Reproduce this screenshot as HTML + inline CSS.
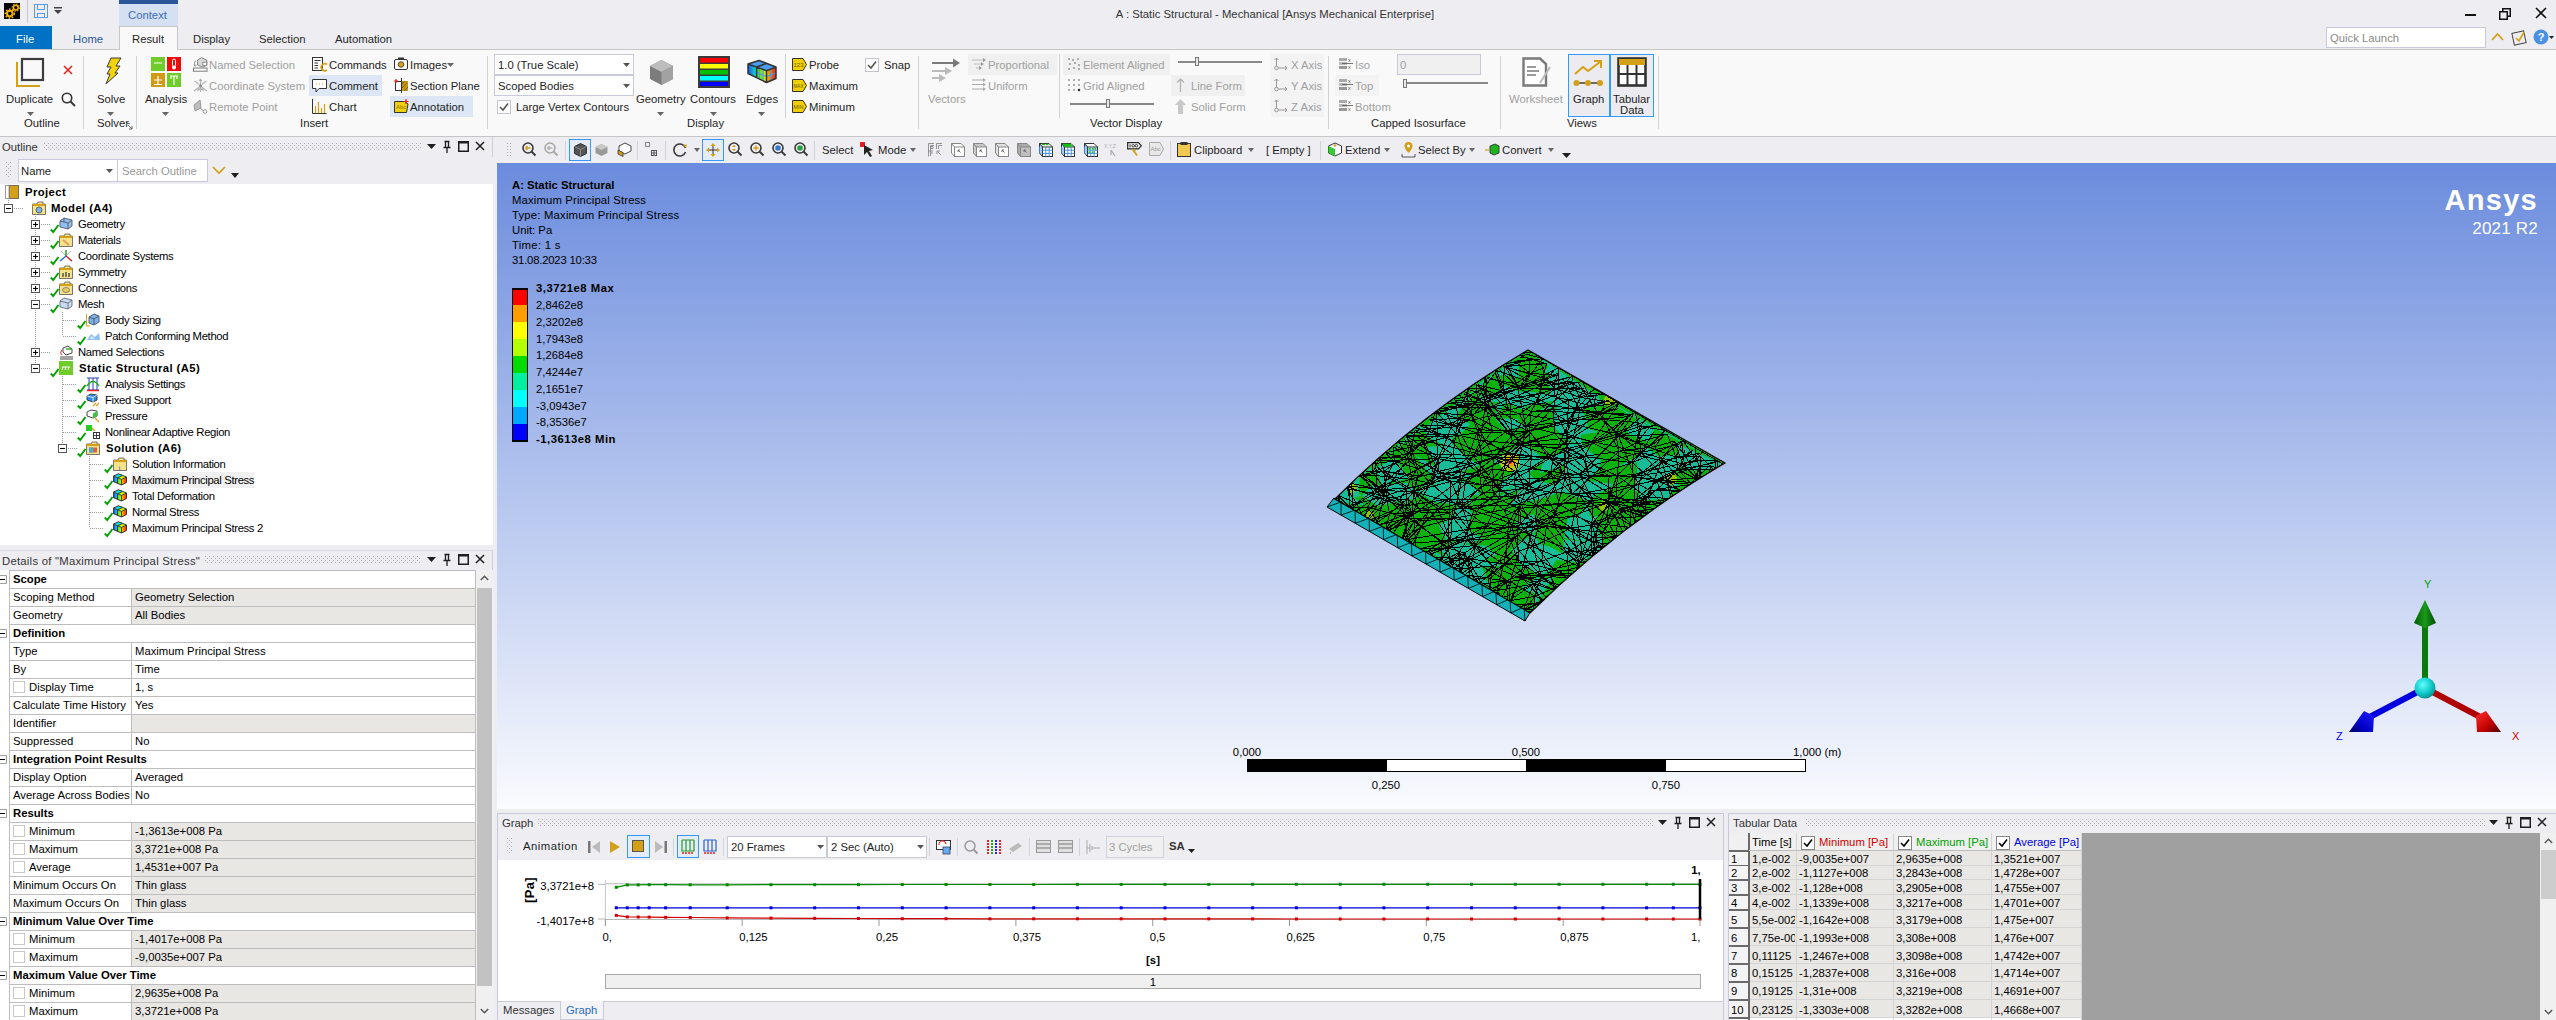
<!DOCTYPE html>
<html><head><meta charset="utf-8"><style>
html,body{margin:0;padding:0;width:2556px;height:1020px;overflow:hidden;background:#eeeef2;}
body{position:relative;font-family:"Liberation Sans", sans-serif;}
.t{position:absolute;white-space:nowrap;line-height:1;}
.r{position:absolute;}
.s{position:absolute;overflow:visible;}
</style></head><body>
<svg width="0" height="0" style="position:absolute"><defs><pattern id="dotpat" width="4" height="4" patternUnits="userSpaceOnUse"><rect x="0" y="0" width="1" height="1" fill="#a8a8b4"/><rect x="2" y="2" width="1" height="1" fill="#a8a8b4"/></pattern></defs></svg>
<div class="r" style="left:0px;top:0px;width:2556px;height:50px;background:#eeeef2;"></div>
<svg class="s" style="left:4px;top:3px;" width="16" height="16" viewBox="0 0 16 16"><rect width="16" height="16" fill="#000"/><circle cx="11.8" cy="4.6" r="2.4" fill="none" stroke="#f0b000" stroke-width="1.6"/><circle cx="11.8" cy="4.6" r="3.6" fill="none" stroke="#f0b000" stroke-width="1.2" stroke-dasharray="1.4 1.4"/><circle cx="5.8" cy="10.6" r="2.8" fill="none" stroke="#f0b000" stroke-width="2"/><circle cx="5.8" cy="10.6" r="4.5" fill="none" stroke="#f0b000" stroke-width="1.5" stroke-dasharray="1.7 1.6"/></svg>
<div class="r" style="left:27px;top:0px;width:1px;height:23px;background:#c8c8cc;"></div>
<svg class="s" style="left:34px;top:4px;" width="14" height="14" viewBox="0 0 14 14"><rect x="0.5" y="0.5" width="13" height="13" fill="none" stroke="#5a9ae6" stroke-width="1"/><rect x="3.5" y="0.5" width="7" height="5" fill="none" stroke="#5a9ae6"/><rect x="3.5" y="9.5" width="7" height="4" fill="none" stroke="#5a9ae6"/></svg>
<svg class="s" style="left:54px;top:7px;" width="8" height="7" viewBox="0 0 8 7"><rect x="0" y="0" width="8" height="1.5" fill="#444"/><path d="M0 3 L8 3 L4 7 Z" fill="#444"/></svg>
<div class="r" style="left:119px;top:0px;width:59px;height:4px;background:#2b579a;"></div>
<div class="r" style="left:119px;top:4px;width:59px;height:22px;background:#d5e1f2;"></div>
<div class="t" style="left:128px;top:10.43px;font-size:11.3px;color:#3c6cb4;">Context</div>
<div class="r" style="left:0px;top:26px;width:52px;height:23px;background:#0072c6;"></div>
<div class="t" style="left:16px;top:34.43px;font-size:11.3px;color:#ffffff;">File</div>
<div class="t" style="left:73px;top:34.43px;font-size:11.3px;color:#2b5797;">Home</div>
<div class="r" style="left:0px;top:49px;width:2556px;height:1px;background:#c6c6c6;"></div>
<div class="r" style="left:119px;top:26px;width:59px;height:24px;background:#f9f9f9;border:1px solid #c6c6c6;border-bottom:none;box-sizing:border-box;"></div>
<div class="t" style="left:132px;top:34.43px;font-size:11.3px;color:#262626;">Result</div>
<div class="t" style="left:193px;top:34.43px;font-size:11.3px;color:#262626;">Display</div>
<div class="t" style="left:259px;top:34.43px;font-size:11.3px;color:#262626;">Selection</div>
<div class="t" style="left:335px;top:34.43px;font-size:11.3px;color:#262626;">Automation</div>
<div class="t" style="left:1275px;top:9.43px;font-size:11.3px;color:#333;transform:translateX(-50%);">A : Static Structural - Mechanical [Ansys Mechanical Enterprise]</div>
<div class="r" style="left:2465px;top:14px;width:11px;height:1.5px;background:#111;"></div>
<svg class="s" style="left:2499px;top:8px;" width="12" height="12" viewBox="0 0 12 12"><rect x="0.75" y="3.75" width="7.5" height="7.5" fill="none" stroke="#111" stroke-width="1.5"/><path d="M3.75 3.75 V0.75 H11.25 V8.25 H8.25" fill="none" stroke="#111" stroke-width="1.5"/></svg>
<svg class="s" style="left:2535px;top:7px;" width="12" height="12" viewBox="0 0 12 12"><path d="M1 1 L11 11 M11 1 L1 11" stroke="#111" stroke-width="1.6"/></svg>
<div class="r" style="left:2326px;top:27px;width:160px;height:21px;background:#ffffff;border:1px solid #c8cadc;box-sizing:border-box;"></div>
<div class="t" style="left:2330px;top:33.43px;font-size:11.3px;color:#8a8a8a;">Quick Launch</div>
<svg class="s" style="left:2491px;top:32px;" width="13" height="9" viewBox="0 0 13 9"><path d="M1 8 L6.5 2 L12 8" fill="none" stroke="#d4a017" stroke-width="1.8"/></svg>
<svg class="s" style="left:2511px;top:29px;" width="17" height="17" viewBox="0 0 17 17"><rect x="2" y="3" width="12" height="12" fill="none" stroke="#444" transform="rotate(-12 8 9)"/><path d="M5 9 L8 12 L13 3" fill="none" stroke="#d4a017" stroke-width="1.6"/></svg>
<svg class="s" style="left:2533px;top:28px;" width="22" height="18" viewBox="0 0 22 18"><circle cx="8" cy="9" r="7.5" fill="#4a90e2"/><text x="8" y="13" font-size="11" font-weight="bold" fill="#fff" text-anchor="middle" font-family="Liberation Sans">?</text><path d="M16 8 L21 8 L18.5 11 Z" fill="#222"/></svg>
<div class="r" style="left:0px;top:50px;width:2556px;height:86px;background:#f9f9f9;"></div>
<div class="r" style="left:0px;top:136px;width:2556px;height:1px;background:#c6c6c6;"></div>
<svg class="s" style="left:16px;top:58px;" width="29" height="29" viewBox="0 0 29 29"><path d="M1 4 V28 H24" fill="none" stroke="#d4a017" stroke-width="2"/><rect x="6" y="1" width="21" height="21" fill="none" stroke="#3c3c3c" stroke-width="2.2"/></svg>
<svg class="s" style="left:63px;top:65px;" width="10" height="10" viewBox="0 0 10 10"><path d="M1 1 L9 9 M9 1 L1 9" stroke="#e81c1c" stroke-width="1.5"/></svg>
<div class="t" style="left:6px;top:94.43px;font-size:11.3px;color:#1e1e1e;">Duplicate</div>
<svg class="s" style="left:61px;top:92px;" width="15" height="15" viewBox="0 0 15 15"><circle cx="6" cy="6" r="4.7" fill="none" stroke="#333" stroke-width="1.6"/><path d="M9.5 9.5 L14 14" stroke="#333" stroke-width="1.8"/></svg>
<svg class="s" style="left:27px;top:112px;" width="7" height="4" viewBox="0 0 7 4"><path d="M0 0 L7 0 L3.5 4 Z" fill="#666"/></svg>
<div class="t" style="left:24px;top:118.43px;font-size:11.3px;color:#1e1e1e;">Outline</div>
<div class="r" style="left:83px;top:56px;width:1px;height:73px;background:#d0d0d8;"></div>
<svg class="s" style="left:103px;top:57px;" width="19" height="28" viewBox="0 0 19 28"><path d="M8 1 L18 1 L13 9 L17 9 L12 16 L15 16 L3 27 L7 17 L4 17 L8 10 L4 10 Z" fill="#f2d40c" stroke="#3a3a3a" stroke-width="1"/></svg>
<div class="t" style="left:97px;top:94.43px;font-size:11.3px;color:#1e1e1e;">Solve</div>
<svg class="s" style="left:107px;top:112px;" width="7" height="4" viewBox="0 0 7 4"><path d="M0 0 L7 0 L3.5 4 Z" fill="#666"/></svg>
<div class="t" style="left:97px;top:118.43px;font-size:11.3px;color:#1e1e1e;">Solver</div>
<svg class="s" style="left:126px;top:123px;" width="7" height="7" viewBox="0 0 7 7"><path d="M0.5 0.5 H4 M0.5 0.5 V4 M2 2 L6 6 M6 3 V6 H3" fill="none" stroke="#666" stroke-width="1"/></svg>
<div class="r" style="left:136px;top:56px;width:1px;height:73px;background:#d0d0d8;"></div>
<svg class="s" style="left:151px;top:57px;" width="31" height="31" viewBox="0 0 31 31"><rect x="0" y="0" width="14" height="14" fill="#6fcc2a"/><rect x="16" y="0" width="14" height="14" fill="#f00a0a"/><rect x="0" y="16" width="14" height="14" fill="#d09a14"/><rect x="16" y="16" width="14" height="14" fill="#6fcc2a"/><path d="M3 6 H11" stroke="#fff" stroke-width="1"/><rect x="21.5" y="2" width="3" height="8" rx="1.5" fill="none" stroke="#fff"/><circle cx="23" cy="10.5" r="2" fill="#fff"/><path d="M7 19 V27 M3 23 H11 M3 27.5 H11" stroke="#fff" stroke-width="1.2"/><path d="M19 19 H27 M23 19 V28 M20 19 V22 M26 19 V22" stroke="#fff" stroke-width="1.2"/></svg>
<div class="t" style="left:145px;top:94.43px;font-size:11.3px;color:#1e1e1e;">Analysis</div>
<svg class="s" style="left:162px;top:112px;" width="7" height="4" viewBox="0 0 7 4"><path d="M0 0 L7 0 L3.5 4 Z" fill="#666"/></svg>
<svg class="s" style="left:193px;top:57px;" width="15" height="15" viewBox="0 0 15 15"><path d="M4.5 3 L8.5 0.7 L13.8 3 V8 L10 10.3 L4.5 8 Z" fill="#d8d8d8" stroke="#7a7a7a" stroke-width="0.9"/><path d="M9.8 5.2 H13.8 V8.4 H9.8 Z" fill="#fff" stroke="#7a7a7a" stroke-width="0.9"/><path d="M2.6 3.5 Q0.6 6 2 8.5" fill="none" stroke="#8a8a8a" stroke-width="0.9"/><path d="M1 7.5 L2.2 9.3 L3.6 7.8" fill="none" stroke="#8a8a8a" stroke-width="0.9"/><rect x="0.5" y="11" width="13.5" height="3.2" fill="#fff" stroke="#7a7a7a" stroke-width="1"/></svg>
<div class="t" style="left:209px;top:60.43px;font-size:11.3px;color:#a0a0a0;">Named Selection</div>
<svg class="s" style="left:193px;top:78px;" width="15" height="15" viewBox="0 0 15 15"><g stroke="#b4b4b4" stroke-width="1.2" fill="none"><path d="M7.5 7.5 V1.5 M1.5 3 L6 6.3 M13.5 3 L9 6.3 M1 13 L6 9.3 M14 13 L9 9.3 M7.5 9 V14"/></g><path d="M7.5 0.5 L9.3 3 H5.7 Z M3.5 13 L6.5 9 L6.8 12 Z M11.5 13 L8.5 9 L8.2 12 Z" fill="#a8a8a8"/><circle cx="7.5" cy="7.8" r="1.5" fill="#888"/></svg>
<div class="t" style="left:209px;top:81.43px;font-size:11.3px;color:#a0a0a0;">Coordinate System</div>
<svg class="s" style="left:193px;top:99px;" width="15" height="15" viewBox="0 0 15 15"><path d="M1 6 L7 1 L8 9 L2 12 Z" fill="#bdbdbd" stroke="#9a9a9a"/><path d="M7 9 L11 12" stroke="#999"/><circle cx="12" cy="12.5" r="1.8" fill="none" stroke="#999"/></svg>
<div class="t" style="left:209px;top:102.43px;font-size:11.3px;color:#a0a0a0;">Remote Point</div>
<svg class="s" style="left:312px;top:57px;" width="16" height="15" viewBox="0 0 16 15"><rect x="0.5" y="0.5" width="10" height="13" fill="#fff" stroke="#333"/><path d="M2.5 3.5 H8.5 M2.5 6 H6 M2.5 8.5 H6 M2.5 11 H6" stroke="#333"/><path d="M15 7.5 A3.5 3.5 0 1 0 15 13" fill="none" stroke="#d4a017" stroke-width="1.8"/></svg>
<div class="t" style="left:329px;top:60.43px;font-size:11.3px;color:#1e1e1e;">Commands</div>
<div class="r" style="left:309px;top:75px;width:73px;height:21px;background:#dce6f4;"></div>
<svg class="s" style="left:312px;top:79px;" width="15" height="14" viewBox="0 0 15 14"><path d="M0.5 0.5 H14.5 V9.5 H7 L4 13 V9.5 H0.5 Z" fill="#fff" stroke="#333"/><path d="M4 5 H5 M7 5 H8 M10 5 H11" stroke="#d4a017"/></svg>
<div class="t" style="left:329px;top:81.43px;font-size:11.3px;color:#1e1e1e;">Comment</div>
<svg class="s" style="left:312px;top:99px;" width="15" height="15" viewBox="0 0 15 15"><path d="M0.5 0 V14.5 H14.5" fill="none" stroke="#333"/><path d="M3.5 14 V7 M6.5 14 V3 M9.5 14 V9 M12.5 14 V5" stroke="#d4a017" stroke-width="1.2"/></svg>
<div class="t" style="left:329px;top:102.43px;font-size:11.3px;color:#1e1e1e;">Chart</div>
<svg class="s" style="left:394px;top:57px;" width="15" height="14" viewBox="0 0 15 14"><rect x="0.5" y="2.5" width="13" height="10" rx="1.5" fill="#fff" stroke="#333"/><rect x="4" y="0.5" width="6" height="2" fill="#333"/><circle cx="7" cy="7.5" r="2.8" fill="#d4a017" stroke="#333" stroke-width="0.8"/></svg>
<div class="t" style="left:410px;top:60.43px;font-size:11.3px;color:#1e1e1e;">Images</div>
<svg class="s" style="left:447px;top:63px;" width="7" height="4" viewBox="0 0 7 4"><path d="M0 0 L7 0 L3.5 4 Z" fill="#666"/></svg>
<svg class="s" style="left:394px;top:78px;" width="15" height="15" viewBox="0 0 15 15"><rect x="1.5" y="3.5" width="12" height="9" fill="#fff" stroke="#333"/><rect x="7" y="3" width="7" height="10" fill="#c8960a"/><path d="M8 6 L11 3 M8 10 L13 5 M10 13 L14 9" stroke="#7a5a00"/><path d="M7.5 0 V15" stroke="#333"/><path d="M2 1 V5 M0 3 H4" stroke="#e81c1c" stroke-width="1.2"/></svg>
<div class="t" style="left:410px;top:81.43px;font-size:11.3px;color:#1e1e1e;">Section Plane</div>
<div class="r" style="left:390px;top:96px;width:83px;height:21px;background:#dce6f4;"></div>
<svg class="s" style="left:394px;top:99px;" width="15" height="15" viewBox="0 0 15 15"><path d="M0.5 2.5 H11 L14 5 L12.5 13.5 H0.5 Z" fill="#f0d010" stroke="#333"/><text x="2" y="10" font-size="6" fill="#8a7000" font-family="Liberation Sans">Abc</text><path d="M12 0 V5 M9.5 2.5 H14.5" stroke="#e81c1c" stroke-width="1.2"/></svg>
<div class="t" style="left:410px;top:102.43px;font-size:11.3px;color:#1e1e1e;">Annotation</div>
<div class="t" style="left:300px;top:118.43px;font-size:11.3px;color:#1e1e1e;">Insert</div>
<div class="r" style="left:487px;top:56px;width:1px;height:73px;background:#d0d0d8;"></div>
<div class="r" style="left:494px;top:54px;width:140px;height:21px;background:#ffffff;border:1px solid #c8cadc;box-sizing:border-box;"></div>
<div class="t" style="left:498px;top:60.43px;font-size:11.3px;color:#1e1e1e;">1.0 (True Scale)</div>
<svg class="s" style="left:623px;top:63px;" width="7" height="4" viewBox="0 0 7 4"><path d="M0 0 L7 0 L3.5 4 Z" fill="#555"/></svg>
<div class="r" style="left:494px;top:75px;width:140px;height:21px;background:#ffffff;border:1px solid #c8cadc;box-sizing:border-box;"></div>
<div class="t" style="left:498px;top:81.43px;font-size:11.3px;color:#1e1e1e;">Scoped Bodies</div>
<svg class="s" style="left:623px;top:84px;" width="7" height="4" viewBox="0 0 7 4"><path d="M0 0 L7 0 L3.5 4 Z" fill="#555"/></svg>
<div class="r" style="left:497px;top:100px;width:14px;height:14px;background:#ffffff;border:1px solid #c4c4cc;box-sizing:border-box;"></div>
<svg class="s" style="left:499px;top:102px;" width="10" height="10" viewBox="0 0 10 10"><path d="M1 5 L4 8 L9 1.5" fill="none" stroke="#555" stroke-width="1.6"/></svg>
<div class="t" style="left:516px;top:102.43px;font-size:11.3px;color:#1e1e1e;">Large Vertex Contours</div>
<svg class="s" style="left:649px;top:60px;" width="25" height="25" viewBox="0 0 25 25"><path d="M12.5 0 L24 6 L24 19 L12.5 25 L1 19 L1 6 Z" fill="#7c7c7c"/><path d="M12.5 0 L24 6 L12.5 12 L1 6 Z" fill="#bdbdbd"/><path d="M12.5 12 L24 6 L24 19 L12.5 25 Z" fill="#a2a2a2"/></svg>
<div class="t" style="left:636px;top:94.43px;font-size:11.3px;color:#1e1e1e;">Geometry</div>
<svg class="s" style="left:657px;top:112px;" width="7" height="4" viewBox="0 0 7 4"><path d="M0 0 L7 0 L3.5 4 Z" fill="#666"/></svg>
<svg class="s" style="left:698px;top:56px;" width="32" height="32" viewBox="0 0 32 32"><rect x="0" y="0" width="32" height="32" fill="#3a3a3a"/><rect x="2" y="2" width="28" height="4.5" fill="#f00"/><rect x="2" y="8" width="28" height="4.5" fill="#ff0"/><rect x="2" y="14" width="28" height="4.5" fill="#00c000"/><rect x="2" y="20" width="28" height="4.5" fill="#0ff"/><rect x="2" y="26" width="28" height="4" fill="#00f"/></svg>
<div class="t" style="left:690px;top:94.43px;font-size:11.3px;color:#1e1e1e;">Contours</div>
<svg class="s" style="left:710px;top:112px;" width="7" height="4" viewBox="0 0 7 4"><path d="M0 0 L7 0 L3.5 4 Z" fill="#666"/></svg>
<svg class="s" style="left:747px;top:60px;" width="30" height="24" viewBox="0 0 30 24"><defs><linearGradient id="eg1" x1="0" x2="1"><stop offset="0" stop-color="#2050f0"/><stop offset="1" stop-color="#10e8c8"/></linearGradient><linearGradient id="eg2" x1="0" x2="1"><stop offset="0" stop-color="#20e020"/><stop offset="1" stop-color="#f0f000"/></linearGradient><linearGradient id="eg3" x1="0" x2="1"><stop offset="0" stop-color="#f0c000"/><stop offset="1" stop-color="#e81818"/></linearGradient></defs><path d="M1 4 L9.6 7 L9.6 17.6 L1 13.5 Z" fill="url(#eg1)"/><path d="M9.6 7 L19.5 10.7 L19.5 22.5 L9.6 17.6 Z" fill="url(#eg2)"/><path d="M19.5 10.7 L29 7 L29 18.5 L19.5 22.5 Z" fill="url(#eg3)"/><path d="M1 4 L12 0.5 L29 7 L19.5 10.7 Z" fill="#4a9cf0"/><path d="M12.5 8.5 V19 M16 9.8 V21 M9.6 12.5 L19.5 16.5 M24 9 V20.5 M19.5 16.5 L29 13" stroke="#4a9cf0" stroke-width="1.2"/><path d="M1 4 L12 0.5 L29 7 L29 18.5 L19.5 22.5 L1 13.5 Z M1 4 L19.5 10.7 L29 7 M19.5 10.7 V22.5 M9.6 7 V17.6 M9.6 7 L20 3.3" fill="none" stroke="#333" stroke-width="1.5" stroke-linejoin="round"/></svg>
<div class="t" style="left:746px;top:94.43px;font-size:11.3px;color:#1e1e1e;">Edges</div>
<svg class="s" style="left:758px;top:112px;" width="7" height="4" viewBox="0 0 7 4"><path d="M0 0 L7 0 L3.5 4 Z" fill="#666"/></svg>
<div class="t" style="left:687px;top:118.43px;font-size:11.3px;color:#1e1e1e;">Display</div>
<div class="r" style="left:785px;top:54px;width:1px;height:64px;background:#d0d0d8;"></div>
<svg class="s" style="left:792px;top:58px;" width="15" height="13" viewBox="0 0 15 13"><path d="M0.5 0.5 H11 L14.5 6.5 L11 12.5 H0.5 Z" fill="#f0d000" stroke="#333"/><text x="1.5" y="9.3" font-size="6" textLength="10" lengthAdjust="spacingAndGlyphs" fill="#6a5a00" font-family="Liberation Sans">123</text></svg>
<div class="t" style="left:809px;top:60.43px;font-size:11.3px;color:#1e1e1e;">Probe</div>
<svg class="s" style="left:792px;top:79px;" width="15" height="13" viewBox="0 0 15 13"><path d="M0.5 0.5 H11 L14.5 6.5 L11 12.5 H0.5 Z" fill="#f0d000" stroke="#333"/><text x="1.5" y="9.3" font-size="6" textLength="10" lengthAdjust="spacingAndGlyphs" fill="#6a5a00" font-family="Liberation Sans">MAX</text></svg>
<div class="t" style="left:809px;top:81.43px;font-size:11.3px;color:#1e1e1e;">Maximum</div>
<svg class="s" style="left:792px;top:100px;" width="15" height="13" viewBox="0 0 15 13"><path d="M0.5 0.5 H11 L14.5 6.5 L11 12.5 H0.5 Z" fill="#f0d000" stroke="#333"/><text x="1.5" y="9.3" font-size="6" textLength="10" lengthAdjust="spacingAndGlyphs" fill="#6a5a00" font-family="Liberation Sans">MIN</text></svg>
<div class="t" style="left:809px;top:102.43px;font-size:11.3px;color:#1e1e1e;">Minimum</div>
<div class="r" style="left:865px;top:58px;width:14px;height:14px;background:#ffffff;border:1px solid #c4c4cc;box-sizing:border-box;"></div>
<svg class="s" style="left:867px;top:60px;" width="10" height="10" viewBox="0 0 10 10"><path d="M1 5 L4 8 L9 1.5" fill="none" stroke="#555" stroke-width="1.6"/></svg>
<div class="t" style="left:884px;top:60.43px;font-size:11.3px;color:#1e1e1e;">Snap</div>
<div class="r" style="left:918px;top:56px;width:1px;height:73px;background:#d0d0d8;"></div>
<svg class="s" style="left:931px;top:57px;" width="30" height="28" viewBox="0 0 30 28"><path d="M1 6 H25" stroke="#7a7a7a" stroke-width="2"/><path d="M22 1.5 L29 6 L22 10.5 Z" fill="#7a7a7a"/><path d="M1 14 H16" stroke="#bbb" stroke-width="2"/><path d="M14 10 L21 14 L14 18 Z" fill="#bbb"/><path d="M1 21 H10" stroke="#bbb" stroke-width="2"/><path d="M8 17 L15 21 L8 25 Z" fill="#bbb"/></svg>
<div class="t" style="left:928px;top:94.43px;font-size:11.3px;color:#a0a0a0;">Vectors</div>
<div class="r" style="left:968px;top:54px;width:89px;height:21px;background:#f0f0f0;"></div>
<svg class="s" style="left:972px;top:57px;" width="15" height="14" viewBox="0 0 15 14"><path d="M0 3 H12 M2 7 H10 M4 11 H8" stroke="#bbb"/><path d="M11 1 L14 3 L11 5 Z M9 5 L12 7 L9 9 Z M7 9 L10 11 L7 13 Z" fill="#999"/></svg>
<div class="t" style="left:988px;top:60.43px;font-size:11.3px;color:#a0a0a0;">Proportional</div>
<svg class="s" style="left:972px;top:78px;" width="15" height="14" viewBox="0 0 15 14"><path d="M0 2 H12 M0 6.5 H12 M0 11 H12" stroke="#aaa"/><path d="M11 0 L14 2 L11 4 Z M11 4.5 L14 6.5 L11 8.5 Z M11 9 L14 11 L11 13 Z" fill="#aaa"/></svg>
<div class="t" style="left:988px;top:81.43px;font-size:11.3px;color:#a0a0a0;">Uniform</div>
<div class="r" style="left:1059px;top:54px;width:1px;height:64px;background:#d0d0d8;"></div>
<div class="r" style="left:1063px;top:54px;width:107px;height:21px;background:#f0f0f0;"></div>
<svg class="s" style="left:1067px;top:57px;" width="15" height="14" viewBox="0 0 15 14"><g fill="#999"><circle cx="2" cy="2" r="1"/><circle cx="6" cy="3" r="1"/><circle cx="11" cy="2" r="1"/><circle cx="3" cy="7" r="1"/><circle cx="8" cy="6" r="1"/><circle cx="12" cy="8" r="1"/><circle cx="2" cy="12" r="1"/><circle cx="7" cy="11" r="1"/><circle cx="12" cy="12" r="1"/></g></svg>
<div class="t" style="left:1083px;top:60.43px;font-size:11.3px;color:#a0a0a0;">Element Aligned</div>
<svg class="s" style="left:1067px;top:78px;" width="15" height="14" viewBox="0 0 15 14"><g fill="#999"><circle cx="2" cy="2" r="1"/><circle cx="7" cy="2" r="1"/><circle cx="12" cy="2" r="1"/><circle cx="2" cy="7" r="1"/><circle cx="7" cy="7" r="1"/><circle cx="12" cy="7" r="1"/><circle cx="2" cy="12" r="1"/><circle cx="7" cy="12" r="1"/><circle cx="12" cy="12" r="1.3" fill="#333"/></g></svg>
<div class="t" style="left:1083px;top:81.43px;font-size:11.3px;color:#a0a0a0;">Grid Aligned</div>
<div class="r" style="left:1070px;top:103px;width:84px;height:2px;background:#888;"></div>
<div class="r" style="left:1106px;top:99px;width:4px;height:9px;background:#e8e8e8;border:1px solid #777;box-sizing:border-box;"></div>
<div class="r" style="left:1178px;top:61px;width:84px;height:2px;background:#888;"></div>
<div class="r" style="left:1195px;top:57px;width:4px;height:9px;background:#e8e8e8;border:1px solid #777;box-sizing:border-box;"></div>
<div class="r" style="left:1171px;top:75px;width:74px;height:21px;background:#f0f0f0;"></div>
<svg class="s" style="left:1176px;top:78px;" width="9" height="15" viewBox="0 0 9 15"><path d="M4.5 14 V1 M1 4.5 L4.5 1 L8 4.5" fill="none" stroke="#b0b0b0" stroke-width="1.2"/></svg>
<div class="t" style="left:1191px;top:81.43px;font-size:11.3px;color:#a0a0a0;">Line Form</div>
<svg class="s" style="left:1175px;top:99px;" width="11" height="15" viewBox="0 0 11 15"><path d="M5.5 0 L11 6 H8 V15 H3 V6 H0 Z" fill="#c8c8c8"/></svg>
<div class="t" style="left:1191px;top:102.43px;font-size:11.3px;color:#a0a0a0;">Solid Form</div>
<div class="t" style="left:1090px;top:118.43px;font-size:11.3px;color:#1e1e1e;">Vector Display</div>
<div class="r" style="left:1271px;top:54px;width:53px;height:63px;background:#f3f3f3;"></div>
<svg class="s" style="left:1274px;top:57px;" width="14" height="14" viewBox="0 0 14 14"><path d="M2.5 1 V11 H13 M11 9 L13 11 L11 13 M0.5 3 L2.5 1 L4.5 3" fill="none" stroke="#999" stroke-width="1"/><circle cx="2.5" cy="11" r="1.8" fill="#f3f3f3" stroke="#999"/></svg>
<div class="t" style="left:1291px;top:60.43px;font-size:11.3px;color:#a0a0a0;">X Axis</div>
<svg class="s" style="left:1274px;top:78px;" width="14" height="14" viewBox="0 0 14 14"><path d="M2.5 1 V11 H13 M11 9 L13 11 L11 13 M0.5 3 L2.5 1 L4.5 3" fill="none" stroke="#999" stroke-width="1"/><circle cx="2.5" cy="11" r="1.8" fill="#f3f3f3" stroke="#999"/></svg>
<div class="t" style="left:1291px;top:81.43px;font-size:11.3px;color:#a0a0a0;">Y Axis</div>
<svg class="s" style="left:1274px;top:99px;" width="14" height="14" viewBox="0 0 14 14"><path d="M2.5 1 V11 H13 M11 9 L13 11 L11 13 M0.5 3 L2.5 1 L4.5 3" fill="none" stroke="#999" stroke-width="1"/><circle cx="2.5" cy="11" r="1.8" fill="#f3f3f3" stroke="#999"/></svg>
<div class="t" style="left:1291px;top:102.43px;font-size:11.3px;color:#a0a0a0;">Z Axis</div>
<div class="r" style="left:1328px;top:56px;width:1px;height:73px;background:#d0d0d8;"></div>
<svg class="s" style="left:1339px;top:57px;" width="14" height="13" viewBox="0 0 14 13"><rect x="0" y="1" width="8" height="3" fill="#aaa"/><rect x="0" y="5" width="8" height="3" fill="#bbb"/><rect x="0" y="9" width="8" height="3" fill="#999"/><path d="M3 6.5 H14" stroke="#555" stroke-width="0.8"/><text x="9" y="5" font-size="5.5" fill="#555" font-family="Liberation Sans">x</text><text x="9" y="12" font-size="5.5" fill="#555" font-family="Liberation Sans">x</text></svg>
<div class="t" style="left:1355px;top:60.43px;font-size:11.3px;color:#a0a0a0;">Iso</div>
<div class="r" style="left:1335px;top:75px;width:44px;height:21px;background:#f3f3f3;"></div>
<svg class="s" style="left:1339px;top:78px;" width="14" height="13" viewBox="0 0 14 13"><rect x="0" y="1" width="8" height="3" fill="#aaa"/><rect x="0" y="5" width="8" height="3" fill="#bbb"/><rect x="0" y="9" width="8" height="3" fill="#999"/><path d="M3 6.5 H14" stroke="#555" stroke-width="0.8"/><text x="9" y="5" font-size="5.5" fill="#555" font-family="Liberation Sans">x</text><text x="9" y="12" font-size="5.5" fill="#555" font-family="Liberation Sans">x</text></svg>
<div class="t" style="left:1355px;top:81.43px;font-size:11.3px;color:#a0a0a0;">Top</div>
<svg class="s" style="left:1339px;top:99px;" width="14" height="13" viewBox="0 0 14 13"><rect x="0" y="1" width="8" height="3" fill="#aaa"/><rect x="0" y="5" width="8" height="3" fill="#bbb"/><rect x="0" y="9" width="8" height="3" fill="#999"/><path d="M3 6.5 H14" stroke="#555" stroke-width="0.8"/><text x="9" y="5" font-size="5.5" fill="#555" font-family="Liberation Sans">x</text><text x="9" y="12" font-size="5.5" fill="#555" font-family="Liberation Sans">x</text></svg>
<div class="t" style="left:1355px;top:102.43px;font-size:11.3px;color:#a0a0a0;">Bottom</div>
<div class="r" style="left:1397px;top:54px;width:84px;height:21px;background:#f0f0f0;border:1px solid #c8cadc;box-sizing:border-box;"></div>
<div class="t" style="left:1400px;top:60.43px;font-size:11.3px;color:#a0a0a0;">0</div>
<div class="r" style="left:1405px;top:82px;width:83px;height:2px;background:#888;"></div>
<div class="r" style="left:1403px;top:79px;width:4px;height:9px;background:#e8e8e8;border:1px solid #777;box-sizing:border-box;"></div>
<div class="t" style="left:1371px;top:118.43px;font-size:11.3px;color:#1e1e1e;">Capped Isosurface</div>
<div class="r" style="left:1500px;top:56px;width:1px;height:73px;background:#d0d0d8;"></div>
<svg class="s" style="left:1522px;top:57px;" width="30" height="30" viewBox="0 0 30 30"><path d="M1.5 1.5 H18 L24 7 V28.5 H1.5 Z" fill="#fff" stroke="#7a7a7a" stroke-width="2.4"/><path d="M5 10 H14 M5 14 H17 M5 18 H14" stroke="#7a7a7a" stroke-width="1.6"/><path d="M28 10 L18 26" stroke="#bbb" stroke-width="2"/></svg>
<div class="t" style="left:1509px;top:94.43px;font-size:11.3px;color:#a0a0a0;">Worksheet</div>
<div class="r" style="left:1568px;top:54px;width:42px;height:63px;background:#ebebf0;border:1px solid #3399ff;box-sizing:border-box;"></div>
<div class="r" style="left:1610px;top:54px;width:44px;height:63px;background:#ebebf0;border:1px solid #3399ff;box-sizing:border-box;"></div>
<svg class="s" style="left:1573px;top:60px;" width="32" height="28" viewBox="0 0 32 28"><path d="M2 14 L10 7 L15 11 L27 2" fill="none" stroke="#d4a017" stroke-width="2"/><path d="M21 1 H28 V8" fill="none" stroke="#d4a017" stroke-width="2"/><path d="M3 23 H27" stroke="#333" stroke-width="1.4"/><circle cx="3.5" cy="23" r="3" fill="#d4a017"/><circle cx="15" cy="23" r="3" fill="#d4a017"/><circle cx="27" cy="23" r="3" fill="#d4a017"/></svg>
<div class="t" style="left:1573px;top:94.43px;font-size:11.3px;color:#1e1e1e;">Graph</div>
<svg class="s" style="left:1617px;top:57px;" width="30" height="30" viewBox="0 0 30 30"><rect x="1.5" y="1.5" width="27" height="27" fill="#fff" stroke="#333" stroke-width="2.6"/><rect x="2" y="2" width="26" height="6" fill="#d4a017"/><path d="M1.5 17 H28.5 M10.5 8 V28.5 M19.5 8 V28.5" stroke="#333" stroke-width="2"/></svg>
<div class="t" style="left:1613px;top:94.43px;font-size:11.3px;color:#1e1e1e;">Tabular</div>
<div class="t" style="left:1620px;top:105.43px;font-size:11.3px;color:#1e1e1e;">Data</div>
<div class="t" style="left:1567px;top:118.43px;font-size:11.3px;color:#1e1e1e;">Views</div>
<div class="r" style="left:1658px;top:56px;width:1px;height:73px;background:#d0d0d8;"></div>
<div class="t" style="left:2px;top:142.43px;font-size:11.3px;color:#333;">Outline</div>
<svg class="s" style="left:44px;top:143px" width="378" height="8"><rect width="378" height="8" fill="url(#dotpat)"/></svg>
<svg class="s" style="left:427px;top:144px;" width="9" height="5" viewBox="0 0 9 5"><path d="M0 0 H9 L4.5 5 Z" fill="#1e1e1e"/></svg>
<svg class="s" style="left:443px;top:141px;" width="8" height="12" viewBox="0 0 8 12"><path d="M1.5 0.5 H6.5 M2.5 0.5 V6 M5.5 0.5 V6 M0.5 6.5 H7.5 M4 6.5 V12" fill="none" stroke="#1e1e1e" stroke-width="1.3"/></svg>
<svg class="s" style="left:458px;top:141px;" width="11" height="11" viewBox="0 0 11 11"><rect x="0.75" y="0.75" width="9.5" height="9.5" fill="none" stroke="#1e1e1e" stroke-width="1.5"/><path d="M0.75 1.5 H10.25" stroke="#1e1e1e" stroke-width="2"/></svg>
<svg class="s" style="left:475px;top:141px;" width="10" height="10" viewBox="0 0 10 10"><path d="M1 1 L9 9 M9 1 L1 9" stroke="#1e1e1e" stroke-width="1.5"/></svg>
<div class="r" style="left:492px;top:137px;width:1px;height:20px;background:#d0d0dc;"></div>
<svg class="s" style="left:6px;top:162px" width="5" height="16"><rect width="5" height="16" fill="url(#dotpat)"/></svg>
<div class="r" style="left:18px;top:159px;width:100px;height:23px;background:#fff;border:1px solid #c8cadc;box-sizing:border-box;"></div>
<div class="t" style="left:21px;top:166.43px;font-size:11.3px;color:#1e1e1e;">Name</div>
<svg class="s" style="left:106px;top:169px;" width="7" height="4" viewBox="0 0 7 4"><path d="M0 0 H7 L3.5 4 Z" fill="#555"/></svg>
<div class="r" style="left:117px;top:159px;width:91px;height:23px;background:#fff;border:1px solid #c8cadc;box-sizing:border-box;"></div>
<div class="t" style="left:122px;top:166.43px;font-size:11.3px;color:#9a9a9a;">Search Outline</div>
<svg class="s" style="left:212px;top:166px;" width="14" height="8" viewBox="0 0 14 8"><path d="M1 1 L7 7 L13 1" fill="none" stroke="#d4a017" stroke-width="1.6"/></svg>
<svg class="s" style="left:231px;top:173px;" width="8" height="5" viewBox="0 0 8 5"><path d="M0 0 H8 L4 5 Z" fill="#1e1e1e"/></svg>
<div class="r" style="left:0px;top:184px;width:493px;height:361px;background:#ffffff;"></div>
<div class="r" style="left:493px;top:137px;width:4px;height:408px;background:#eeeef2;"></div>
<div class="r" style="left:8px;top:200px;width:1px;height:4px;background-image:linear-gradient(180deg,#9a9a9a 50%,transparent 50%);background-size:1px 2px;"></div>
<div class="r" style="left:35px;top:216px;width:1px;height:152px;background-image:linear-gradient(180deg,#9a9a9a 50%,transparent 50%);background-size:1px 2px;"></div>
<div class="r" style="left:62px;top:312px;width:1px;height:24px;background-image:linear-gradient(180deg,#9a9a9a 50%,transparent 50%);background-size:1px 2px;"></div>
<div class="r" style="left:62px;top:376px;width:1px;height:72px;background-image:linear-gradient(180deg,#9a9a9a 50%,transparent 50%);background-size:1px 2px;"></div>
<div class="r" style="left:89px;top:456px;width:1px;height:72px;background-image:linear-gradient(180deg,#9a9a9a 50%,transparent 50%);background-size:1px 2px;"></div>
<div class="r" style="left:131px;top:472px;width:123px;height:16px;background:#f0f0f0;"></div>
<svg class="s" style="left:5px;top:185px;" width="14" height="14" viewBox="0 0 14 14"><rect x="4" y="0.5" width="9.5" height="13" fill="#d4a017" stroke="#555" stroke-width="0.8"/><rect x="0.5" y="0.5" width="3.5" height="13" fill="#fff" stroke="#888" stroke-width="0.8"/></svg>
<div class="t" style="left:25px;top:187.43px;font-size:11.3px;color:#000;font-weight:bold;letter-spacing:0.4px;">Project</div>
<svg class="s" style="left:4px;top:204px;" width="9" height="9" viewBox="0 0 9 9"><rect x="0.5" y="0.5" width="8" height="8" fill="#fff" stroke="#555" stroke-width="1"/><path d="M2 4.5 H7" stroke="#000" stroke-width="1.1"/></svg>
<div class="r" style="left:14px;top:208px;width:9px;height:1px;background-image:linear-gradient(90deg,#9a9a9a 50%,transparent 50%);background-size:2px 1px;"></div>
<svg class="s" style="left:32px;top:201px;" width="14" height="14" viewBox="0 0 14 14"><path d="M0.5 3 H5 L6 1 H11 V3 H13.5 V13.5 H0.5 Z" fill="#f5e28a" stroke="#555" stroke-width="0.8"/><path d="M0.5 3 H13.5 V5 H0.5 Z" fill="#d4a017"/><circle cx="7" cy="9" r="3" fill="#7fb0e8" stroke="#456" stroke-width="0.8"/></svg>
<div class="t" style="left:51px;top:203.43px;font-size:11.3px;color:#000;font-weight:bold;letter-spacing:0.4px;">Model (A4)</div>
<svg class="s" style="left:31px;top:220px;" width="9" height="9" viewBox="0 0 9 9"><rect x="0.5" y="0.5" width="8" height="8" fill="#fff" stroke="#555" stroke-width="1"/><path d="M2 4.5 H7" stroke="#000" stroke-width="1.1"/><path d="M4.5 2 V7" stroke="#000" stroke-width="1.1"/></svg>
<div class="r" style="left:41px;top:224px;width:9px;height:1px;background-image:linear-gradient(90deg,#9a9a9a 50%,transparent 50%);background-size:2px 1px;"></div>
<svg class="s" style="left:50px;top:224px;" width="9" height="9" viewBox="0 0 9 9"><path d="M0.8 5.5 L3.2 8 L8.5 1" fill="none" stroke="#00a000" stroke-width="1.9"/></svg>
<svg class="s" style="left:59px;top:217px;" width="14" height="14" viewBox="0 0 14 14"><path d="M1 4 L5 1 L13 3 L13 9 L9 12 L1 10 Z" fill="#8ec0f0" stroke="#556" stroke-width="0.9"/><path d="M1 4 L9 6 L13 3 M9 6 V12 M5 1 V5" fill="none" stroke="#556" stroke-width="0.9"/></svg>
<div class="t" style="left:78px;top:219.43px;font-size:11.3px;color:#000;letter-spacing:-0.35px;">Geometry</div>
<svg class="s" style="left:31px;top:236px;" width="9" height="9" viewBox="0 0 9 9"><rect x="0.5" y="0.5" width="8" height="8" fill="#fff" stroke="#555" stroke-width="1"/><path d="M2 4.5 H7" stroke="#000" stroke-width="1.1"/><path d="M4.5 2 V7" stroke="#000" stroke-width="1.1"/></svg>
<div class="r" style="left:41px;top:240px;width:9px;height:1px;background-image:linear-gradient(90deg,#9a9a9a 50%,transparent 50%);background-size:2px 1px;"></div>
<svg class="s" style="left:50px;top:240px;" width="9" height="9" viewBox="0 0 9 9"><path d="M0.8 5.5 L3.2 8 L8.5 1" fill="none" stroke="#00a000" stroke-width="1.9"/></svg>
<svg class="s" style="left:59px;top:233px;" width="14" height="14" viewBox="0 0 14 14"><path d="M0.5 3 H5 L6 1 H11 V3 H13.5 V13.5 H0.5 Z" fill="#f5e28a" stroke="#555" stroke-width="0.8"/><path d="M0.5 3 H13.5 V5 H0.5 Z" fill="#d4a017"/><path d="M4 7 L10 12" stroke="#e0a060" stroke-width="2"/></svg>
<div class="t" style="left:78px;top:235.43px;font-size:11.3px;color:#000;letter-spacing:-0.35px;">Materials</div>
<svg class="s" style="left:31px;top:252px;" width="9" height="9" viewBox="0 0 9 9"><rect x="0.5" y="0.5" width="8" height="8" fill="#fff" stroke="#555" stroke-width="1"/><path d="M2 4.5 H7" stroke="#000" stroke-width="1.1"/><path d="M4.5 2 V7" stroke="#000" stroke-width="1.1"/></svg>
<div class="r" style="left:41px;top:256px;width:9px;height:1px;background-image:linear-gradient(90deg,#9a9a9a 50%,transparent 50%);background-size:2px 1px;"></div>
<svg class="s" style="left:50px;top:256px;" width="9" height="9" viewBox="0 0 9 9"><path d="M0.8 5.5 L3.2 8 L8.5 1" fill="none" stroke="#00a000" stroke-width="1.9"/></svg>
<svg class="s" style="left:59px;top:249px;" width="14" height="14" viewBox="0 0 14 14"><path d="M7 7 V1 M7 7 L1 12 M7 7 L13 12 M2 2 L12 12 M12 2 L2 12" stroke="#aaa" stroke-width="0.8"/><path d="M7 7 V1" stroke="#2a2" stroke-width="1.4"/><path d="M7 7 L1 12" stroke="#27e" stroke-width="1.4"/><path d="M7 7 L13 12" stroke="#e22" stroke-width="1.4"/></svg>
<div class="t" style="left:78px;top:251.43px;font-size:11.3px;color:#000;letter-spacing:-0.35px;">Coordinate Systems</div>
<svg class="s" style="left:31px;top:268px;" width="9" height="9" viewBox="0 0 9 9"><rect x="0.5" y="0.5" width="8" height="8" fill="#fff" stroke="#555" stroke-width="1"/><path d="M2 4.5 H7" stroke="#000" stroke-width="1.1"/><path d="M4.5 2 V7" stroke="#000" stroke-width="1.1"/></svg>
<div class="r" style="left:41px;top:272px;width:9px;height:1px;background-image:linear-gradient(90deg,#9a9a9a 50%,transparent 50%);background-size:2px 1px;"></div>
<svg class="s" style="left:50px;top:272px;" width="9" height="9" viewBox="0 0 9 9"><path d="M0.8 5.5 L3.2 8 L8.5 1" fill="none" stroke="#00a000" stroke-width="1.9"/></svg>
<svg class="s" style="left:59px;top:265px;" width="14" height="14" viewBox="0 0 14 14"><path d="M0.5 3 H5 L6 1 H11 V3 H13.5 V13.5 H0.5 Z" fill="#f5e28a" stroke="#555" stroke-width="0.8"/><path d="M0.5 3 H13.5 V5 H0.5 Z" fill="#d4a017"/><path d="M4 8 V12 M7 7 V12 M10 8 V12" stroke="#333" stroke-width="1.2"/></svg>
<div class="t" style="left:78px;top:267.43px;font-size:11.3px;color:#000;letter-spacing:-0.35px;">Symmetry</div>
<svg class="s" style="left:31px;top:284px;" width="9" height="9" viewBox="0 0 9 9"><rect x="0.5" y="0.5" width="8" height="8" fill="#fff" stroke="#555" stroke-width="1"/><path d="M2 4.5 H7" stroke="#000" stroke-width="1.1"/><path d="M4.5 2 V7" stroke="#000" stroke-width="1.1"/></svg>
<div class="r" style="left:41px;top:288px;width:9px;height:1px;background-image:linear-gradient(90deg,#9a9a9a 50%,transparent 50%);background-size:2px 1px;"></div>
<svg class="s" style="left:50px;top:288px;" width="9" height="9" viewBox="0 0 9 9"><path d="M0.8 5.5 L3.2 8 L8.5 1" fill="none" stroke="#00a000" stroke-width="1.9"/></svg>
<svg class="s" style="left:59px;top:281px;" width="14" height="14" viewBox="0 0 14 14"><path d="M0.5 3 H5 L6 1 H11 V3 H13.5 V13.5 H0.5 Z" fill="#f5e28a" stroke="#555" stroke-width="0.8"/><path d="M0.5 3 H13.5 V5 H0.5 Z" fill="#d4a017"/><ellipse cx="7" cy="9" rx="3.5" ry="2.5" fill="#e8c860" stroke="#777" stroke-width="0.8"/></svg>
<div class="t" style="left:78px;top:283.43px;font-size:11.3px;color:#000;letter-spacing:-0.35px;">Connections</div>
<svg class="s" style="left:31px;top:300px;" width="9" height="9" viewBox="0 0 9 9"><rect x="0.5" y="0.5" width="8" height="8" fill="#fff" stroke="#555" stroke-width="1"/><path d="M2 4.5 H7" stroke="#000" stroke-width="1.1"/></svg>
<div class="r" style="left:41px;top:304px;width:9px;height:1px;background-image:linear-gradient(90deg,#9a9a9a 50%,transparent 50%);background-size:2px 1px;"></div>
<svg class="s" style="left:50px;top:304px;" width="9" height="9" viewBox="0 0 9 9"><path d="M0.8 5.5 L3.2 8 L8.5 1" fill="none" stroke="#00a000" stroke-width="1.9"/></svg>
<svg class="s" style="left:59px;top:297px;" width="14" height="14" viewBox="0 0 14 14"><path d="M1 4 L5 1 L13 3 L13 9 L9 12 L1 10 Z" fill="#c8dcf4" stroke="#667" stroke-width="0.9"/><path d="M1 4 L9 6 L13 3 M9 6 V12" fill="none" stroke="#667" stroke-width="0.9"/></svg>
<div class="t" style="left:78px;top:299.43px;font-size:11.3px;color:#000;letter-spacing:-0.35px;">Mesh</div>
<div class="r" style="left:63px;top:320px;width:14px;height:1px;background-image:linear-gradient(90deg,#9a9a9a 50%,transparent 50%);background-size:2px 1px;"></div>
<svg class="s" style="left:77px;top:320px;" width="9" height="9" viewBox="0 0 9 9"><path d="M0.8 5.5 L3.2 8 L8.5 1" fill="none" stroke="#00a000" stroke-width="1.9"/></svg>
<svg class="s" style="left:86px;top:313px;" width="14" height="14" viewBox="0 0 14 14"><path d="M0.5 1 V13 H4" fill="none" stroke="#d4a017" stroke-width="1"/><path d="M3 4 L8 1 L13 3 L13 9 L8 12 L3 10 Z" fill="#7fb0e8" stroke="#456" stroke-width="0.9"/><path d="M3 4 L8 6 L13 3 M8 6 V12" fill="none" stroke="#456" stroke-width="0.9"/></svg>
<div class="t" style="left:105px;top:315.43px;font-size:11.3px;color:#000;letter-spacing:-0.35px;">Body Sizing</div>
<div class="r" style="left:63px;top:336px;width:14px;height:1px;background-image:linear-gradient(90deg,#9a9a9a 50%,transparent 50%);background-size:2px 1px;"></div>
<svg class="s" style="left:77px;top:336px;" width="9" height="9" viewBox="0 0 9 9"><path d="M0.8 5.5 L3.2 8 L8.5 1" fill="none" stroke="#00a000" stroke-width="1.9"/></svg>
<svg class="s" style="left:86px;top:329px;" width="14" height="14" viewBox="0 0 14 14"><path d="M1 11 L5 5 L9 8 L13 4 L14 11 Z" fill="#8ec0f0"/><path d="M3 10 L6 7 L9 10 Z" fill="#cde4fa"/></svg>
<div class="t" style="left:105px;top:331.43px;font-size:11.3px;color:#000;letter-spacing:-0.35px;">Patch Conforming Method</div>
<svg class="s" style="left:31px;top:348px;" width="9" height="9" viewBox="0 0 9 9"><rect x="0.5" y="0.5" width="8" height="8" fill="#fff" stroke="#555" stroke-width="1"/><path d="M2 4.5 H7" stroke="#000" stroke-width="1.1"/><path d="M4.5 2 V7" stroke="#000" stroke-width="1.1"/></svg>
<div class="r" style="left:41px;top:352px;width:9px;height:1px;background-image:linear-gradient(90deg,#9a9a9a 50%,transparent 50%);background-size:2px 1px;"></div>
<svg class="s" style="left:59px;top:345px;" width="14" height="14" viewBox="0 0 14 14"><path d="M4 3 L9 1 L13 4 L13 8 L7 10 L4 7 Z" fill="#fff" stroke="#333" stroke-width="0.9"/><path d="M7 4 L13 4" stroke="#2a2" stroke-width="1.4"/><path d="M1 12 H14 M1 14 H14" stroke="#333" stroke-width="0.9"/><path d="M3 5 Q0 8 3 10" fill="none" stroke="#e22" stroke-width="1"/></svg>
<div class="t" style="left:78px;top:347.43px;font-size:11.3px;color:#000;letter-spacing:-0.35px;">Named Selections</div>
<svg class="s" style="left:31px;top:364px;" width="9" height="9" viewBox="0 0 9 9"><rect x="0.5" y="0.5" width="8" height="8" fill="#fff" stroke="#555" stroke-width="1"/><path d="M2 4.5 H7" stroke="#000" stroke-width="1.1"/></svg>
<div class="r" style="left:41px;top:368px;width:9px;height:1px;background-image:linear-gradient(90deg,#9a9a9a 50%,transparent 50%);background-size:2px 1px;"></div>
<svg class="s" style="left:50px;top:368px;" width="9" height="9" viewBox="0 0 9 9"><path d="M0.8 5.5 L3.2 8 L8.5 1" fill="none" stroke="#00a000" stroke-width="1.9"/></svg>
<svg class="s" style="left:59px;top:361px;" width="14" height="14" viewBox="0 0 14 14"><rect x="0" y="0" width="14" height="14" fill="#6fcc2a"/><path d="M3 6 H11 M4 6 L3 9 M7 6 L6 9 M10 6 L9 9" stroke="#fff" stroke-width="1"/></svg>
<div class="t" style="left:79px;top:363.43px;font-size:11.3px;color:#000;font-weight:bold;letter-spacing:0.4px;">Static Structural (A5)</div>
<div class="r" style="left:63px;top:384px;width:14px;height:1px;background-image:linear-gradient(90deg,#9a9a9a 50%,transparent 50%);background-size:2px 1px;"></div>
<svg class="s" style="left:77px;top:384px;" width="9" height="9" viewBox="0 0 9 9"><path d="M0.8 5.5 L3.2 8 L8.5 1" fill="none" stroke="#00a000" stroke-width="1.9"/></svg>
<svg class="s" style="left:86px;top:377px;" width="14" height="14" viewBox="0 0 14 14"><path d="M1 1 H13 M1 13 H13 M3 1 V13 M7 1 V13 M11 1 V13" stroke="#2540b0" stroke-width="1"/><path d="M1 9 Q7 0 13 9" fill="none" stroke="#2a2" stroke-width="1.4"/><path d="M1 13.5 H13" stroke="#e22" stroke-width="1.5"/></svg>
<div class="t" style="left:105px;top:379.43px;font-size:11.3px;color:#000;letter-spacing:-0.35px;">Analysis Settings</div>
<div class="r" style="left:63px;top:400px;width:14px;height:1px;background-image:linear-gradient(90deg,#9a9a9a 50%,transparent 50%);background-size:2px 1px;"></div>
<svg class="s" style="left:77px;top:400px;" width="9" height="9" viewBox="0 0 9 9"><path d="M0.8 5.5 L3.2 8 L8.5 1" fill="none" stroke="#00a000" stroke-width="1.9"/></svg>
<svg class="s" style="left:86px;top:393px;" width="14" height="14" viewBox="0 0 14 14"><path d="M1 3 L5 1 L11 2 L11 7 L7 9 L1 7 Z" fill="#2d8ce8" stroke="#333" stroke-width="0.9"/><path d="M1 3 L7 4.5 L11 2 M7 4.5 V9" fill="none" stroke="#fff" stroke-width="0.8"/><path d="M7 13 L10 10 M10 13 L13 10" stroke="#d4a017" stroke-width="1.2"/></svg>
<div class="t" style="left:105px;top:395.43px;font-size:11.3px;color:#000;letter-spacing:-0.35px;">Fixed Support</div>
<div class="r" style="left:63px;top:416px;width:14px;height:1px;background-image:linear-gradient(90deg,#9a9a9a 50%,transparent 50%);background-size:2px 1px;"></div>
<svg class="s" style="left:77px;top:416px;" width="9" height="9" viewBox="0 0 9 9"><path d="M0.8 5.5 L3.2 8 L8.5 1" fill="none" stroke="#00a000" stroke-width="1.9"/></svg>
<svg class="s" style="left:86px;top:409px;" width="14" height="14" viewBox="0 0 14 14"><path d="M1 3 L5 1 L11 2 L11 7 L7 9 L1 7 Z" fill="#fff" stroke="#333" stroke-width="0.9"/><path d="M7 4.5 L11 2 L11 7 L7 9 Z" fill="#3c3"/><path d="M9 9 L13 13" stroke="#d4a017" stroke-width="1.2"/></svg>
<div class="t" style="left:105px;top:411.43px;font-size:11.3px;color:#000;letter-spacing:-0.35px;">Pressure</div>
<div class="r" style="left:63px;top:432px;width:14px;height:1px;background-image:linear-gradient(90deg,#9a9a9a 50%,transparent 50%);background-size:2px 1px;"></div>
<svg class="s" style="left:77px;top:432px;" width="9" height="9" viewBox="0 0 9 9"><path d="M0.8 5.5 L3.2 8 L8.5 1" fill="none" stroke="#00a000" stroke-width="1.9"/></svg>
<svg class="s" style="left:86px;top:425px;" width="14" height="14" viewBox="0 0 14 14"><rect x="0" y="0" width="6" height="6" fill="#2c2"/><path d="M6 3 L9 6" stroke="#d4a017" stroke-width="1.2"/><rect x="7.5" y="7.5" width="6" height="6" fill="none" stroke="#333" stroke-width="1"/><path d="M10.5 7.5 V13.5 M7.5 10.5 H13.5" stroke="#333" stroke-width="0.9"/></svg>
<div class="t" style="left:105px;top:427.43px;font-size:11.3px;color:#000;letter-spacing:-0.35px;">Nonlinear Adaptive Region</div>
<svg class="s" style="left:58px;top:444px;" width="9" height="9" viewBox="0 0 9 9"><rect x="0.5" y="0.5" width="8" height="8" fill="#fff" stroke="#555" stroke-width="1"/><path d="M2 4.5 H7" stroke="#000" stroke-width="1.1"/></svg>
<div class="r" style="left:68px;top:448px;width:9px;height:1px;background-image:linear-gradient(90deg,#9a9a9a 50%,transparent 50%);background-size:2px 1px;"></div>
<svg class="s" style="left:77px;top:448px;" width="9" height="9" viewBox="0 0 9 9"><path d="M0.8 5.5 L3.2 8 L8.5 1" fill="none" stroke="#00a000" stroke-width="1.9"/></svg>
<svg class="s" style="left:86px;top:441px;" width="14" height="14" viewBox="0 0 14 14"><path d="M0.5 3 H5 L6 1 H11 V3 H13.5 V13.5 H0.5 Z" fill="#f5e28a" stroke="#555" stroke-width="0.8"/><path d="M0.5 3 H13.5 V5 H0.5 Z" fill="#d4a017"/><rect x="3" y="6.5" width="8" height="5" fill="#e06040"/><rect x="3" y="6.5" width="4" height="5" fill="#40b0e0"/></svg>
<div class="t" style="left:106px;top:443.43px;font-size:11.3px;color:#000;font-weight:bold;letter-spacing:0.4px;">Solution (A6)</div>
<div class="r" style="left:90px;top:464px;width:14px;height:1px;background-image:linear-gradient(90deg,#9a9a9a 50%,transparent 50%);background-size:2px 1px;"></div>
<svg class="s" style="left:104px;top:464px;" width="9" height="9" viewBox="0 0 9 9"><path d="M0.8 5.5 L3.2 8 L8.5 1" fill="none" stroke="#00a000" stroke-width="1.9"/></svg>
<svg class="s" style="left:113px;top:457px;" width="14" height="14" viewBox="0 0 14 14"><path d="M0.5 3 H5 L6 1 H11 V3 H13.5 V13.5 H0.5 Z" fill="#f5e28a" stroke="#555" stroke-width="0.8"/><path d="M0.5 3 H13.5 V5 H0.5 Z" fill="#d4a017"/><text x="5.5" y="12.5" font-size="7" fill="#3070d0" font-family="Liberation Serif">i</text></svg>
<div class="t" style="left:132px;top:459.43px;font-size:11.3px;color:#000;letter-spacing:-0.35px;">Solution Information</div>
<div class="r" style="left:90px;top:480px;width:14px;height:1px;background-image:linear-gradient(90deg,#9a9a9a 50%,transparent 50%);background-size:2px 1px;"></div>
<svg class="s" style="left:104px;top:480px;" width="9" height="9" viewBox="0 0 9 9"><path d="M0.8 5.5 L3.2 8 L8.5 1" fill="none" stroke="#00a000" stroke-width="1.9"/></svg>
<svg class="s" style="left:113px;top:473px;" width="14" height="14" viewBox="0 0 14 14"><defs><linearGradient id="rg1" x1="0" x2="1"><stop offset="0" stop-color="#2040ff"/><stop offset="1" stop-color="#00f0e0"/></linearGradient><linearGradient id="rg2" x1="0" x2="1"><stop offset="0" stop-color="#30f000"/><stop offset="1" stop-color="#e8f000"/></linearGradient><linearGradient id="rg3" x1="0" x2="1"><stop offset="0" stop-color="#ffe000"/><stop offset="1" stop-color="#ff1000"/></linearGradient></defs><path d="M0.5 3 L4.5 5 L4.5 10.5 L0.5 8.7 Z" fill="url(#rg1)"/><path d="M4.5 5 L8.5 6.5 L8.5 12 L4.5 10.5 Z" fill="url(#rg2)"/><path d="M8.5 6.5 L13.5 4 L13.5 9.5 L8.5 12 Z" fill="url(#rg3)"/><path d="M0.5 3 L5.5 0.7 L9.5 2.3 L4.5 5 Z" fill="#10d8e8"/><path d="M4.5 5 L9.5 2.3 L13.5 4 L8.5 6.5 Z" fill="#b8f000"/><path d="M0.5 3 L5.5 0.7 L13.5 4 L13.5 9.5 L8.5 12 L0.5 8.7 Z M0.5 3 L8.5 6.5 L13.5 4 M8.5 6.5 V12 M4.5 5 V10.5 M4.5 5 L9.5 2.3" fill="none" stroke="#3a3a3a" stroke-width="1" stroke-linejoin="round"/></svg>
<div class="t" style="left:132px;top:475.43px;font-size:11.3px;color:#000;letter-spacing:-0.35px;">Maximum Principal Stress</div>
<div class="r" style="left:90px;top:496px;width:14px;height:1px;background-image:linear-gradient(90deg,#9a9a9a 50%,transparent 50%);background-size:2px 1px;"></div>
<svg class="s" style="left:104px;top:496px;" width="9" height="9" viewBox="0 0 9 9"><path d="M0.8 5.5 L3.2 8 L8.5 1" fill="none" stroke="#00a000" stroke-width="1.9"/></svg>
<svg class="s" style="left:113px;top:489px;" width="14" height="14" viewBox="0 0 14 14"><defs><linearGradient id="rg1" x1="0" x2="1"><stop offset="0" stop-color="#2040ff"/><stop offset="1" stop-color="#00f0e0"/></linearGradient><linearGradient id="rg2" x1="0" x2="1"><stop offset="0" stop-color="#30f000"/><stop offset="1" stop-color="#e8f000"/></linearGradient><linearGradient id="rg3" x1="0" x2="1"><stop offset="0" stop-color="#ffe000"/><stop offset="1" stop-color="#ff1000"/></linearGradient></defs><path d="M0.5 3 L4.5 5 L4.5 10.5 L0.5 8.7 Z" fill="url(#rg1)"/><path d="M4.5 5 L8.5 6.5 L8.5 12 L4.5 10.5 Z" fill="url(#rg2)"/><path d="M8.5 6.5 L13.5 4 L13.5 9.5 L8.5 12 Z" fill="url(#rg3)"/><path d="M0.5 3 L5.5 0.7 L9.5 2.3 L4.5 5 Z" fill="#10d8e8"/><path d="M4.5 5 L9.5 2.3 L13.5 4 L8.5 6.5 Z" fill="#b8f000"/><path d="M0.5 3 L5.5 0.7 L13.5 4 L13.5 9.5 L8.5 12 L0.5 8.7 Z M0.5 3 L8.5 6.5 L13.5 4 M8.5 6.5 V12 M4.5 5 V10.5 M4.5 5 L9.5 2.3" fill="none" stroke="#3a3a3a" stroke-width="1" stroke-linejoin="round"/></svg>
<div class="t" style="left:132px;top:491.43px;font-size:11.3px;color:#000;letter-spacing:-0.35px;">Total Deformation</div>
<div class="r" style="left:90px;top:512px;width:14px;height:1px;background-image:linear-gradient(90deg,#9a9a9a 50%,transparent 50%);background-size:2px 1px;"></div>
<svg class="s" style="left:104px;top:512px;" width="9" height="9" viewBox="0 0 9 9"><path d="M0.8 5.5 L3.2 8 L8.5 1" fill="none" stroke="#00a000" stroke-width="1.9"/></svg>
<svg class="s" style="left:113px;top:505px;" width="14" height="14" viewBox="0 0 14 14"><defs><linearGradient id="rg1" x1="0" x2="1"><stop offset="0" stop-color="#2040ff"/><stop offset="1" stop-color="#00f0e0"/></linearGradient><linearGradient id="rg2" x1="0" x2="1"><stop offset="0" stop-color="#30f000"/><stop offset="1" stop-color="#e8f000"/></linearGradient><linearGradient id="rg3" x1="0" x2="1"><stop offset="0" stop-color="#ffe000"/><stop offset="1" stop-color="#ff1000"/></linearGradient></defs><path d="M0.5 3 L4.5 5 L4.5 10.5 L0.5 8.7 Z" fill="url(#rg1)"/><path d="M4.5 5 L8.5 6.5 L8.5 12 L4.5 10.5 Z" fill="url(#rg2)"/><path d="M8.5 6.5 L13.5 4 L13.5 9.5 L8.5 12 Z" fill="url(#rg3)"/><path d="M0.5 3 L5.5 0.7 L9.5 2.3 L4.5 5 Z" fill="#10d8e8"/><path d="M4.5 5 L9.5 2.3 L13.5 4 L8.5 6.5 Z" fill="#b8f000"/><path d="M0.5 3 L5.5 0.7 L13.5 4 L13.5 9.5 L8.5 12 L0.5 8.7 Z M0.5 3 L8.5 6.5 L13.5 4 M8.5 6.5 V12 M4.5 5 V10.5 M4.5 5 L9.5 2.3" fill="none" stroke="#3a3a3a" stroke-width="1" stroke-linejoin="round"/></svg>
<div class="t" style="left:132px;top:507.43px;font-size:11.3px;color:#000;letter-spacing:-0.35px;">Normal Stress</div>
<div class="r" style="left:90px;top:528px;width:14px;height:1px;background-image:linear-gradient(90deg,#9a9a9a 50%,transparent 50%);background-size:2px 1px;"></div>
<svg class="s" style="left:104px;top:528px;" width="9" height="9" viewBox="0 0 9 9"><path d="M0.8 5.5 L3.2 8 L8.5 1" fill="none" stroke="#00a000" stroke-width="1.9"/></svg>
<svg class="s" style="left:113px;top:521px;" width="14" height="14" viewBox="0 0 14 14"><defs><linearGradient id="rg1" x1="0" x2="1"><stop offset="0" stop-color="#2040ff"/><stop offset="1" stop-color="#00f0e0"/></linearGradient><linearGradient id="rg2" x1="0" x2="1"><stop offset="0" stop-color="#30f000"/><stop offset="1" stop-color="#e8f000"/></linearGradient><linearGradient id="rg3" x1="0" x2="1"><stop offset="0" stop-color="#ffe000"/><stop offset="1" stop-color="#ff1000"/></linearGradient></defs><path d="M0.5 3 L4.5 5 L4.5 10.5 L0.5 8.7 Z" fill="url(#rg1)"/><path d="M4.5 5 L8.5 6.5 L8.5 12 L4.5 10.5 Z" fill="url(#rg2)"/><path d="M8.5 6.5 L13.5 4 L13.5 9.5 L8.5 12 Z" fill="url(#rg3)"/><path d="M0.5 3 L5.5 0.7 L9.5 2.3 L4.5 5 Z" fill="#10d8e8"/><path d="M4.5 5 L9.5 2.3 L13.5 4 L8.5 6.5 Z" fill="#b8f000"/><path d="M0.5 3 L5.5 0.7 L13.5 4 L13.5 9.5 L8.5 12 L0.5 8.7 Z M0.5 3 L8.5 6.5 L13.5 4 M8.5 6.5 V12 M4.5 5 V10.5 M4.5 5 L9.5 2.3" fill="none" stroke="#3a3a3a" stroke-width="1" stroke-linejoin="round"/></svg>
<div class="t" style="left:132px;top:523.43px;font-size:11.3px;color:#000;letter-spacing:-0.35px;">Maximum Principal Stress 2</div>
<div class="r" style="left:0px;top:545px;width:497px;height:5px;background:#eeeef2;"></div>
<div class="r" style="left:0px;top:550px;width:493px;height:1px;background:#d8d8e4;"></div>
<div class="t" style="left:2px;top:556.43px;font-size:11.3px;color:#333;letter-spacing:0.25px;">Details of "Maximum Principal Stress"</div>
<svg class="s" style="left:205px;top:556px" width="216" height="8"><rect width="216" height="8" fill="url(#dotpat)"/></svg>
<svg class="s" style="left:427px;top:557px;" width="9" height="5" viewBox="0 0 9 5"><path d="M0 0 H9 L4.5 5 Z" fill="#1e1e1e"/></svg>
<svg class="s" style="left:443px;top:554px;" width="8" height="12" viewBox="0 0 8 12"><path d="M1.5 0.5 H6.5 M2.5 0.5 V6 M5.5 0.5 V6 M0.5 6.5 H7.5 M4 6.5 V12" fill="none" stroke="#1e1e1e" stroke-width="1.3"/></svg>
<svg class="s" style="left:458px;top:554px;" width="11" height="11" viewBox="0 0 11 11"><rect x="0.75" y="0.75" width="9.5" height="9.5" fill="none" stroke="#1e1e1e" stroke-width="1.5"/><path d="M0.75 1.5 H10.25" stroke="#1e1e1e" stroke-width="2"/></svg>
<svg class="s" style="left:475px;top:554px;" width="10" height="10" viewBox="0 0 10 10"><path d="M1 1 L9 9 M9 1 L1 9" stroke="#1e1e1e" stroke-width="1.5"/></svg>
<div class="r" style="left:492px;top:550px;width:1px;height:20px;background:#d0d0dc;"></div>
<div class="r" style="left:0px;top:570px;width:493px;height:450px;background:#ffffff;"></div>
<div class="r" style="left:9px;top:570px;width:1px;height:450px;background:#bdbdbd;"></div>
<div class="r" style="left:475px;top:570px;width:1px;height:450px;background:#bdbdbd;"></div>
<div class="r" style="left:9px;top:570px;width:467px;height:1px;background:#bdbdbd;"></div>
<svg class="s" style="left:0px;top:575px;" width="8" height="9" viewBox="0 0 8 9"><path d="M0 0.5 H6.5 V8.5 H0" fill="none" stroke="#a0a0a0" stroke-width="1"/><path d="M0 4.5 H5" stroke="#000" stroke-width="1"/></svg>
<div class="t" style="left:13px;top:574.43px;font-size:11.3px;color:#000;font-weight:bold;">Scope</div>
<div class="r" style="left:9px;top:588px;width:467px;height:1px;background:#bdbdbd;"></div>
<div class="r" style="left:132px;top:589px;width:343px;height:17px;background:#e8e7e4;"></div>
<div class="r" style="left:131px;top:588px;width:1px;height:18px;background:#bdbdbd;"></div>
<div class="t" style="left:13px;top:592.43px;font-size:11.3px;color:#000;">Scoping Method</div>
<div class="t" style="left:135px;top:592.43px;font-size:11.3px;color:#000;">Geometry Selection</div>
<div class="r" style="left:9px;top:606px;width:467px;height:1px;background:#bdbdbd;"></div>
<div class="r" style="left:132px;top:607px;width:343px;height:17px;background:#e8e7e4;"></div>
<div class="r" style="left:131px;top:606px;width:1px;height:18px;background:#bdbdbd;"></div>
<div class="t" style="left:13px;top:610.43px;font-size:11.3px;color:#000;">Geometry</div>
<div class="t" style="left:135px;top:610.43px;font-size:11.3px;color:#000;">All Bodies</div>
<div class="r" style="left:9px;top:624px;width:467px;height:1px;background:#bdbdbd;"></div>
<svg class="s" style="left:0px;top:629px;" width="8" height="9" viewBox="0 0 8 9"><path d="M0 0.5 H6.5 V8.5 H0" fill="none" stroke="#a0a0a0" stroke-width="1"/><path d="M0 4.5 H5" stroke="#000" stroke-width="1"/></svg>
<div class="t" style="left:13px;top:628.43px;font-size:11.3px;color:#000;font-weight:bold;">Definition</div>
<div class="r" style="left:9px;top:642px;width:467px;height:1px;background:#bdbdbd;"></div>
<div class="r" style="left:131px;top:642px;width:1px;height:18px;background:#bdbdbd;"></div>
<div class="t" style="left:13px;top:646.43px;font-size:11.3px;color:#000;">Type</div>
<div class="t" style="left:135px;top:646.43px;font-size:11.3px;color:#000;">Maximum Principal Stress</div>
<div class="r" style="left:9px;top:660px;width:467px;height:1px;background:#bdbdbd;"></div>
<div class="r" style="left:131px;top:660px;width:1px;height:18px;background:#bdbdbd;"></div>
<div class="t" style="left:13px;top:664.43px;font-size:11.3px;color:#000;">By</div>
<div class="t" style="left:135px;top:664.43px;font-size:11.3px;color:#000;">Time</div>
<div class="r" style="left:9px;top:678px;width:467px;height:1px;background:#bdbdbd;"></div>
<div class="r" style="left:131px;top:678px;width:1px;height:18px;background:#bdbdbd;"></div>
<div class="r" style="left:13px;top:681px;width:12px;height:12px;background:#fff;border:1px solid #c8c8c8;box-sizing:border-box;"></div>
<div class="t" style="left:29px;top:682.43px;font-size:11.3px;color:#000;">Display Time</div>
<div class="t" style="left:135px;top:682.43px;font-size:11.3px;color:#000;">1, s</div>
<div class="r" style="left:9px;top:696px;width:467px;height:1px;background:#bdbdbd;"></div>
<div class="r" style="left:131px;top:696px;width:1px;height:18px;background:#bdbdbd;"></div>
<div class="t" style="left:13px;top:700.43px;font-size:11.3px;color:#000;">Calculate Time History</div>
<div class="t" style="left:135px;top:700.43px;font-size:11.3px;color:#000;">Yes</div>
<div class="r" style="left:9px;top:714px;width:467px;height:1px;background:#bdbdbd;"></div>
<div class="r" style="left:132px;top:715px;width:343px;height:17px;background:#e8e7e4;"></div>
<div class="r" style="left:131px;top:714px;width:1px;height:18px;background:#bdbdbd;"></div>
<div class="t" style="left:13px;top:718.43px;font-size:11.3px;color:#000;">Identifier</div>
<div class="t" style="left:135px;top:718.43px;font-size:11.3px;color:#000;"></div>
<div class="r" style="left:9px;top:732px;width:467px;height:1px;background:#bdbdbd;"></div>
<div class="r" style="left:131px;top:732px;width:1px;height:18px;background:#bdbdbd;"></div>
<div class="t" style="left:13px;top:736.43px;font-size:11.3px;color:#000;">Suppressed</div>
<div class="t" style="left:135px;top:736.43px;font-size:11.3px;color:#000;">No</div>
<div class="r" style="left:9px;top:750px;width:467px;height:1px;background:#bdbdbd;"></div>
<svg class="s" style="left:0px;top:755px;" width="8" height="9" viewBox="0 0 8 9"><path d="M0 0.5 H6.5 V8.5 H0" fill="none" stroke="#a0a0a0" stroke-width="1"/><path d="M0 4.5 H5" stroke="#000" stroke-width="1"/></svg>
<div class="t" style="left:13px;top:754.43px;font-size:11.3px;color:#000;font-weight:bold;">Integration Point Results</div>
<div class="r" style="left:9px;top:768px;width:467px;height:1px;background:#bdbdbd;"></div>
<div class="r" style="left:131px;top:768px;width:1px;height:18px;background:#bdbdbd;"></div>
<div class="t" style="left:13px;top:772.43px;font-size:11.3px;color:#000;">Display Option</div>
<div class="t" style="left:135px;top:772.43px;font-size:11.3px;color:#000;">Averaged</div>
<div class="r" style="left:9px;top:786px;width:467px;height:1px;background:#bdbdbd;"></div>
<div class="r" style="left:131px;top:786px;width:1px;height:18px;background:#bdbdbd;"></div>
<div class="t" style="left:13px;top:790.43px;font-size:11.3px;color:#000;">Average Across Bodies</div>
<div class="t" style="left:135px;top:790.43px;font-size:11.3px;color:#000;">No</div>
<div class="r" style="left:9px;top:804px;width:467px;height:1px;background:#bdbdbd;"></div>
<svg class="s" style="left:0px;top:809px;" width="8" height="9" viewBox="0 0 8 9"><path d="M0 0.5 H6.5 V8.5 H0" fill="none" stroke="#a0a0a0" stroke-width="1"/><path d="M0 4.5 H5" stroke="#000" stroke-width="1"/></svg>
<div class="t" style="left:13px;top:808.43px;font-size:11.3px;color:#000;font-weight:bold;">Results</div>
<div class="r" style="left:9px;top:822px;width:467px;height:1px;background:#bdbdbd;"></div>
<div class="r" style="left:132px;top:823px;width:343px;height:17px;background:#e8e7e4;"></div>
<div class="r" style="left:131px;top:822px;width:1px;height:18px;background:#bdbdbd;"></div>
<div class="r" style="left:13px;top:825px;width:12px;height:12px;background:#fff;border:1px solid #c8c8c8;box-sizing:border-box;"></div>
<div class="t" style="left:29px;top:826.43px;font-size:11.3px;color:#000;">Minimum</div>
<div class="t" style="left:135px;top:826.43px;font-size:11.3px;color:#000;">-1,3613e+008 Pa</div>
<div class="r" style="left:9px;top:840px;width:467px;height:1px;background:#bdbdbd;"></div>
<div class="r" style="left:132px;top:841px;width:343px;height:17px;background:#e8e7e4;"></div>
<div class="r" style="left:131px;top:840px;width:1px;height:18px;background:#bdbdbd;"></div>
<div class="r" style="left:13px;top:843px;width:12px;height:12px;background:#fff;border:1px solid #c8c8c8;box-sizing:border-box;"></div>
<div class="t" style="left:29px;top:844.43px;font-size:11.3px;color:#000;">Maximum</div>
<div class="t" style="left:135px;top:844.43px;font-size:11.3px;color:#000;">3,3721e+008 Pa</div>
<div class="r" style="left:9px;top:858px;width:467px;height:1px;background:#bdbdbd;"></div>
<div class="r" style="left:132px;top:859px;width:343px;height:17px;background:#e8e7e4;"></div>
<div class="r" style="left:131px;top:858px;width:1px;height:18px;background:#bdbdbd;"></div>
<div class="r" style="left:13px;top:861px;width:12px;height:12px;background:#fff;border:1px solid #c8c8c8;box-sizing:border-box;"></div>
<div class="t" style="left:29px;top:862.43px;font-size:11.3px;color:#000;">Average</div>
<div class="t" style="left:135px;top:862.43px;font-size:11.3px;color:#000;">1,4531e+007 Pa</div>
<div class="r" style="left:9px;top:876px;width:467px;height:1px;background:#bdbdbd;"></div>
<div class="r" style="left:132px;top:877px;width:343px;height:17px;background:#e8e7e4;"></div>
<div class="r" style="left:131px;top:876px;width:1px;height:18px;background:#bdbdbd;"></div>
<div class="t" style="left:13px;top:880.43px;font-size:11.3px;color:#000;">Minimum Occurs On</div>
<div class="t" style="left:135px;top:880.43px;font-size:11.3px;color:#000;">Thin glass</div>
<div class="r" style="left:9px;top:894px;width:467px;height:1px;background:#bdbdbd;"></div>
<div class="r" style="left:132px;top:895px;width:343px;height:17px;background:#e8e7e4;"></div>
<div class="r" style="left:131px;top:894px;width:1px;height:18px;background:#bdbdbd;"></div>
<div class="t" style="left:13px;top:898.43px;font-size:11.3px;color:#000;">Maximum Occurs On</div>
<div class="t" style="left:135px;top:898.43px;font-size:11.3px;color:#000;">Thin glass</div>
<div class="r" style="left:9px;top:912px;width:467px;height:1px;background:#bdbdbd;"></div>
<svg class="s" style="left:0px;top:917px;" width="8" height="9" viewBox="0 0 8 9"><path d="M0 0.5 H6.5 V8.5 H0" fill="none" stroke="#a0a0a0" stroke-width="1"/><path d="M0 4.5 H5" stroke="#000" stroke-width="1"/></svg>
<div class="t" style="left:13px;top:916.43px;font-size:11.3px;color:#000;font-weight:bold;">Minimum Value Over Time</div>
<div class="r" style="left:9px;top:930px;width:467px;height:1px;background:#bdbdbd;"></div>
<div class="r" style="left:132px;top:931px;width:343px;height:17px;background:#e8e7e4;"></div>
<div class="r" style="left:131px;top:930px;width:1px;height:18px;background:#bdbdbd;"></div>
<div class="r" style="left:13px;top:933px;width:12px;height:12px;background:#fff;border:1px solid #c8c8c8;box-sizing:border-box;"></div>
<div class="t" style="left:29px;top:934.43px;font-size:11.3px;color:#000;">Minimum</div>
<div class="t" style="left:135px;top:934.43px;font-size:11.3px;color:#000;">-1,4017e+008 Pa</div>
<div class="r" style="left:9px;top:948px;width:467px;height:1px;background:#bdbdbd;"></div>
<div class="r" style="left:132px;top:949px;width:343px;height:17px;background:#e8e7e4;"></div>
<div class="r" style="left:131px;top:948px;width:1px;height:18px;background:#bdbdbd;"></div>
<div class="r" style="left:13px;top:951px;width:12px;height:12px;background:#fff;border:1px solid #c8c8c8;box-sizing:border-box;"></div>
<div class="t" style="left:29px;top:952.43px;font-size:11.3px;color:#000;">Maximum</div>
<div class="t" style="left:135px;top:952.43px;font-size:11.3px;color:#000;">-9,0035e+007 Pa</div>
<div class="r" style="left:9px;top:966px;width:467px;height:1px;background:#bdbdbd;"></div>
<svg class="s" style="left:0px;top:971px;" width="8" height="9" viewBox="0 0 8 9"><path d="M0 0.5 H6.5 V8.5 H0" fill="none" stroke="#a0a0a0" stroke-width="1"/><path d="M0 4.5 H5" stroke="#000" stroke-width="1"/></svg>
<div class="t" style="left:13px;top:970.43px;font-size:11.3px;color:#000;font-weight:bold;">Maximum Value Over Time</div>
<div class="r" style="left:9px;top:984px;width:467px;height:1px;background:#bdbdbd;"></div>
<div class="r" style="left:132px;top:985px;width:343px;height:17px;background:#e8e7e4;"></div>
<div class="r" style="left:131px;top:984px;width:1px;height:18px;background:#bdbdbd;"></div>
<div class="r" style="left:13px;top:987px;width:12px;height:12px;background:#fff;border:1px solid #c8c8c8;box-sizing:border-box;"></div>
<div class="t" style="left:29px;top:988.43px;font-size:11.3px;color:#000;">Minimum</div>
<div class="t" style="left:135px;top:988.43px;font-size:11.3px;color:#000;">2,9635e+008 Pa</div>
<div class="r" style="left:9px;top:1002px;width:467px;height:1px;background:#bdbdbd;"></div>
<div class="r" style="left:132px;top:1003px;width:343px;height:17px;background:#e8e7e4;"></div>
<div class="r" style="left:131px;top:1002px;width:1px;height:18px;background:#bdbdbd;"></div>
<div class="r" style="left:13px;top:1005px;width:12px;height:12px;background:#fff;border:1px solid #c8c8c8;box-sizing:border-box;"></div>
<div class="t" style="left:29px;top:1006.43px;font-size:11.3px;color:#000;">Maximum</div>
<div class="t" style="left:135px;top:1006.43px;font-size:11.3px;color:#000;">3,3721e+008 Pa</div>
<div class="r" style="left:476px;top:570px;width:17px;height:450px;background:#f0f0f0;"></div>
<div class="r" style="left:477px;top:588px;width:15px;height:398px;background:#c2c2c2;"></div>
<svg class="s" style="left:480px;top:575px;" width="9" height="6" viewBox="0 0 9 6"><path d="M0.8 5 L4.5 1.2 L8.2 5" fill="none" stroke="#555" stroke-width="1.4"/></svg>
<svg class="s" style="left:480px;top:1008px;" width="9" height="6" viewBox="0 0 9 6"><path d="M0.8 1 L4.5 4.8 L8.2 1" fill="none" stroke="#555" stroke-width="1.4"/></svg>
<div class="r" style="left:493px;top:550px;width:4px;height:470px;background:#eeeef2;"></div>
<div class="r" style="left:506px;top:142px;width:5px;height:16px;background-image:radial-gradient(circle,#a8a8b0 0.7px,transparent 0.9px);background-size:3px 3px;"></div>
<svg class="s" style="left:522px;top:142px;" width="15" height="15" viewBox="0 0 15 15"><circle cx="6" cy="6" r="5" fill="none" stroke="#3a3a3a" stroke-width="1.6"/><path d="M9.6 9.6 L13.5 13.5" stroke="#3a3a3a" stroke-width="2"/><path d="M3.5 6 H8.5 M3.5 6 L5.5 4 M3.5 6 L5.5 8" stroke="#d4a017" stroke-width="1.4" fill="none"/></svg>
<svg class="s" style="left:544px;top:142px;" width="15" height="15" viewBox="0 0 15 15"><circle cx="6" cy="6" r="5" fill="none" stroke="#a8a8a8" stroke-width="1.6"/><path d="M9.6 9.6 L13.5 13.5" stroke="#a8a8a8" stroke-width="2"/><path d="M3.5 6 H8.5 M3.5 6 L5.5 4 M3.5 6 L5.5 8" stroke="#b0b0b0" stroke-width="1.4" fill="none"/></svg>
<div class="r" style="left:565px;top:141px;width:1px;height:19px;background:#d2d2da;"></div>
<div class="r" style="left:569px;top:139px;width:22px;height:22px;background:#e4ecf8;border:1px solid #3399ff;box-sizing:border-box;"></div>
<svg class="s" style="left:574px;top:143px;" width="13" height="14" viewBox="0 0 13 14"><path d="M6.5 0.5 L12.5 3.5 V10.5 L6.5 13.5 L0.5 10.5 V3.5 Z" fill="#555" stroke="#333"/><path d="M0.5 3.5 L6.5 6.5 L12.5 3.5 M6.5 6.5 V13.5" fill="none" stroke="#999" stroke-width="0.8"/></svg>
<svg class="s" style="left:595px;top:143px;" width="13" height="13" viewBox="0 0 13 13"><path d="M6.5 1 L12.5 4 V10 L6.5 13 L0.5 10 V4 Z" fill="#9a9a9a"/><path d="M6.5 1 L12.5 4 L6.5 7 L0.5 4 Z" fill="#c8c8c8"/></svg>
<svg class="s" style="left:617px;top:142px;" width="15" height="15" viewBox="0 0 15 15"><path d="M8 1 L14 4 V9 L8 12 L2 9 V4 Z" fill="#fff" stroke="#333" stroke-width="0.9"/><path d="M1 8 L6 10.5 V14.5 L1 12 Z" fill="#d4a017" stroke="#333" stroke-width="0.8"/></svg>
<div class="r" style="left:637px;top:141px;width:1px;height:19px;background:#d2d2da;"></div>
<svg class="s" style="left:645px;top:142px;" width="12" height="15" viewBox="0 0 12 15"><rect x="0.5" y="0.5" width="4" height="4" fill="none" stroke="#888"/><rect x="6.5" y="8.5" width="5" height="5" fill="none" stroke="#555"/><path d="M6.5 11 H11.5 M9 8.5 V13.5" stroke="#555"/></svg>
<div class="r" style="left:665px;top:141px;width:1px;height:19px;background:#d2d2da;"></div>
<svg class="s" style="left:673px;top:143px;" width="15" height="14" viewBox="0 0 15 14"><path d="M12.5 5 A6 6 0 1 0 12.5 9" fill="none" stroke="#3a3a3a" stroke-width="1.6"/><path d="M10 2 L13 5 L14 1.5 Z" fill="#d4a017"/></svg>
<svg class="s" style="left:694px;top:148px;" width="6" height="4" viewBox="0 0 6 4"><path d="M0 0 H6 L3 4 Z" fill="#666"/></svg>
<div class="r" style="left:702px;top:139px;width:22px;height:22px;background:#e4ecf8;border:1px solid #3399ff;box-sizing:border-box;"></div>
<svg class="s" style="left:706px;top:143px;" width="14" height="14" viewBox="0 0 14 14"><path d="M7 0 L9.5 3 H4.5 Z M7 14 L9.5 11 H4.5 Z M0 7 L3 4.5 V9.5 Z M14 7 L11 4.5 V9.5 Z" fill="#d4a017"/><path d="M7 3 V11 M3 7 H11" stroke="#333" stroke-width="1"/></svg>
<svg class="s" style="left:728px;top:142px;" width="15" height="15" viewBox="0 0 15 15"><circle cx="6" cy="6" r="5" fill="none" stroke="#3a3a3a" stroke-width="1.6"/><path d="M9.6 9.6 L13.5 13.5" stroke="#3a3a3a" stroke-width="2"/><path d="M6 2.8 L8 5 H4 Z M6 9.2 L8 7 H4 Z" fill="#d4a017"/></svg>
<svg class="s" style="left:750px;top:142px;" width="15" height="15" viewBox="0 0 15 15"><circle cx="6" cy="6" r="5" fill="none" stroke="#3a3a3a" stroke-width="1.6"/><path d="M9.6 9.6 L13.5 13.5" stroke="#3a3a3a" stroke-width="2"/><path d="M3.5 6 H8.5 M6 3.5 V8.5" stroke="#d4a017" stroke-width="1.6"/></svg>
<svg class="s" style="left:772px;top:142px;" width="15" height="15" viewBox="0 0 15 15"><circle cx="6" cy="6" r="5" fill="none" stroke="#3a3a3a" stroke-width="1.6"/><path d="M9.6 9.6 L13.5 13.5" stroke="#3a3a3a" stroke-width="2"/><circle cx="6" cy="6" r="2.8" fill="#3a78d0"/></svg>
<svg class="s" style="left:794px;top:142px;" width="15" height="15" viewBox="0 0 15 15"><circle cx="6" cy="6" r="5" fill="none" stroke="#3a3a3a" stroke-width="1.6"/><path d="M9.6 9.6 L13.5 13.5" stroke="#3a3a3a" stroke-width="2"/><circle cx="6" cy="6" r="2.8" fill="#2aa040"/></svg>
<div class="r" style="left:814px;top:141px;width:1px;height:19px;background:#d2d2da;"></div>
<div class="t" style="left:822px;top:145.43px;font-size:11.3px;color:#1e1e1e;">Select</div>
<svg class="s" style="left:860px;top:142px;" width="14" height="15" viewBox="0 0 14 15"><rect x="0" y="0" width="5" height="5" fill="#e81c1c"/><path d="M4 3 L13 8 L9 9 L12 14 L10 15 L7 10 L4 13 Z" fill="#222"/></svg>
<div class="t" style="left:878px;top:145.43px;font-size:11.3px;color:#1e1e1e;">Mode</div>
<svg class="s" style="left:910px;top:148px;" width="6" height="4" viewBox="0 0 6 4"><path d="M0 0 H6 L3 4 Z" fill="#666"/></svg>
<svg class="s" style="left:928px;top:143px;" width="15" height="14" viewBox="0 0 15 14"><path d="M0.5 13.5 V0.5 H6 M2.5 13 V2.5 H6 M8.5 6 V0.5 H14 M10.5 6 V2.5 H14 M0.5 8 H5 M2.5 10 H5" fill="none" stroke="#888" stroke-width="0.9"/><circle cx="4" cy="4.5" r="1.2" fill="none" stroke="#888"/><path d="M9 8 L13 12 M9 8 V11 M9 8 H12" stroke="#888" stroke-width="0.9"/></svg>
<svg class="s" style="left:951px;top:143px;" width="14" height="14" viewBox="0 0 14 14"><path d="M0.5 0.5 H10 L13.5 4 V13.5 H3.5 L0.5 10 Z" fill="#fff" stroke="#888"/><rect x="3.5" y="4" width="10" height="9.5" fill="#fff" stroke="#888"/><path d="M0.5 0.5 L3.5 4" stroke="#888"/><path d="M7 7 L9.5 9.5 M7 7 V9 M7 7 H9" stroke="#666" stroke-width="0.9"/></svg>
<svg class="s" style="left:973px;top:143px;" width="14" height="14" viewBox="0 0 14 14"><path d="M0.5 0.5 H10 L13.5 4 V13.5 H3.5 L0.5 10 Z" fill="#c8c8c8" stroke="#888"/><rect x="3.5" y="4" width="10" height="9.5" fill="#fff" stroke="#888"/><path d="M0.5 0.5 L3.5 4" stroke="#888"/><path d="M7 7 L9.5 9.5 M7 7 V9 M7 7 H9" stroke="#666" stroke-width="0.9"/></svg>
<svg class="s" style="left:995px;top:143px;" width="14" height="14" viewBox="0 0 14 14"><path d="M0.5 0.5 H10 L13.5 4 V13.5 H3.5 L0.5 10 Z" fill="#e0e0e0" stroke="#888"/><rect x="3.5" y="4" width="10" height="9.5" fill="#fff" stroke="#888"/><path d="M0.5 0.5 L3.5 4" stroke="#888"/><path d="M7 7 L9.5 9.5 M7 7 V9 M7 7 H9" stroke="#666" stroke-width="0.9"/></svg>
<svg class="s" style="left:1017px;top:143px;" width="14" height="14" viewBox="0 0 14 14"><path d="M0.5 0.5 H10 L13.5 4 V13.5 H3.5 L0.5 10 Z" fill="#aaa" stroke="#888"/><rect x="3.5" y="4" width="10" height="9.5" fill="#c0c0c0" stroke="#888"/><path d="M0.5 0.5 L3.5 4" stroke="#888"/><path d="M7 7 L9.5 9.5 M7 7 V9 M7 7 H9" stroke="#666" stroke-width="0.9"/></svg>
<svg class="s" style="left:1039px;top:143px;" width="14" height="14" viewBox="0 0 14 14"><path d="M0.5 0.5 H10 L13.5 4 V13.5 H3.5 L0.5 10 Z" fill="#fff" stroke="#333"/><rect x="3.5" y="4" width="10" height="9.5" fill="#fff" stroke="#333"/><path d="M6.8 4 V13.5 M10.2 4 V13.5 M3.5 7.2 H13.5 M3.5 10.4 H13.5 M0.5 3.5 V10 M2 2 V11.5" stroke="#3a8ae0" stroke-width="0.9"/><path d="M0.5 0.5 L3.5 4" stroke="#333"/><path d="M3 1.5 H6 M7 1.5 H9.5" stroke="#10c010" stroke-width="1.6"/></svg>
<svg class="s" style="left:1061px;top:143px;" width="14" height="14" viewBox="0 0 14 14"><path d="M0.5 0.5 H10 L13.5 4 V13.5 H3.5 L0.5 10 Z" fill="#fff" stroke="#333"/><rect x="3.5" y="4" width="10" height="9.5" fill="#fff" stroke="#333"/><path d="M6.8 4 V13.5 M10.2 4 V13.5 M3.5 7.2 H13.5 M3.5 10.4 H13.5 M0.5 3.5 V10 M2 2 V11.5" stroke="#3a8ae0" stroke-width="0.9"/><path d="M0.5 0.5 L3.5 4" stroke="#333"/><path d="M2 1.5 H10 M3 3 H12" stroke="#10c010" stroke-width="1.4"/></svg>
<svg class="s" style="left:1084px;top:143px;" width="14" height="14" viewBox="0 0 14 14"><path d="M0.5 0.5 H10 L13.5 4 V13.5 H3.5 L0.5 10 Z" fill="#fff" stroke="#333"/><rect x="3.5" y="4" width="10" height="9.5" fill="#fff" stroke="#333"/><path d="M6.8 4 V13.5 M10.2 4 V13.5 M3.5 7.2 H13.5 M3.5 10.4 H13.5 M0.5 3.5 V10 M2 2 V11.5" stroke="#3a8ae0" stroke-width="0.9"/><path d="M0.5 0.5 L3.5 4" stroke="#333"/><g fill="#10c010"><rect x="4.5" y="5" width="1.6" height="1.6"/><rect x="8" y="5" width="1.6" height="1.6"/><rect x="4.5" y="8.3" width="1.6" height="1.6"/><rect x="8" y="8.3" width="1.6" height="1.6"/><rect x="11" y="5" width="1.4" height="1.6"/></g></svg>
<svg class="s" style="left:1104px;top:143px;" width="15" height="14" viewBox="0 0 15 14"><text x="0" y="5" font-size="5" fill="#aaa" font-family="Liberation Sans">X,Y,Z</text><path d="M7 7 L11 13 M7 7 L7 12" stroke="#aaa" stroke-width="1.2"/></svg>
<svg class="s" style="left:1127px;top:142px;" width="15" height="15" viewBox="0 0 15 15"><path d="M0.7 0.7 H11.5 L14.3 3.8 L11.5 6.9 H0.7 Z" fill="#fff" stroke="#222" stroke-width="1.2"/><path d="M3 2.2 V5.4" stroke="#222" stroke-width="1"/><circle cx="6.2" cy="3.8" r="1.3" fill="none" stroke="#222" stroke-width="0.9"/><circle cx="9.4" cy="3.8" r="1.3" fill="none" stroke="#222" stroke-width="0.9"/><path d="M6 7.5 L10 13.5" stroke="#d4a017" stroke-width="1.8"/><path d="M5 7 L9 8 L6.5 10.5 Z" fill="#d4a017"/></svg>
<svg class="s" style="left:1149px;top:142px;" width="15" height="15" viewBox="0 0 15 15"><path d="M0.5 0.5 H11 L14.5 7 L11 13.5 H0.5 Z" fill="#e8e8e8" stroke="#aaa"/><text x="1.5" y="9" font-size="6" fill="#999" font-family="Liberation Sans">Abc</text></svg>
<div class="r" style="left:1170px;top:141px;width:1px;height:19px;background:#d2d2da;"></div>
<svg class="s" style="left:1177px;top:142px;" width="14" height="15" viewBox="0 0 14 15"><rect x="0.5" y="1.5" width="13" height="13" fill="#f0c850" stroke="#333"/><rect x="3.5" y="0" width="7" height="3" fill="#333"/></svg>
<div class="t" style="left:1194px;top:145.43px;font-size:11.3px;color:#1e1e1e;">Clipboard</div>
<svg class="s" style="left:1248px;top:148px;" width="6" height="4" viewBox="0 0 6 4"><path d="M0 0 H6 L3 4 Z" fill="#666"/></svg>
<div class="t" style="left:1266px;top:145.43px;font-size:11.3px;color:#1e1e1e;">[ Empty ]</div>
<div class="r" style="left:1320px;top:141px;width:1px;height:19px;background:#d2d2da;"></div>
<svg class="s" style="left:1328px;top:142px;" width="14" height="15" viewBox="0 0 14 15"><path d="M7 1 L13.5 4 V11 L7 14 L0.5 11 V4 Z" fill="#fff" stroke="#333"/><path d="M0.5 4 L7 7 V14 L0.5 11 Z" fill="#3c3"/><path d="M7 2 V5 M5.5 3.5 H8.5" stroke="#d4a017" stroke-width="1.2"/></svg>
<div class="t" style="left:1345px;top:145.43px;font-size:11.3px;color:#1e1e1e;">Extend</div>
<svg class="s" style="left:1384px;top:148px;" width="6" height="4" viewBox="0 0 6 4"><path d="M0 0 H6 L3 4 Z" fill="#666"/></svg>
<svg class="s" style="left:1401px;top:141px;" width="15" height="17" viewBox="0 0 15 17"><path d="M7.5 1 A4 4 0 0 1 11.5 5 C11.5 8 7.5 12 7.5 12 C7.5 12 3.5 8 3.5 5 A4 4 0 0 1 7.5 1 Z" fill="#d4a017"/><circle cx="7.5" cy="5" r="1.5" fill="#fff"/><path d="M1 16 H14 M1 16 V13 M14 16 V13" fill="none" stroke="#555"/></svg>
<div class="t" style="left:1418px;top:145.43px;font-size:11.3px;color:#1e1e1e;">Select By</div>
<svg class="s" style="left:1469px;top:148px;" width="6" height="4" viewBox="0 0 6 4"><path d="M0 0 H6 L3 4 Z" fill="#666"/></svg>
<svg class="s" style="left:1485px;top:142px;" width="15" height="15" viewBox="0 0 15 15"><path d="M0 8 H4" stroke="#d4a017" stroke-width="1.2"/><path d="M5 4 L10 2 L14 4 L14 11 L9 13 L5 11 Z" fill="#1db41d" stroke="#333" stroke-width="0.9"/></svg>
<div class="t" style="left:1502px;top:145.43px;font-size:11.3px;color:#1e1e1e;">Convert</div>
<svg class="s" style="left:1548px;top:148px;" width="6" height="4" viewBox="0 0 6 4"><path d="M0 0 H6 L3 4 Z" fill="#666"/></svg>
<svg class="s" style="left:1562px;top:153px;" width="9" height="5" viewBox="0 0 9 5"><path d="M0 0 H9 L4.5 5 Z" fill="#1e1e1e"/></svg>
<div class="r" style="left:497px;top:163px;width:2059px;height:646px;background:linear-gradient(180deg,#6b8cdd 0%,#fafbfe 100%);"></div>
<div class="t" style="left:512px;top:180.43px;font-size:11.3px;color:#000;font-weight:bold;">A: Static Structural</div>
<div class="t" style="left:512px;top:195.43px;font-size:11.3px;color:#000;letter-spacing:0.15px;">Maximum Principal Stress</div>
<div class="t" style="left:512px;top:210.43px;font-size:11.3px;color:#000;letter-spacing:0.2px;">Type: Maximum Principal Stress</div>
<div class="t" style="left:512px;top:225.43px;font-size:11.3px;color:#000;">Unit: Pa</div>
<div class="t" style="left:512px;top:240.43px;font-size:11.3px;color:#000;letter-spacing:0.3px;">Time: 1 s</div>
<div class="t" style="left:512px;top:255.43px;font-size:11.3px;color:#000;letter-spacing:-0.2px;">31.08.2023 10:33</div>
<div class="r" style="left:512px;top:288px;width:16px;height:154px;background:#000;"></div>
<div class="r" style="left:513px;top:290px;width:14px;height:15px;background:#ff0000;"></div>
<div class="r" style="left:513px;top:305px;width:14px;height:17px;background:#ff9c00;"></div>
<div class="r" style="left:513px;top:322px;width:14px;height:17px;background:#ffff00;"></div>
<div class="r" style="left:513px;top:339px;width:14px;height:17px;background:#b4ff00;"></div>
<div class="r" style="left:513px;top:356px;width:14px;height:17px;background:#00dc00;"></div>
<div class="r" style="left:513px;top:373px;width:14px;height:17px;background:#00f0a0;"></div>
<div class="r" style="left:513px;top:390px;width:14px;height:17px;background:#00ffff;"></div>
<div class="r" style="left:513px;top:407px;width:14px;height:17px;background:#00a8ff;"></div>
<div class="r" style="left:513px;top:424px;width:14px;height:16px;background:#0000ff;"></div>
<div class="t" style="left:536px;top:283.43px;font-size:11.3px;color:#000;font-weight:bold;letter-spacing:0.5px;">3,3721e8 Max</div>
<div class="t" style="left:536px;top:300.18px;font-size:11.3px;color:#000;letter-spacing:0px;">2,8462e8</div>
<div class="t" style="left:536px;top:316.93px;font-size:11.3px;color:#000;letter-spacing:0px;">2,3202e8</div>
<div class="t" style="left:536px;top:333.68px;font-size:11.3px;color:#000;letter-spacing:0px;">1,7943e8</div>
<div class="t" style="left:536px;top:350.43px;font-size:11.3px;color:#000;letter-spacing:0px;">1,2684e8</div>
<div class="t" style="left:536px;top:367.18px;font-size:11.3px;color:#000;letter-spacing:0px;">7,4244e7</div>
<div class="t" style="left:536px;top:383.93px;font-size:11.3px;color:#000;letter-spacing:0px;">2,1651e7</div>
<div class="t" style="left:536px;top:400.68px;font-size:11.3px;color:#000;letter-spacing:0px;">-3,0943e7</div>
<div class="t" style="left:536px;top:417.43px;font-size:11.3px;color:#000;letter-spacing:0px;">-8,3536e7</div>
<div class="t" style="left:536px;top:434.18px;font-size:11.3px;color:#000;font-weight:bold;letter-spacing:0.5px;">-1,3613e8 Min</div>
<div class="t" style="left:2538px;top:186.45px;font-size:29px;color:#ffffff;font-weight:bold;letter-spacing:1.3px;transform:translateX(-100%);">Ansys</div>
<div class="t" style="left:2538px;top:219.61px;font-size:17px;color:#ffffff;letter-spacing:0.2px;transform:translateX(-100%);">2021 R2</div>
<svg class="s" style="left:0;top:0" width="2556" height="1020" viewBox="0 0 2556 1020"><path d="M1327 507 L1525 621 L1531 611 L1334 498 Z" fill="#14b2b8" stroke="#000" stroke-width="1"/><path d="M1327.0 507.0L1341.0 502.0M1341.0 502.0L1341.1 515.1M1341.1 515.1L1355.1 510.1M1355.1 510.1L1355.3 523.3M1355.3 523.3L1369.2 518.2M1369.2 518.2L1369.4 531.4M1369.4 531.4L1383.2 526.2M1383.2 526.2L1383.6 539.6M1383.6 539.6L1397.3 534.3M1397.3 534.3L1397.7 547.7M1397.7 547.7L1411.4 542.4M1411.4 542.4L1411.9 555.9M1411.9 555.9L1425.5 550.5M1425.5 550.5L1426.0 564.0M1426.0 564.0L1439.5 558.5M1439.5 558.5L1440.1 572.1M1440.1 572.1L1453.6 566.6M1453.6 566.6L1454.3 580.3M1454.3 580.3L1467.7 574.7M1467.7 574.7L1468.4 588.4M1468.4 588.4L1481.8 582.8M1481.8 582.8L1482.6 596.6M1482.6 596.6L1495.8 590.8M1495.8 590.8L1496.7 604.7M1496.7 604.7L1509.9 598.9M1509.9 598.9L1510.9 612.9M1510.9 612.9L1524.0 607.0M1524.0 607.0L1525.0 621.0" stroke="#000" stroke-width="0.8" fill="none"/><defs><clipPath id="pc"><path d="M1335 499 Q1422 412 1528 350 L1725 463 Q1618 526 1530 613 Z"/></clipPath></defs><path d="M1335 499 Q1422 412 1528 350 L1725 463 Q1618 526 1530 613 Z" fill="#0cb20c"/><g clip-path="url(#pc)"><path d="M1421.4 424.6L1359.8 475.9L1528.0 350.0ZM1359.8 475.9L1358.6 493.6L1335.0 499.0ZM1679.4 458.5L1676.5 443.6L1723.0 464.0ZM1490.1 375.4L1477.6 386.3L1421.4 424.6ZM1637.7 419.5L1597.2 395.3L1723.0 464.0ZM1676.3 455.0L1679.4 458.5L1672.6 458.8ZM1716.3 467.7L1679.4 458.5L1723.0 464.0ZM1679.4 458.5L1716.3 467.7L1699.9 472.0ZM1680.4 465.9L1679.4 458.5L1699.9 472.0ZM1679.4 458.5L1680.4 465.9L1672.6 458.8ZM1358.6 493.6L1353.8 497.5L1335.0 499.0ZM1353.8 497.5L1341.0 502.3L1335.0 499.0ZM1362.0 496.0L1353.8 497.5L1358.6 493.6ZM1368.5 471.4L1359.8 475.9L1421.4 424.6ZM1597.2 395.3L1536.7 356.1L1528.0 350.0ZM1567.0 379.9L1536.7 356.1L1597.2 395.3ZM1522.0 486.8L1515.5 484.1L1529.1 474.0ZM1538.8 482.4L1522.0 486.8L1529.1 474.0ZM1540.2 485.4L1538.8 482.4L1541.2 481.1ZM1540.2 485.4L1522.0 486.8L1538.8 482.4ZM1631.7 423.1L1637.7 419.5L1654.1 429.7ZM1353.8 497.5L1365.8 505.6L1341.0 502.3ZM1377.8 473.3L1368.5 471.4L1394.9 458.3ZM1444.4 465.3L1459.6 472.2L1444.5 483.9ZM1536.7 594.3L1554.1 575.9L1530.0 613.0ZM1596.8 546.4L1603.2 542.8L1601.2 548.7ZM1603.2 542.8L1596.8 546.4L1588.1 542.3ZM1581.4 549.3L1563.9 539.3L1588.1 542.3ZM1448.2 558.6L1462.6 573.3L1420.6 544.9ZM1462.6 573.3L1530.0 613.0L1335.0 499.0ZM1515.5 484.1L1512.8 472.7L1529.1 474.0ZM1512.8 472.7L1508.5 466.1L1529.1 474.0ZM1548.5 367.1L1536.7 356.1L1567.0 379.9ZM1549.7 394.0L1526.4 405.7L1527.8 391.4ZM1555.7 384.3L1549.7 394.0L1548.7 380.2ZM1565.8 393.9L1593.7 395.5L1571.0 402.9ZM1603.8 405.1L1593.7 395.5L1597.2 395.3ZM1568.3 389.5L1593.7 395.5L1565.8 393.9ZM1593.7 395.5L1567.0 379.9L1597.2 395.3ZM1593.7 395.5L1568.3 389.5L1567.0 379.9ZM1540.2 485.4L1533.2 500.6L1522.0 486.8ZM1533.2 500.6L1509.6 505.0L1522.0 486.8ZM1680.4 465.9L1671.5 473.0L1672.6 458.8ZM1627.4 432.9L1631.7 423.1L1654.1 429.7ZM1648.1 442.3L1627.4 432.9L1654.1 429.7ZM1405.7 498.6L1410.9 506.4L1397.6 501.3ZM1408.5 482.7L1385.6 494.4L1381.5 484.7ZM1385.6 494.4L1405.7 498.6L1397.6 501.3ZM1377.8 473.3L1409.4 478.2L1381.5 484.7ZM1409.4 478.2L1377.8 473.3L1394.9 458.3ZM1371.6 485.8L1385.6 494.4L1362.0 496.0ZM1385.6 494.4L1371.6 485.8L1381.5 484.7ZM1423.3 431.2L1435.0 428.8L1433.8 440.5ZM1435.0 428.8L1423.3 431.2L1421.4 424.6ZM1452.5 436.7L1446.1 445.4L1433.8 440.5ZM1446.1 445.4L1444.4 465.3L1436.5 466.9ZM1435.0 428.8L1439.6 431.0L1433.8 440.5ZM1439.6 431.0L1452.5 436.7L1433.8 440.5ZM1540.0 580.6L1522.0 588.1L1538.6 576.4ZM1540.0 580.6L1536.7 594.3L1522.0 588.1ZM1536.7 594.3L1540.0 580.6L1554.1 575.9ZM1533.5 567.7L1549.5 570.9L1538.6 576.4ZM1556.5 560.0L1571.2 556.4L1580.7 562.8ZM1462.6 573.3L1484.5 578.6L1494.7 588.3ZM1467.7 570.5L1462.6 573.3L1448.2 558.6ZM1586.6 523.0L1588.1 542.3L1563.7 537.6ZM1586.6 523.0L1603.2 542.8L1588.1 542.3ZM1501.3 482.0L1512.8 472.7L1515.5 484.1ZM1446.2 539.4L1465.6 535.6L1457.5 541.7ZM1451.8 553.4L1448.2 558.6L1440.6 550.3ZM1457.5 541.7L1451.8 553.4L1440.6 550.3ZM1451.8 553.4L1467.7 570.5L1448.2 558.6ZM1508.5 466.1L1544.0 458.6L1529.1 474.0ZM1496.3 395.8L1481.9 401.2L1479.5 395.9ZM1467.8 401.6L1441.6 413.0L1477.6 386.3ZM1421.4 424.6L1441.6 413.0L1434.1 418.6ZM1477.6 386.3L1441.6 413.0L1421.4 424.6ZM1458.8 412.0L1441.6 413.0L1467.8 401.6ZM1553.5 374.8L1548.5 367.1L1567.0 379.9ZM1568.3 389.5L1562.4 380.2L1567.0 379.9ZM1555.7 384.3L1562.4 380.2L1568.3 389.5ZM1562.4 380.2L1553.5 374.8L1567.0 379.9ZM1562.4 380.2L1555.7 384.3L1548.7 380.2ZM1553.5 374.8L1562.4 380.2L1548.7 380.2ZM1556.3 400.6L1571.0 402.9L1557.7 405.4ZM1556.3 400.6L1565.8 393.9L1571.0 402.9ZM1549.7 394.0L1556.3 400.6L1526.4 405.7ZM1555.0 391.8L1568.3 389.5L1565.8 393.9ZM1556.3 400.6L1555.0 391.8L1565.8 393.9ZM1555.0 391.8L1556.3 400.6L1549.7 394.0ZM1555.0 391.8L1555.7 384.3L1568.3 389.5ZM1555.0 391.8L1549.7 394.0L1555.7 384.3ZM1582.3 408.9L1593.7 395.5L1603.8 405.1ZM1593.7 395.5L1582.3 408.9L1571.0 402.9ZM1580.6 434.9L1586.3 428.3L1598.3 432.0ZM1568.0 518.0L1586.6 523.0L1563.7 537.6ZM1636.6 499.5L1639.3 492.9L1647.1 491.0ZM1658.7 456.4L1676.3 455.0L1672.6 458.8ZM1671.5 473.0L1658.7 456.4L1672.6 458.8ZM1405.7 498.6L1414.0 497.4L1416.0 500.0ZM1451.2 442.9L1446.1 445.4L1452.5 436.7ZM1427.1 447.1L1446.1 445.4L1436.5 466.9ZM1530.9 568.6L1533.5 567.7L1538.6 576.4ZM1533.5 567.7L1530.9 568.6L1527.2 564.3ZM1571.2 556.4L1582.5 557.5L1580.7 562.8ZM1580.7 562.8L1582.5 557.5L1601.2 548.7ZM1582.5 557.5L1596.8 546.4L1601.2 548.7ZM1562.9 553.5L1571.2 556.4L1556.5 560.0ZM1562.9 553.5L1563.9 539.3L1581.4 549.3ZM1571.2 556.4L1562.9 553.5L1581.4 549.3ZM1537.4 559.2L1556.5 560.0L1549.5 570.9ZM1533.5 567.7L1537.4 559.2L1549.5 570.9ZM1537.4 559.2L1533.5 567.7L1527.2 564.3ZM1538.6 525.5L1534.0 533.3L1527.8 531.7ZM1527.3 551.4L1534.0 533.3L1540.3 544.3ZM1470.4 573.2L1484.5 578.6L1462.6 573.3ZM1467.7 570.5L1470.4 573.2L1462.6 573.3ZM1470.4 573.2L1485.8 574.9L1484.5 578.6ZM1470.4 573.2L1467.7 570.5L1481.2 566.4ZM1485.8 574.9L1470.4 573.2L1481.2 566.4ZM1530.9 568.6L1521.1 568.7L1527.2 564.3ZM1500.5 486.2L1501.3 482.0L1515.5 484.1ZM1512.8 472.7L1506.7 468.5L1508.5 466.1ZM1482.9 539.1L1465.6 535.6L1469.9 530.6ZM1465.6 535.6L1465.8 540.1L1457.5 541.7ZM1482.9 539.1L1465.8 540.1L1465.6 535.6ZM1451.8 553.4L1463.3 544.4L1467.7 570.5ZM1463.3 544.4L1465.8 540.1L1482.9 539.1ZM1463.3 544.4L1451.8 553.4L1457.5 541.7ZM1465.8 540.1L1463.3 544.4L1457.5 541.7ZM1544.0 458.6L1565.1 465.2L1539.8 473.0ZM1559.2 478.4L1565.1 465.2L1566.5 473.7ZM1498.8 401.9L1496.3 395.8L1505.3 402.0ZM1498.8 401.9L1481.9 401.2L1496.3 395.8ZM1495.0 418.5L1498.8 401.9L1505.3 402.0ZM1526.4 405.7L1519.9 391.8L1527.8 391.4ZM1444.4 465.3L1464.9 455.2L1459.6 472.2ZM1446.1 445.4L1464.9 455.2L1444.4 465.3ZM1451.2 442.9L1464.9 455.2L1446.1 445.4ZM1436.5 422.9L1421.4 424.6L1434.1 418.6ZM1436.5 422.9L1435.0 428.8L1421.4 424.6ZM1441.6 413.0L1436.5 422.9L1434.1 418.6ZM1449.2 421.4L1436.5 422.9L1441.6 413.0ZM1454.6 418.5L1449.2 421.4L1441.6 413.0ZM1454.6 418.5L1458.8 412.0L1456.9 418.1ZM1458.8 412.0L1454.6 418.5L1441.6 413.0ZM1470.6 424.0L1453.2 423.6L1456.9 418.1ZM1453.2 423.6L1470.6 424.0L1460.6 433.9ZM1453.2 423.6L1454.6 418.5L1456.9 418.1ZM1454.6 418.5L1453.2 423.6L1449.2 421.4ZM1553.5 374.8L1550.1 373.1L1548.5 367.1ZM1550.1 373.1L1543.5 372.6L1548.5 367.1ZM1550.1 373.1L1553.5 374.8L1548.7 380.2ZM1571.0 402.9L1572.3 407.6L1557.7 405.4ZM1582.3 408.9L1572.3 407.6L1571.0 402.9ZM1673.0 488.9L1668.2 485.9L1680.4 482.3ZM1668.2 485.9L1673.0 488.9L1668.6 495.6ZM1654.1 500.1L1636.6 499.5L1647.1 491.0ZM1553.2 484.9L1540.2 485.4L1541.2 481.1ZM1593.9 518.8L1586.6 523.0L1587.4 521.4ZM1586.6 523.0L1593.9 518.8L1603.2 542.8ZM1586.6 523.0L1578.5 516.9L1587.4 521.4ZM1568.0 518.0L1578.5 516.9L1586.6 523.0ZM1658.7 456.4L1640.3 455.3L1644.3 445.3ZM1385.0 504.8L1385.6 494.4L1397.6 501.3ZM1414.7 488.5L1414.0 497.4L1405.7 498.6ZM1436.5 466.9L1427.4 471.0L1415.8 455.5ZM1464.9 455.2L1479.5 465.5L1459.6 472.2ZM1582.0 550.7L1571.2 556.4L1581.4 549.3ZM1582.0 550.7L1582.5 557.5L1571.2 556.4ZM1582.5 557.5L1582.0 550.7L1596.8 546.4ZM1582.0 550.7L1581.4 549.3L1588.1 542.3ZM1596.8 546.4L1582.0 550.7L1588.1 542.3ZM1549.2 546.4L1562.9 553.5L1556.5 560.0ZM1537.4 559.2L1549.2 546.4L1556.5 560.0ZM1514.9 547.2L1534.0 533.3L1527.3 551.4ZM1535.8 557.6L1549.2 546.4L1537.4 559.2ZM1535.8 557.6L1537.4 559.2L1527.2 564.3ZM1485.2 559.7L1503.9 566.3L1481.2 566.4ZM1485.2 559.7L1490.7 550.4L1497.7 554.4ZM1490.7 550.4L1485.2 559.7L1487.8 545.8ZM1485.2 559.7L1463.3 544.4L1487.8 545.8ZM1467.7 570.5L1485.2 559.7L1481.2 566.4ZM1463.3 544.4L1485.2 559.7L1467.7 570.5ZM1518.6 559.3L1535.8 557.6L1527.2 564.3ZM1521.1 568.7L1518.6 559.3L1527.2 564.3ZM1514.9 547.2L1518.6 559.3L1511.0 549.4ZM1518.6 559.3L1514.9 547.2L1527.3 551.4ZM1511.0 549.4L1518.6 559.3L1510.7 549.4ZM1522.0 486.8L1497.8 498.5L1515.5 484.1ZM1452.8 517.8L1446.2 539.4L1438.4 525.2ZM1446.2 539.4L1452.8 517.8L1465.6 535.6ZM1465.6 535.6L1452.8 517.8L1469.9 530.6ZM1452.8 517.8L1468.8 520.2L1469.9 530.6ZM1445.0 484.2L1440.3 487.5L1444.5 483.9ZM1461.1 485.3L1459.6 479.5L1474.4 487.2ZM1482.0 474.9L1459.6 479.5L1459.6 472.2ZM1445.0 484.2L1459.6 479.5L1461.1 485.3ZM1459.6 472.2L1459.6 479.5L1444.5 483.9ZM1459.6 479.5L1445.0 484.2L1444.5 483.9ZM1497.7 457.5L1523.1 443.4L1508.5 466.1ZM1523.1 443.4L1544.0 458.6L1508.5 466.1ZM1562.3 458.6L1544.0 458.6L1555.3 454.8ZM1562.3 458.6L1565.1 465.2L1544.0 458.6ZM1565.9 452.0L1562.3 458.6L1555.3 454.8ZM1565.1 465.2L1571.6 468.9L1566.5 473.7ZM1571.6 468.9L1565.1 465.2L1576.7 460.4ZM1566.5 473.7L1571.6 468.9L1586.4 480.6ZM1519.3 376.9L1495.2 374.8L1517.5 360.7ZM1517.5 360.7L1495.2 374.8L1490.1 375.4ZM1504.2 385.3L1504.5 391.6L1496.3 395.8ZM1496.3 395.8L1504.5 391.6L1505.3 402.0ZM1446.6 426.4L1436.5 422.9L1449.2 421.4ZM1453.2 423.6L1446.6 426.4L1449.2 421.4ZM1446.6 426.4L1439.6 431.0L1435.0 428.8ZM1436.5 422.9L1446.6 426.4L1435.0 428.8ZM1534.2 413.5L1556.3 400.6L1557.7 405.4ZM1526.4 405.7L1522.7 410.0L1505.3 402.0ZM1503.8 431.3L1504.1 429.0L1510.4 428.6ZM1504.1 429.0L1506.8 425.6L1510.4 428.6ZM1506.8 425.6L1504.1 429.0L1495.0 418.5ZM1572.3 407.6L1553.4 416.1L1557.7 405.4ZM1667.7 497.8L1716.3 467.7L1723.0 464.0ZM1667.7 497.8L1673.0 488.9L1680.4 482.3ZM1673.0 488.9L1667.7 497.8L1668.6 495.6ZM1661.1 496.8L1654.1 500.1L1647.1 491.0ZM1668.2 485.9L1661.1 496.8L1647.1 491.0ZM1661.1 496.8L1668.2 485.9L1668.6 495.6ZM1667.7 497.8L1661.1 496.8L1668.6 495.6ZM1661.1 496.8L1667.7 497.8L1654.1 500.1ZM1565.2 440.8L1583.0 446.5L1565.9 452.0ZM1583.0 446.5L1566.4 439.2L1580.6 434.9ZM1589.8 516.0L1593.9 518.8L1587.4 521.4ZM1578.5 516.9L1589.8 516.0L1587.4 521.4ZM1639.3 492.9L1635.8 485.2L1647.1 491.0ZM1635.8 485.2L1668.2 485.9L1647.1 491.0ZM1668.2 485.9L1635.8 485.2L1671.5 473.0ZM1587.7 500.9L1589.8 516.0L1578.5 516.9ZM1385.0 504.8L1377.7 505.7L1385.6 494.4ZM1385.6 494.4L1377.7 505.7L1362.0 496.0ZM1414.7 488.5L1418.5 492.0L1414.0 497.4ZM1414.0 497.4L1418.5 492.0L1416.0 500.0ZM1418.5 492.0L1440.3 487.5L1435.2 502.3ZM1410.9 487.5L1414.7 488.5L1405.7 498.6ZM1410.9 487.5L1385.6 494.4L1408.5 482.7ZM1385.6 494.4L1410.9 487.5L1405.7 498.6ZM1433.5 473.6L1427.4 471.0L1436.5 466.9ZM1433.5 473.6L1444.4 465.3L1444.5 483.9ZM1444.4 465.3L1433.5 473.6L1436.5 466.9ZM1494.4 462.3L1497.7 457.5L1508.5 466.1ZM1506.7 468.5L1494.4 462.3L1508.5 466.1ZM1549.2 546.4L1534.6 553.8L1540.3 544.3ZM1535.8 557.6L1534.6 553.8L1549.2 546.4ZM1534.6 553.8L1527.3 551.4L1540.3 544.3ZM1534.6 553.8L1518.6 559.3L1527.3 551.4ZM1518.6 559.3L1534.6 553.8L1535.8 557.6ZM1534.8 517.1L1529.1 524.7L1533.1 513.9ZM1529.1 524.7L1515.6 522.3L1533.1 513.9ZM1515.6 522.3L1529.1 524.7L1521.2 530.9ZM1521.2 530.9L1529.1 524.7L1527.8 531.7ZM1529.1 524.7L1538.6 525.5L1527.8 531.7ZM1529.1 524.7L1534.8 517.1L1538.6 525.5ZM1496.6 495.2L1500.5 486.2L1515.5 484.1ZM1452.8 517.8L1472.0 513.1L1468.8 520.2ZM1469.4 488.6L1461.1 485.3L1474.4 487.2ZM1480.7 496.0L1473.4 495.0L1474.4 487.2ZM1473.4 495.0L1469.4 488.6L1474.4 487.2ZM1469.4 488.6L1473.4 495.0L1467.2 492.7ZM1473.4 495.0L1461.1 498.2L1467.2 492.7ZM1461.1 498.2L1473.4 495.0L1469.2 501.7ZM1568.1 454.0L1562.3 458.6L1565.9 452.0ZM1583.0 446.5L1568.1 454.0L1565.9 452.0ZM1583.4 459.3L1591.4 465.1L1576.7 460.4ZM1591.4 465.1L1571.6 468.9L1576.7 460.4ZM1571.6 468.9L1591.4 465.1L1586.4 480.6ZM1519.9 391.8L1514.3 393.8L1504.2 385.3ZM1514.3 393.8L1504.5 391.6L1504.2 385.3ZM1504.5 391.6L1514.3 393.8L1505.3 402.0ZM1514.3 393.8L1526.4 405.7L1505.3 402.0ZM1514.3 393.8L1519.9 391.8L1526.4 405.7ZM1445.8 428.6L1453.2 423.6L1460.6 433.9ZM1445.8 428.6L1446.6 426.4L1453.2 423.6ZM1445.8 428.6L1460.6 433.9L1452.5 436.7ZM1439.6 431.0L1445.8 428.6L1452.5 436.7ZM1446.6 426.4L1445.8 428.6L1439.6 431.0ZM1565.5 421.4L1553.4 416.1L1572.3 407.6ZM1565.5 421.4L1582.3 408.9L1586.2 420.2ZM1565.5 421.4L1572.3 407.6L1582.3 408.9ZM1553.4 416.1L1565.5 421.4L1553.1 426.3ZM1587.5 423.7L1565.5 421.4L1586.2 420.2ZM1565.5 421.4L1587.5 423.7L1586.3 428.3ZM1565.5 421.4L1586.3 428.3L1580.6 434.9ZM1566.4 439.2L1565.5 421.4L1580.6 434.9ZM1565.5 421.4L1566.4 439.2L1553.1 426.3ZM1589.8 516.0L1598.4 516.7L1593.9 518.8ZM1563.0 485.4L1553.2 484.9L1559.2 478.4ZM1563.0 485.4L1559.2 478.4L1566.5 473.7ZM1570.9 486.4L1563.0 485.4L1566.5 473.7ZM1585.8 481.0L1566.5 473.7L1586.4 480.6ZM1585.8 481.0L1570.9 486.4L1566.5 473.7ZM1581.9 452.7L1583.4 459.3L1576.7 460.4ZM1568.1 454.0L1581.9 452.7L1576.7 460.4ZM1585.2 447.8L1581.9 452.7L1583.0 446.5ZM1581.9 452.7L1568.1 454.0L1583.0 446.5ZM1635.5 457.4L1637.6 462.4L1617.7 466.6ZM1637.6 462.4L1658.7 456.4L1671.5 473.0ZM1635.8 485.2L1637.6 462.4L1671.5 473.0ZM1637.6 462.4L1640.3 455.3L1658.7 456.4ZM1637.6 462.4L1635.5 457.4L1640.3 455.3ZM1434.4 484.4L1433.5 473.6L1444.5 483.9ZM1440.3 487.5L1434.4 484.4L1444.5 483.9ZM1418.5 492.0L1434.4 484.4L1440.3 487.5ZM1434.4 484.4L1418.5 492.0L1426.4 484.2ZM1458.1 504.4L1472.0 513.1L1452.8 517.8ZM1461.1 498.2L1458.1 504.4L1435.2 502.3ZM1440.3 487.5L1462.1 494.1L1435.2 502.3ZM1462.1 494.1L1461.1 498.2L1435.2 502.3ZM1445.0 484.2L1462.1 494.1L1440.3 487.5ZM1462.1 494.1L1445.0 484.2L1461.1 485.3ZM1461.1 498.2L1462.1 494.1L1467.2 492.7ZM1469.4 488.6L1462.1 494.1L1461.1 485.3ZM1462.1 494.1L1469.4 488.6L1467.2 492.7ZM1515.5 422.0L1533.3 427.5L1510.4 428.6ZM1506.8 425.6L1515.5 422.0L1510.4 428.6ZM1519.1 418.8L1515.5 422.0L1495.0 418.5ZM1515.5 422.0L1506.8 425.6L1495.0 418.5ZM1565.7 459.9L1568.1 454.0L1576.7 460.4ZM1568.1 454.0L1565.7 459.9L1562.3 458.6ZM1565.1 465.2L1565.7 459.9L1576.7 460.4ZM1562.3 458.6L1565.7 459.9L1565.1 465.2ZM1581.9 452.7L1596.8 456.9L1583.4 459.3ZM1596.8 456.9L1581.9 452.7L1585.2 447.8ZM1563.0 485.4L1563.6 491.2L1553.2 484.9ZM1563.6 491.2L1563.0 485.4L1570.9 486.4ZM1583.9 491.2L1587.7 500.9L1579.0 497.6ZM1587.7 500.9L1583.9 491.2L1613.8 484.0ZM1613.8 484.0L1583.9 491.2L1586.4 480.6ZM1583.9 491.2L1585.8 481.0L1586.4 480.6ZM1462.5 501.8L1461.1 498.2L1469.2 501.7ZM1462.5 501.8L1458.1 504.4L1461.1 498.2ZM1458.1 504.4L1462.5 503.1L1472.0 513.1ZM1462.5 503.1L1469.2 501.7L1473.6 504.6ZM1462.5 503.1L1462.5 501.8L1469.2 501.7ZM1462.5 501.8L1462.5 503.1L1458.1 504.4ZM1563.6 491.2L1542.1 498.6L1553.2 484.9ZM1542.1 498.6L1533.2 500.6L1540.2 485.4ZM1553.2 484.9L1542.1 498.6L1540.2 485.4ZM1574.9 491.8L1563.6 491.2L1570.9 486.4ZM1574.9 491.8L1583.9 491.2L1579.0 497.6ZM1585.8 481.0L1577.6 486.3L1570.9 486.4ZM1583.9 491.2L1577.6 486.3L1585.8 481.0ZM1577.6 486.3L1574.9 491.8L1570.9 486.4ZM1574.9 491.8L1577.6 486.3L1583.9 491.2ZM1629.3 486.3L1635.8 485.2L1639.3 492.9ZM1592.9 463.5L1591.4 465.1L1583.4 459.3ZM1596.8 456.9L1592.9 463.5L1583.4 459.3ZM1591.4 465.1L1594.4 466.1L1586.4 480.6ZM1594.4 466.1L1598.9 469.5L1586.4 480.6ZM1592.9 463.5L1594.4 466.1L1591.4 465.1ZM1594.4 466.1L1592.9 463.5L1599.5 463.8ZM1569.9 494.8L1574.9 491.8L1579.0 497.6ZM1574.9 491.8L1569.9 494.8L1563.6 491.2ZM1601.4 460.4L1592.9 463.5L1596.8 456.9ZM1592.9 463.5L1601.4 460.4L1599.5 463.8ZM1594.4 466.1L1600.4 465.7L1598.9 469.5ZM1600.4 465.7L1594.4 466.1L1599.5 463.8Z" fill="#18bc98"/><circle cx="1510" cy="462" r="10" fill="#c8c800" opacity="0.9"/><circle cx="1610" cy="400" r="6" fill="#a0c800" opacity="0.9"/><circle cx="1604" cy="506" r="5" fill="#a0c800" opacity="0.9"/><circle cx="1671" cy="479" r="6" fill="#a0c800" opacity="0.9"/><circle cx="1352" cy="488" r="5" fill="#a0c800" opacity="0.9"/><circle cx="1370" cy="515" r="4" fill="#a0c800" opacity="0.9"/><circle cx="1510" cy="462" r="5" fill="#f0a000"/><circle cx="1510" cy="462" r="2" fill="#e02000"/><path d="M1522.5 353.3L1528.0 350.0M1528.0 350.0L1531.8 352.2M1531.8 352.2L1522.5 353.3M1538.7 495.8L1504.2 509.7M1504.2 509.7L1524.3 488.6M1524.3 488.6L1538.7 495.8M1530.0 613.0L1524.9 610.0M1524.9 610.0L1533.4 609.7M1533.4 609.7L1530.0 613.0M1436.2 411.5L1457.4 435.0M1457.4 435.0L1437.8 434.6M1437.8 434.6L1436.2 411.5M1468.5 405.9L1457.4 435.0M1436.2 411.5L1468.5 405.9M1420.8 423.3L1436.2 411.5M1437.8 434.6L1420.8 423.3M1405.5 435.5L1420.8 423.3M1437.8 434.6L1405.5 435.5M1603.7 394.2L1619.3 403.4M1619.3 403.4L1580.2 397.5M1580.2 397.5L1603.7 394.2M1619.3 403.4L1566.6 433.9M1566.6 433.9L1580.2 397.5M1566.6 433.9L1568.7 400.0M1568.7 400.0L1580.2 397.5M1438.5 471.4L1468.8 464.4M1468.8 464.4L1462.1 478.5M1462.1 478.5L1438.5 471.4M1408.7 518.1L1438.5 471.4M1462.1 478.5L1408.7 518.1M1468.8 464.4L1479.6 474.5M1479.6 474.5L1462.1 478.5M1598.2 524.2L1595.9 537.4M1595.9 537.4L1571.5 527.9M1571.5 527.9L1598.2 524.2M1578.7 493.8L1598.2 524.2M1571.5 527.9L1578.7 493.8M1551.8 492.2L1538.7 495.8M1524.3 488.6L1551.8 492.2M1568.4 461.7L1551.8 492.2M1524.3 488.6L1568.4 461.7M1538.7 495.8L1535.1 521.4M1535.1 521.4L1504.2 509.7M1551.8 492.2L1535.1 521.4M1535.1 521.4L1578.7 493.8M1571.5 527.9L1535.1 521.4M1551.8 492.2L1578.7 493.8M1639.5 426.4L1591.7 442.3M1591.7 442.3L1634.8 412.5M1634.8 412.5L1639.5 426.4M1591.7 442.3L1619.3 403.4M1619.3 403.4L1634.8 412.5M1591.7 442.3L1566.6 433.9M1639.5 426.4L1632.3 462.7M1632.3 462.7L1591.7 442.3M1538.7 526.0L1535.1 521.4M1571.5 527.9L1538.7 526.0M1441.6 541.2L1511.9 526.9M1511.9 526.9L1514.7 537.9M1514.7 537.9L1441.6 541.2M1535.1 521.4L1511.9 526.9M1511.9 526.9L1504.2 509.7M1426.3 552.4L1441.6 541.2M1441.6 541.2L1441.8 561.5M1441.8 561.5L1426.3 552.4M1485.7 376.5L1498.2 368.4M1498.2 368.4L1519.7 388.6M1519.7 388.6L1485.7 376.5M1486.6 395.6L1485.7 376.5M1519.7 388.6L1486.6 395.6M1480.7 440.3L1457.4 435.0M1468.5 405.9L1480.7 440.3M1480.7 440.3L1486.6 395.6M1486.6 395.6L1520.2 444.1M1520.2 444.1L1480.7 440.3M1468.5 405.9L1486.6 395.6M1480.7 440.3L1468.8 464.4M1468.8 464.4L1457.4 435.0M1457.4 435.0L1436.5 439.8M1436.5 439.8L1437.8 434.6M1335.0 499.0L1338.4 495.7M1338.4 495.7L1338.8 501.2M1338.8 501.2L1335.0 499.0M1377.1 488.9L1348.3 486.1M1348.3 486.1L1362.5 472.8M1362.5 472.8L1377.1 488.9M1377.1 488.9L1349.8 507.6M1349.8 507.6L1348.3 486.1M1377.1 488.9L1438.5 471.4M1408.7 518.1L1377.1 488.9M1377.1 488.9L1426.9 465.1M1426.9 465.1L1438.5 471.4M1375.6 461.0L1377.1 488.9M1362.5 472.8L1375.6 461.0M1410.7 459.6L1375.6 461.0M1375.6 461.0L1385.0 452.8M1385.0 452.8L1410.7 459.6M1377.1 488.9L1410.7 459.6M1410.7 459.6L1426.9 465.1M1594.9 389.1L1588.3 393.4M1588.3 393.4L1582.3 381.7M1582.3 381.7L1594.9 389.1M1594.9 389.1L1603.7 394.2M1603.7 394.2L1588.3 393.4M1580.2 397.5L1588.3 393.4M1542.8 358.6L1522.5 353.3M1531.8 352.2L1542.8 358.6M1542.8 358.6L1558.2 367.7M1558.2 367.7L1519.7 388.6M1519.7 388.6L1542.8 358.6M1568.7 400.0L1558.4 389.4M1558.4 389.4L1580.2 397.5M1558.2 367.7L1558.4 389.4M1558.4 389.4L1519.7 388.6M1553.3 407.2L1568.7 400.0M1566.6 433.9L1553.3 407.2M1486.6 395.6L1553.3 407.2M1553.3 407.2L1520.2 444.1M1519.7 388.6L1553.3 407.2M1558.4 389.4L1553.3 407.2M1615.8 537.3L1600.5 549.5M1600.5 549.5L1595.9 537.4M1595.9 537.4L1615.8 537.3M1598.2 524.2L1615.8 537.3M1600.5 549.5L1592.1 556.5M1592.1 556.5L1595.9 537.4M1592.1 556.5L1580.0 566.8M1580.0 566.8L1571.5 527.9M1571.5 527.9L1592.1 556.5M1441.6 541.2L1453.3 568.2M1453.3 568.2L1441.8 561.5M1514.7 537.9L1453.3 568.2M1464.7 574.8L1453.3 568.2M1514.7 537.9L1464.7 574.8M1646.3 419.2L1639.5 426.4M1634.8 412.5L1646.3 419.2M1646.3 419.2L1657.7 425.8M1657.7 425.8L1639.5 426.4M1665.3 430.3L1683.2 440.7M1683.2 440.7L1632.3 462.7M1632.3 462.7L1665.3 430.3M1639.5 426.4L1665.3 430.3M1657.7 425.8L1665.3 430.3M1584.7 456.6L1591.7 442.3M1632.3 462.7L1584.7 456.6M1702.3 451.9L1717.9 461.0M1717.9 461.0L1696.4 460.3M1696.4 460.3L1702.3 451.9M1695.1 447.7L1696.4 460.3M1696.4 460.3L1683.2 440.7M1683.2 440.7L1695.1 447.7M1695.1 447.7L1702.3 451.9M1655.5 480.3L1693.2 482.4M1693.2 482.4L1680.7 490.5M1680.7 490.5L1655.5 480.3M1655.5 480.3L1642.7 471.9M1642.7 471.9L1696.4 460.3M1696.4 460.3L1655.5 480.3M1683.2 440.7L1642.7 471.9M1642.7 471.9L1632.3 462.7M1642.7 471.9L1633.1 474.8M1633.1 474.8L1632.3 462.7M1642.7 471.9L1639.0 484.3M1639.0 484.3L1633.1 474.8M1655.5 480.3L1639.0 484.3M1557.5 586.8L1535.0 596.2M1535.0 596.2L1541.2 576.1M1541.2 576.1L1557.5 586.8M1524.9 610.0L1535.0 596.2M1535.0 596.2L1533.4 609.7M1524.9 610.0L1509.3 600.9M1509.3 600.9L1535.0 596.2M1510.2 581.5L1535.0 596.2M1509.3 600.9L1510.2 581.5M1510.2 581.5L1541.2 576.1M1570.6 575.0L1541.2 576.1M1541.2 576.1L1580.0 566.8M1580.0 566.8L1570.6 575.0M1570.6 575.0L1557.5 586.8M1510.2 581.5L1502.1 596.7M1502.1 596.7L1490.2 589.7M1490.2 589.7L1510.2 581.5M1509.3 600.9L1502.1 596.7M1532.9 546.7L1538.7 526.0M1571.5 527.9L1532.9 546.7M1580.0 566.8L1532.9 546.7M1541.2 576.1L1532.9 546.7M1487.9 577.8L1464.7 574.8M1514.7 537.9L1487.9 577.8M1401.9 538.1L1389.3 530.7M1389.3 530.7L1408.7 518.1M1408.7 518.1L1401.9 538.1M1389.3 530.7L1379.3 524.9M1379.3 524.9L1408.7 518.1M1511.9 526.9L1453.0 518.4M1453.0 518.4L1504.2 509.7M1441.6 541.2L1453.0 518.4M1421.4 527.3L1453.0 518.4M1441.6 541.2L1421.4 527.3M1453.0 518.4L1408.7 518.1M1462.1 478.5L1453.0 518.4M1538.7 526.0L1525.7 527.1M1525.7 527.1L1535.1 521.4M1525.7 527.1L1511.9 526.9M1525.7 527.1L1514.7 537.9M1525.7 527.1L1532.9 546.7M1532.9 546.7L1514.7 537.9M1414.1 521.3L1401.9 538.1M1408.7 518.1L1414.1 521.3M1414.1 521.3L1421.4 527.3M1421.4 527.3L1401.9 538.1M1453.0 518.4L1414.1 521.3M1421.4 527.3L1410.7 543.2M1410.7 543.2L1401.9 538.1M1426.3 552.4L1410.7 543.2M1410.7 543.2L1441.6 541.2M1447.8 402.9L1468.5 405.9M1436.2 411.5L1447.8 402.9M1447.8 402.9L1459.2 394.6M1459.2 394.6L1468.5 405.9M1486.6 395.6L1467.1 389.1M1467.1 389.1L1485.7 376.5M1459.2 394.6L1467.1 389.1M1467.1 389.1L1468.5 405.9M1438.5 471.4L1438.2 458.7M1438.2 458.7L1468.8 464.4M1438.2 458.7L1457.4 435.0M1438.2 458.7L1436.5 439.8M1426.9 465.1L1438.2 458.7M1438.2 458.7L1414.4 447.7M1414.4 447.7L1436.5 439.8M1410.7 459.6L1438.2 458.7M1410.7 459.6L1414.4 447.7M1377.1 488.9L1367.7 507.2M1367.7 507.2L1349.8 507.6M1379.3 524.9L1367.7 507.2M1367.7 507.2L1408.7 518.1M1397.1 442.5L1413.4 446.6M1413.4 446.6L1385.0 452.8M1385.0 452.8L1397.1 442.5M1413.4 446.6L1410.7 459.6M1413.4 446.6L1414.4 447.7M1397.1 442.5L1405.5 435.5M1405.5 435.5L1413.4 446.6M1437.8 434.6L1413.4 446.6M1436.5 439.8L1413.4 446.6M1542.8 358.6L1505.7 363.6M1505.7 363.6L1522.5 353.3M1498.2 368.4L1505.7 363.6M1505.7 363.6L1519.7 388.6M1572.3 375.9L1558.4 389.4M1558.2 367.7L1572.3 375.9M1553.3 407.2L1554.6 433.6M1554.6 433.6L1520.2 444.1M1566.6 433.9L1554.6 433.6M1554.6 433.6L1520.2 445.2M1520.2 445.2L1520.2 444.1M1480.7 440.3L1509.9 452.9M1509.9 452.9L1468.8 464.4M1509.9 452.9L1479.6 474.5M1520.2 444.1L1509.9 452.9M1520.2 445.2L1509.9 452.9M1509.9 452.9L1524.3 488.6M1524.3 488.6L1479.6 474.5M1509.9 452.9L1568.4 461.7M1520.2 445.2L1568.4 461.7M1607.6 515.8L1598.2 524.2M1578.7 493.8L1607.6 515.8M1609.2 493.4L1607.6 515.8M1578.7 493.8L1609.2 493.4M1655.5 480.3L1649.9 490.6M1649.9 490.6L1639.0 484.3M1662.1 503.1L1649.9 490.6M1649.9 490.6L1680.7 490.5M1680.7 490.5L1662.1 503.1M1584.7 456.6L1568.7 448.5M1568.7 448.5L1591.7 442.3M1520.2 445.2L1568.7 448.5M1568.7 448.5L1568.4 461.7M1568.7 448.5L1583.2 457.0M1583.2 457.0L1568.4 461.7M1584.7 456.6L1583.2 457.0M1588.9 476.3L1583.2 457.0M1584.7 456.6L1588.9 476.3M1588.9 476.3L1568.4 461.7M1633.1 474.8L1588.9 476.3M1588.9 476.3L1632.3 462.7M1551.8 492.2L1588.9 476.3M1588.9 476.3L1578.7 493.8M1717.5 467.3L1717.9 461.0M1717.9 461.0L1723.0 464.0M1723.0 464.0L1717.5 467.3M1535.0 596.2L1543.3 600.1M1543.3 600.1L1533.4 609.7M1557.5 586.8L1543.3 600.1M1472.3 579.3L1487.9 577.8M1487.9 577.8L1490.2 589.7M1490.2 589.7L1472.3 579.3M1472.3 579.3L1464.7 574.8M1490.1 578.8L1510.2 581.5M1490.2 589.7L1490.1 578.8M1487.9 577.8L1490.1 578.8M1482.5 493.1L1453.0 518.4M1462.1 478.5L1482.5 493.1M1482.5 493.1L1504.2 509.7M1479.6 474.5L1482.5 493.1M1482.5 493.1L1524.3 488.6M1367.7 507.2L1365.2 516.7M1365.2 516.7L1349.8 507.6M1379.3 524.9L1365.2 516.7M1571.9 383.2L1572.3 375.9M1572.3 375.9L1582.3 381.7M1582.3 381.7L1571.9 383.2M1571.9 383.2L1558.4 389.4M1571.9 383.2L1580.2 397.5M1571.9 383.2L1588.3 393.4M1615.8 537.3L1618.2 517.3M1618.2 517.3L1631.2 525.5M1631.2 525.5L1615.8 537.3M1565.6 444.0L1554.6 433.6M1566.6 433.9L1565.6 444.0M1591.7 442.3L1565.6 444.0M1568.7 448.5L1565.6 444.0M1565.6 444.0L1520.2 445.2M1611.3 488.3L1609.2 493.4M1578.7 493.8L1611.3 488.3M1588.9 476.3L1611.3 488.3M1633.1 474.8L1611.3 488.3M1639.0 484.3L1611.3 488.3M1639.0 484.3L1609.2 493.4M1699.7 465.9L1717.5 467.3M1717.5 467.3L1700.7 477.6M1700.7 477.6L1699.7 465.9M1693.2 482.4L1699.7 465.9M1700.7 477.6L1693.2 482.4M1717.9 461.0L1699.7 465.9M1699.7 465.9L1696.4 460.3M1699.7 465.9L1655.5 480.3M1490.1 578.8L1519.2 550.8M1519.2 550.8L1510.2 581.5M1519.2 550.8L1541.2 576.1M1519.2 550.8L1532.9 546.7M1519.2 550.8L1514.7 537.9M1519.2 550.8L1487.9 577.8M1607.6 515.8L1607.0 519.1M1607.0 519.1L1598.2 524.2M1618.2 517.3L1607.0 519.1M1607.6 515.8L1618.2 517.3M1607.0 519.1L1615.8 537.3M1618.2 517.3L1642.8 516.9M1642.8 516.9L1631.2 525.5M1642.8 516.9L1636.7 505.7M1636.7 505.7L1654.2 508.6M1654.2 508.6L1642.8 516.9M1636.7 505.7L1662.1 503.1M1662.1 503.1L1654.2 508.6M1636.7 505.7L1649.9 490.6M1636.7 505.7L1609.2 493.4M1639.0 484.3L1636.7 505.7M1623.2 509.4L1642.8 516.9M1618.2 517.3L1623.2 509.4M1623.2 509.4L1636.7 505.7M1607.6 515.8L1623.2 509.4M1609.2 493.4L1623.2 509.4M1338.4 495.7L1349.8 507.6M1349.8 507.6L1338.8 501.2M1338.4 495.7L1348.3 486.1M1616.5 498.0L1579.7 474.9M1579.7 474.9L1634.5 476.4M1634.5 476.4L1616.5 498.0M1336.7 497.8L1337.1 503.1M1596.6 393.0L1593.6 406.4M1593.6 406.4L1577.8 382.0M1608.6 400.0L1593.6 406.4M1597.9 412.7L1614.5 403.4M1633.4 414.5L1597.9 412.7M1597.9 412.7L1593.6 406.4M1593.6 406.4L1614.5 403.4M1591.9 522.9L1582.2 554.1M1582.2 554.1L1576.8 516.3M1576.8 516.3L1591.9 522.9M1579.7 474.9L1618.5 436.1M1618.5 436.1L1634.5 476.4M1639.6 418.1L1618.5 436.1M1618.5 436.1L1633.4 414.5M1618.5 436.1L1597.9 412.7M1531.7 456.9L1529.9 468.6M1529.9 468.6L1516.9 472.4M1516.9 472.4L1531.7 456.9M1362.2 517.8L1385.7 490.7M1385.7 490.7L1376.4 526.1M1353.5 512.7L1351.6 483.5M1351.6 483.5L1385.7 490.7M1385.7 490.7L1353.5 512.7M1414.4 520.6L1403.6 542.0M1384.8 531.0L1414.4 520.6M1414.4 520.6L1415.6 549.0M1372.8 472.1L1359.6 476.1M1372.8 464.1L1372.8 472.1M1359.6 476.1L1385.7 490.7M1372.8 472.1L1385.7 490.7M1593.2 500.5L1591.9 522.9M1576.8 516.3L1593.2 500.5M1593.2 500.5L1616.5 498.0M1616.5 498.0L1591.9 522.9M1593.2 500.5L1579.7 474.9M1611.1 541.9L1591.9 522.9M1591.9 522.9L1629.8 527.4M1605.3 546.4L1597.4 546.2M1597.4 546.2L1611.1 541.9M1597.4 546.2L1591.9 522.9M1508.5 522.4L1528.3 534.1M1528.3 534.1L1506.2 557.4M1506.2 557.4L1508.5 522.4M1591.6 549.1L1591.9 522.9M1597.4 546.2L1591.6 549.1M1591.6 549.1L1582.2 554.1M1553.6 569.8L1582.2 554.1M1582.2 554.1L1575.7 571.2M1575.7 571.2L1553.6 569.8M1553.6 569.8L1528.3 534.1M1528.3 534.1L1582.2 554.1M1553.6 569.8L1533.8 583.9M1533.8 583.9L1506.2 557.4M1506.2 557.4L1553.6 569.8M1461.9 506.3L1475.7 545.5M1475.7 545.5L1449.2 513.1M1449.2 513.1L1461.9 506.3M1508.5 522.4L1475.7 545.5M1461.9 506.3L1508.5 522.4M1506.2 557.4L1475.7 545.5M1529.9 468.6L1529.5 483.7M1529.5 483.7L1516.9 472.4M1496.7 485.8L1461.9 506.3M1461.9 506.3L1482.3 484.8M1482.3 484.8L1496.7 485.8M1529.5 483.7L1496.7 485.8M1496.7 485.8L1516.9 472.4M1591.9 522.9L1630.6 509.4M1630.6 509.4L1629.8 527.4M1616.5 498.0L1630.6 509.4M1678.4 469.8L1657.2 481.6M1657.2 481.6L1634.5 476.4M1634.5 476.4L1678.4 469.8M1618.5 436.1L1548.1 456.9M1548.1 456.9L1597.9 412.7M1579.7 474.9L1548.1 456.9M1531.7 456.9L1548.1 456.9M1548.1 456.9L1529.9 468.6M1376.4 526.1L1412.1 511.7M1412.1 511.7L1384.8 531.0M1412.1 511.7L1414.4 520.6M1385.7 490.7L1412.1 511.7M1385.7 490.7L1413.7 491.6M1413.7 491.6L1412.1 511.7M1449.2 513.1L1412.1 511.7M1413.7 491.6L1449.2 513.1M1449.2 513.1L1414.4 520.6M1385.7 490.7L1408.2 458.1M1408.2 458.1L1413.7 491.6M1372.8 472.1L1408.2 458.1M1597.9 412.7L1531.4 411.4M1531.4 411.4L1593.6 406.4M1520.4 524.3L1528.3 534.1M1508.5 522.4L1520.4 524.3M1582.2 554.1L1593.7 556.0M1591.6 549.1L1593.7 556.0M1593.7 556.0L1597.4 546.2M1546.6 597.5L1533.8 583.9M1533.8 583.9L1554.6 590.1M1522.6 611.5L1531.7 611.8M1506.6 602.2L1533.8 583.9M1533.8 583.9L1522.6 611.5M1522.6 611.5L1546.6 597.5M1533.8 583.9L1492.3 566.3M1492.3 566.3L1506.2 557.4M1492.3 566.3L1475.7 545.5M1567.8 578.1L1553.6 569.8M1519.8 504.7L1508.5 522.4M1461.9 506.3L1519.8 504.7M1496.7 485.8L1519.8 504.7M1529.5 483.7L1519.8 504.7M1519.8 504.7L1520.4 524.3M1496.7 485.8L1493.8 480.9M1493.8 480.9L1516.9 472.4M1482.3 484.8L1493.8 480.9M1630.6 509.4L1636.0 522.8M1630.6 509.4L1649.4 513.0M1652.9 425.9L1618.5 436.1M1667.4 434.4L1618.5 436.1M1675.9 457.1L1667.4 434.4M1682.1 443.0L1675.9 457.1M1675.9 457.1L1678.4 469.8M1634.5 476.4L1675.9 457.1M1618.5 436.1L1675.9 457.1M1698.0 480.4L1678.4 469.8M1678.4 469.8L1715.1 469.8M1691.7 484.4L1678.4 469.8M1691.7 484.4L1657.2 481.6M1548.1 456.9L1562.3 472.9M1562.3 472.9L1529.9 468.6M1579.7 474.9L1562.3 472.9M1562.3 472.9L1529.5 483.7M1410.3 432.4L1429.5 431.6M1429.5 431.6L1423.0 440.2M1423.0 440.2L1410.3 432.4M1423.0 440.2L1398.7 442.0M1408.2 458.1L1398.7 442.0M1423.0 440.2L1408.2 458.1M1540.5 386.1L1569.4 377.1M1577.8 382.0L1540.5 386.1M1540.5 386.1L1555.2 368.8M1540.5 386.1L1541.0 393.1M1541.0 393.1L1507.6 399.5M1507.6 399.5L1540.5 386.1M1577.8 382.0L1541.0 393.1M1593.6 406.4L1541.0 393.1M1531.4 411.4L1541.0 393.1M1531.4 411.4L1528.9 430.6M1528.9 430.6L1511.7 435.7M1511.7 435.7L1531.4 411.4M1528.9 430.6L1512.1 441.4M1512.1 441.4L1511.7 435.7M1548.1 456.9L1528.9 430.6M1528.9 430.6L1597.9 412.7M1531.7 456.9L1528.9 430.6M1531.7 456.9L1512.1 441.4M1530.1 354.1L1520.1 355.8M1496.7 370.4L1540.5 386.1M1507.6 399.5L1496.7 370.4M1503.0 366.4L1540.5 386.1M1471.9 414.8L1489.4 407.4M1489.4 407.4L1511.7 435.7M1511.7 435.7L1471.9 414.8M1492.3 566.3L1489.1 592.0M1474.4 583.4L1492.3 566.3M1533.8 583.9L1489.1 592.0M1470.7 567.5L1492.3 566.3M1474.4 583.4L1470.7 567.5M1459.9 574.9L1470.7 567.5M1459.9 574.9L1462.3 569.2M1462.3 569.2L1470.7 567.5M1464.8 553.0L1470.7 567.5M1462.3 569.2L1464.8 553.0M1470.7 567.5L1475.7 545.5M1464.8 553.0L1475.7 545.5M1551.5 576.6L1567.8 578.1M1554.6 590.1L1551.5 576.6M1551.5 576.6L1553.6 569.8M1533.8 583.9L1551.5 576.6M1454.5 563.5L1464.8 553.0M1462.3 569.2L1454.5 563.5M1421.5 552.4L1448.2 548.1M1448.2 548.1L1440.4 563.5M1415.6 549.0L1448.2 548.1M1475.7 545.5L1448.2 548.1M1448.2 548.1L1449.2 513.1M1464.8 553.0L1448.2 548.1M1448.2 548.1L1414.4 520.6M1520.4 524.3L1550.9 517.8M1550.9 517.8L1528.3 534.1M1582.2 554.1L1550.9 517.8M1550.9 517.8L1576.8 516.3M1550.9 517.8L1593.2 500.5M1715.1 469.8L1715.6 462.5M1715.6 462.5L1678.4 469.8M1678.4 469.8L1699.6 453.2M1664.3 502.6L1659.9 488.8M1659.9 488.8L1679.5 492.3M1659.9 488.8L1691.7 484.4M1659.9 488.8L1657.2 481.6M1634.3 500.3L1664.3 502.6M1649.4 513.0L1634.3 500.3M1630.6 509.4L1634.3 500.3M1634.3 500.3L1659.9 488.8M1616.5 498.0L1634.3 500.3M1634.5 476.4L1634.3 500.3M1657.2 481.6L1634.3 500.3M1593.2 500.5L1566.4 474.5M1566.4 474.5L1579.7 474.9M1566.4 474.5L1562.3 472.9M1566.4 474.5L1529.5 483.7M1429.5 431.6L1434.8 413.4M1434.8 413.4L1471.9 414.8M1471.9 414.8L1429.5 431.6M1460.1 406.8L1434.8 413.4M1441.0 408.8L1460.1 406.8M1460.1 406.8L1471.9 414.8M1408.2 458.1L1380.7 457.2M1380.7 457.2L1372.8 472.1M1408.2 458.1L1434.3 476.5M1434.3 476.5L1413.7 491.6M1423.0 440.2L1434.3 476.5M1441.2 476.2L1434.3 476.5M1423.0 440.2L1441.2 476.2M1451.0 481.3L1449.2 513.1M1413.7 491.6L1451.0 481.3M1434.3 476.5L1451.0 481.3M1441.2 476.2L1451.0 481.3M1451.0 481.3L1461.9 506.3M1465.5 480.6L1451.0 481.3M1441.2 476.2L1465.5 480.6M1429.5 431.6L1494.0 457.7M1494.0 457.7L1423.0 440.2M1494.0 457.7L1441.2 476.2M1471.9 414.8L1494.0 457.7M1494.0 457.7L1465.5 480.6M1511.7 435.7L1494.0 457.7M1512.1 441.4L1494.0 457.7M1494.0 457.7L1531.7 456.9M1516.9 472.4L1494.0 457.7M1541.0 393.1L1510.3 403.6M1510.3 403.6L1507.6 399.5M1531.4 411.4L1510.3 403.6M1510.3 403.6L1489.4 407.4M1489.4 407.4L1507.6 399.5M1511.7 435.7L1510.3 403.6M1546.5 363.7L1520.1 355.8M1546.5 363.7L1503.0 366.4M1540.5 386.1L1546.5 363.7M1469.3 388.6L1465.5 397.0M1465.5 397.0L1454.4 399.0M1454.4 399.0L1460.1 406.8M1465.5 397.0L1460.1 406.8M1483.4 388.8L1469.3 388.6M1484.5 378.3L1483.4 388.8M1496.7 370.4L1483.4 388.8M1507.6 399.5L1483.4 388.8M1489.4 407.4L1483.4 388.8M1483.4 388.8L1465.5 397.0M1472.0 408.0L1460.1 406.8M1465.5 397.0L1472.0 408.0M1483.4 388.8L1472.0 408.0M1489.4 407.4L1472.0 408.0M1472.0 408.0L1471.9 414.8M1500.6 598.7L1533.8 583.9M1446.6 567.1L1462.3 569.2M1446.6 567.1L1454.5 563.5M1448.2 548.1L1450.7 560.5M1450.7 560.5L1440.4 563.5M1450.7 560.5L1446.6 567.1M1450.7 560.5L1454.5 563.5M1450.7 560.5L1464.8 553.0M1519.8 504.7L1535.7 505.5M1535.7 505.5L1520.4 524.3M1535.7 505.5L1550.9 517.8M1529.5 483.7L1535.7 505.5M1566.4 474.5L1535.7 505.5M1535.7 505.5L1593.2 500.5M1693.6 449.7L1683.4 456.2M1683.4 456.2L1682.1 443.0M1683.4 456.2L1675.9 457.1M1699.6 453.2L1683.4 456.2M1678.4 469.8L1683.4 456.2M1416.1 427.9L1429.5 431.6M1451.0 481.3L1465.2 483.2M1465.2 483.2L1461.9 506.3M1465.5 480.6L1465.2 483.2M1465.2 483.2L1482.3 484.8M1465.5 480.6L1482.3 484.8M1494.0 457.7L1492.5 469.0M1492.5 469.0L1465.5 480.6M1492.5 469.0L1493.8 480.9M1482.3 484.8L1492.5 469.0M1492.5 469.0L1516.9 472.4M1353.5 512.7L1336.7 497.8M1559.4 504.1L1603.0 532.3M1603.0 532.3L1546.4 526.5M1546.4 526.5L1559.4 504.1M1603.0 532.3L1566.7 551.8M1566.7 551.8L1546.4 526.5M1566.7 551.8L1541.7 561.1M1541.7 561.1L1546.4 526.5M1486.9 526.1L1408.1 539.5M1408.1 539.5L1448.7 499.0M1448.7 499.0L1486.9 526.1M1522.2 614.2L1534.3 609.8M1507.8 605.8L1534.3 609.8M1507.8 605.8L1541.8 602.7M1436.6 564.2L1467.9 558.3M1467.9 558.3L1449.4 571.6M1467.9 558.3L1456.6 575.8M1518.9 508.6L1559.4 504.1M1546.4 526.5L1518.9 508.6M1518.9 508.6L1551.2 473.1M1551.2 473.1L1559.4 504.1M1431.2 483.3L1429.6 482.8M1429.6 482.8L1438.8 457.7M1438.8 457.7L1431.2 483.3M1431.2 483.3L1448.7 499.0M1448.7 499.0L1406.9 505.6M1406.9 505.6L1431.2 483.3M1429.6 482.8L1417.8 468.5M1417.8 468.5L1438.8 457.7M1674.1 441.2L1685.4 456.4M1685.4 456.4L1661.9 460.6M1661.9 460.6L1674.1 441.2M1565.5 459.0L1610.2 432.8M1610.2 432.8L1619.0 451.4M1619.0 451.4L1565.5 459.0M1654.8 446.7L1674.1 441.2M1661.9 460.6L1654.8 446.7M1619.0 451.4L1654.8 446.7M1661.9 460.6L1619.0 451.4M1467.4 458.6L1438.8 457.7M1438.8 457.7L1447.6 436.7M1447.6 436.7L1467.4 458.6M1476.7 433.0L1467.4 458.6M1447.6 436.7L1476.7 433.0M1467.4 458.6L1431.2 483.3M1558.4 463.7L1552.6 458.7M1552.6 458.7L1565.5 459.0M1565.5 459.0L1558.4 463.7M1505.6 459.9L1552.6 458.7M1552.6 458.7L1551.2 473.1M1551.2 473.1L1505.6 459.9M1558.4 463.7L1551.2 473.1M1504.4 366.6L1503.1 390.5M1503.1 390.5L1495.2 372.4M1504.4 366.6L1544.9 378.4M1544.9 378.4L1503.1 390.5M1533.1 358.7L1519.8 357.1M1533.1 358.7L1504.4 366.6M1465.5 392.2L1474.3 403.7M1474.3 403.7L1451.1 402.3M1452.0 424.8L1476.7 433.0M1447.6 436.7L1452.0 424.8M1452.0 424.8L1492.2 415.4M1492.2 415.4L1476.7 433.0M1452.0 424.8L1474.3 403.7M1474.3 403.7L1492.2 415.4M1419.9 425.7L1452.0 424.8M1447.6 436.7L1419.9 425.7M1615.7 502.3L1603.0 532.3M1559.4 504.1L1615.7 502.3M1615.7 502.3L1619.0 451.4M1661.9 460.6L1615.7 502.3M1541.7 561.1L1569.3 577.5M1556.9 588.6L1541.7 561.1M1566.7 551.8L1569.3 577.5M1603.0 532.3L1601.8 550.1M1601.8 550.1L1566.7 551.8M1588.9 560.7L1566.7 551.8M1486.9 526.1L1508.5 534.5M1508.5 534.5L1467.9 558.3M1467.9 558.3L1486.9 526.1M1518.9 508.6L1508.5 534.5M1486.9 526.1L1518.9 508.6M1408.1 539.5L1398.7 542.0M1390.3 537.1L1408.1 539.5M1425.4 557.6L1408.1 539.5M1486.9 526.1L1425.4 557.6M1425.4 557.6L1467.9 558.3M1470.7 584.1L1480.6 582.1M1480.6 582.1L1481.1 590.2M1467.9 558.3L1470.7 584.1M1467.9 558.3L1480.6 582.1M1480.6 582.1L1496.9 590.4M1496.9 590.4L1481.1 590.2M1339.3 495.8L1340.1 507.7M1339.3 495.8L1357.0 503.7M1357.0 503.7L1340.1 507.7M1346.8 488.7L1357.0 503.7M1498.5 499.0L1486.9 526.1M1448.7 499.0L1498.5 499.0M1498.5 499.0L1518.9 508.6M1498.5 499.0L1505.6 459.9M1551.2 473.1L1498.5 499.0M1410.2 479.3L1417.8 468.5M1429.6 482.8L1410.2 479.3M1692.1 451.7L1685.4 456.4M1700.8 456.8L1685.4 456.4M1699.4 480.6L1685.4 456.4M1700.8 456.8L1699.4 480.6M1699.4 480.6L1661.9 460.6M1637.1 442.3L1654.8 446.7M1619.0 451.4L1637.1 442.3M1637.1 442.3L1642.4 422.6M1649.6 426.8L1637.1 442.3M1610.2 432.8L1601.3 413.4M1601.3 413.4L1629.6 415.2M1629.6 415.2L1610.2 432.8M1654.8 446.7L1663.7 435.1M1663.7 435.1L1637.1 442.3M1481.8 454.7L1467.4 458.6M1476.7 433.0L1481.8 454.7M1557.8 373.2L1544.9 378.4M1544.9 378.4L1541.4 363.6M1541.4 363.6L1504.4 366.6M1535.9 402.5L1503.1 390.5M1544.9 378.4L1535.9 402.5M1486.9 406.1L1492.2 415.4M1474.3 403.7L1486.9 406.1M1431.0 417.1L1452.0 424.8M1572.0 494.0L1559.4 504.1M1551.2 473.1L1572.0 494.0M1572.0 494.0L1615.7 502.3M1558.4 463.7L1572.0 494.0M1565.5 459.0L1572.0 494.0M1619.0 451.4L1572.0 494.0M1580.9 567.5L1566.7 551.8M1614.9 539.7L1603.0 532.3M1603.0 532.3L1626.0 531.1M1541.7 561.1L1517.5 533.9M1517.5 533.9L1546.4 526.5M1517.5 533.9L1518.9 508.6M1517.5 533.9L1508.5 534.5M1408.1 539.5L1412.0 549.8M1496.9 590.4L1499.1 600.7M1496.9 590.4L1507.8 605.8M1503.8 564.2L1496.9 590.4M1480.6 582.1L1503.8 564.2M1467.9 558.3L1503.8 564.2M1508.5 534.5L1503.8 564.2M1357.0 503.7L1348.4 512.6M1357.0 503.7L1364.8 522.2M1374.5 493.7L1357.0 503.7M1346.8 488.7L1374.5 493.7M1378.1 529.9L1385.6 528.9M1385.6 528.9L1390.3 537.1M1364.8 522.2L1385.6 528.9M1403.7 518.0L1408.1 539.5M1390.3 537.1L1403.7 518.0M1385.6 528.9L1403.7 518.0M1448.7 499.0L1403.7 518.0M1403.7 518.0L1406.9 505.6M1479.9 471.2L1498.5 499.0M1448.7 499.0L1479.9 471.2M1431.2 483.3L1479.9 471.2M1467.4 458.6L1479.9 471.2M1479.9 471.2L1505.6 459.9M1479.9 471.2L1481.8 454.7M1481.8 454.7L1505.6 459.9M1406.9 488.7L1410.2 479.3M1429.6 482.8L1406.9 488.7M1399.9 499.3L1406.9 488.7M1406.9 488.7L1406.9 505.6M1406.9 505.6L1399.9 499.3M1406.9 488.7L1431.2 483.3M1447.6 436.7L1406.8 436.1M1438.8 457.7L1406.8 436.1M1417.8 468.5L1406.8 436.1M1374.5 493.7L1361.9 474.6M1361.9 474.6L1382.6 489.2M1382.6 489.2L1374.5 493.7M1671.3 498.8L1661.9 460.6M1661.9 460.6L1690.2 486.4M1610.2 432.8L1615.5 432.7M1615.5 432.7L1619.0 451.4M1615.5 432.7L1637.1 442.3M1615.5 432.7L1642.4 422.6M1615.5 432.7L1629.6 415.2M1591.7 393.0L1575.6 409.4M1575.6 409.4L1583.3 388.1M1575.6 409.4L1554.1 395.6M1554.1 395.6L1583.3 388.1M1605.0 400.8L1575.6 409.4M1605.0 400.8L1601.3 413.4M1601.3 413.4L1575.6 409.4M1575.6 409.4L1535.9 402.5M1535.9 402.5L1554.1 395.6M1505.3 454.0L1481.8 454.7M1476.7 433.0L1505.3 454.0M1505.3 454.0L1505.6 459.9M1505.3 454.0L1552.6 458.7M1555.2 388.9L1571.1 380.9M1583.3 388.1L1555.2 388.9M1554.1 395.6L1555.2 388.9M1555.2 388.9L1535.9 402.5M1544.9 378.4L1555.2 388.9M1508.8 410.2L1535.9 402.5M1535.9 402.5L1519.4 413.9M1519.4 413.9L1508.8 410.2M1508.8 410.2L1503.1 390.5M1492.2 415.4L1508.8 410.2M1519.4 413.9L1492.2 415.4M1486.9 406.1L1508.8 410.2M1508.8 410.2L1492.3 394.9M1492.3 394.9L1503.1 390.5M1486.9 406.1L1492.3 394.9M1443.8 407.6L1452.0 424.8M1474.3 403.7L1443.8 407.6M1603.0 532.3L1619.5 509.0M1619.5 509.0L1626.0 531.1M1615.7 502.3L1619.5 509.0M1503.8 564.2L1525.7 565.9M1525.7 565.9L1496.9 590.4M1541.8 602.7L1525.7 565.9M1525.7 565.9L1556.9 588.6M1525.7 565.9L1541.7 561.1M1507.8 605.8L1525.7 565.9M1406.9 488.7L1384.7 496.3M1384.7 496.3L1382.6 489.2M1382.6 489.2L1406.9 488.7M1399.9 499.3L1384.7 496.3M1357.0 503.7L1384.7 496.3M1384.7 496.3L1364.8 522.2M1374.5 493.7L1384.7 496.3M1410.2 479.3L1394.1 461.2M1394.1 461.2L1417.8 468.5M1714.8 471.1L1715.2 465.2M1601.3 413.4L1618.4 408.6M1535.9 402.5L1567.1 421.1M1567.1 421.1L1519.4 413.9M1575.6 409.4L1567.1 421.1M1571.1 380.9L1554.3 384.1M1554.3 384.1L1557.8 373.2M1555.2 388.9L1554.3 384.1M1554.3 384.1L1544.9 378.4M1492.3 394.9L1501.6 390.5M1501.6 390.5L1503.1 390.5M1492.3 394.9L1476.3 384.8M1476.3 384.8L1501.6 390.5M1495.2 372.4L1501.6 390.5M1476.3 384.8L1477.4 398.9M1477.4 398.9L1465.5 392.2M1492.3 394.9L1477.4 398.9M1477.4 398.9L1474.3 403.7M1477.4 398.9L1486.9 406.1M1619.5 509.0L1638.8 521.6M1619.5 509.0L1646.1 516.3M1619.5 509.0L1645.2 502.9M1645.2 502.9L1646.1 516.3M1615.7 502.3L1645.2 502.9M1671.3 498.8L1645.2 502.9M1645.2 502.9L1661.9 460.6M1518.4 562.2L1517.5 533.9M1541.7 561.1L1518.4 562.2M1525.7 565.9L1518.4 562.2M1503.8 564.2L1518.4 562.2M1518.4 562.2L1508.5 534.5M1381.4 490.3L1374.5 493.7M1382.6 489.2L1381.4 490.3M1384.7 496.3L1381.4 490.3M1402.7 506.3L1403.7 518.0M1385.6 528.9L1402.7 506.3M1364.8 522.2L1402.7 506.3M1384.7 496.3L1402.7 506.3M1399.9 499.3L1402.7 506.3M1406.9 505.6L1402.7 506.3M1393.9 446.7L1394.1 461.2M1394.1 461.2L1385.9 453.5M1417.8 468.5L1393.9 446.7M1394.1 461.2L1374.3 463.5M1567.1 421.1L1528.7 431.0M1528.7 431.0L1519.4 413.9M1528.7 431.0L1505.3 454.0M1476.7 433.0L1528.7 431.0M1528.7 431.0L1552.6 458.7M1528.7 431.0L1492.2 415.4M1660.5 506.2L1645.2 502.9M1374.3 463.5L1387.0 476.6M1387.0 476.6L1361.9 474.6M1387.0 476.6L1382.6 489.2M1394.1 461.2L1387.0 476.6M1410.2 479.3L1387.0 476.6M1387.0 476.6L1406.9 488.7M1528.7 431.0L1568.6 423.1M1568.6 423.1L1552.6 458.7M1567.1 421.1L1568.6 423.1M1568.6 423.1L1565.5 459.0M1568.6 423.1L1610.2 432.8M1568.6 423.1L1601.3 413.4M1568.6 423.1L1575.6 409.4M1714.8 471.1L1700.8 456.8M1601.1 419.3L1573.1 437.2M1573.1 437.2L1578.1 419.8M1578.1 419.8L1601.1 419.3M1573.1 437.2L1525.9 426.4M1525.9 426.4L1578.1 419.8M1529.7 359.6L1514.6 361.3M1336.1 499.5L1336.7 508.6M1379.8 459.4L1409.9 453.3M1409.9 453.3L1384.0 471.2M1384.0 471.2L1379.8 459.4M1517.3 614.2L1531.1 613.5M1525.9 426.4L1579.7 410.0M1579.7 410.0L1578.1 419.8M1579.7 410.0L1601.1 419.3M1409.9 453.3L1418.8 475.9M1418.8 475.9L1384.0 471.2M1592.5 542.0L1551.6 522.2M1551.6 522.2L1560.3 520.5M1560.3 520.5L1592.5 542.0M1498.5 489.9L1497.5 481.0M1497.5 481.0L1514.2 479.4M1514.2 479.4L1498.5 489.9M1498.5 489.9L1492.2 480.2M1492.2 480.2L1497.5 481.0M1516.8 496.3L1498.5 489.9M1514.2 479.4L1516.8 496.3M1516.8 496.3L1533.0 526.8M1533.0 526.8L1478.9 508.3M1478.9 508.3L1516.8 496.3M1479.1 507.9L1516.8 496.3M1478.9 508.3L1479.1 507.9M1573.1 437.2L1523.1 443.0M1523.1 443.0L1525.9 426.4M1523.1 443.0L1507.1 430.9M1507.1 430.9L1525.9 426.4M1523.1 443.0L1473.0 455.7M1473.0 455.7L1507.1 430.9M1497.5 481.0L1523.1 443.0M1523.1 443.0L1514.2 479.4M1523.1 443.0L1492.2 480.2M1492.2 480.2L1473.0 455.7M1384.0 471.2L1366.2 471.3M1506.1 580.5L1520.6 575.8M1520.6 575.8L1508.5 609.1M1508.5 609.1L1506.1 580.5M1579.7 410.0L1593.9 397.1M1602.8 402.4L1579.7 410.0M1395.9 445.7L1409.9 453.3M1453.0 454.5L1418.8 475.9M1409.9 453.3L1453.0 454.5M1415.1 430.3L1453.0 454.5M1409.9 453.3L1415.1 430.3M1413.7 491.6L1387.1 501.0M1387.1 501.0L1384.0 471.2M1384.0 471.2L1413.7 491.6M1610.1 544.3L1592.5 542.0M1592.5 542.0L1623.8 533.7M1579.8 563.2L1551.6 522.2M1592.5 542.0L1579.8 563.2M1579.8 563.2L1533.0 526.8M1533.0 526.8L1551.6 522.2M1520.6 575.8L1579.8 563.2M1579.8 563.2L1574.8 573.4M1574.8 573.4L1520.6 575.8M1520.6 575.8L1533.0 526.8M1555.7 513.5L1551.6 522.2M1533.0 526.8L1555.7 513.5M1555.7 513.5L1516.8 496.3M1516.8 496.3L1542.0 489.3M1542.0 489.3L1555.7 513.5M1555.7 513.5L1560.3 520.5M1565.2 477.8L1555.7 513.5M1542.0 489.3L1565.2 477.8M1536.3 489.1L1516.8 496.3M1514.2 479.4L1536.3 489.1M1536.3 489.1L1542.0 489.3M1565.2 477.8L1536.3 489.1M1514.2 479.4L1565.2 477.8M1516.8 496.3L1493.6 496.5M1493.6 496.5L1498.5 489.9M1479.1 507.9L1493.6 496.5M1493.6 496.5L1492.2 480.2M1604.3 412.5L1613.6 408.7M1627.4 416.7L1604.3 412.5M1601.1 419.3L1604.3 412.5M1627.4 416.7L1601.1 419.3M1604.3 412.5L1602.8 402.4M1604.3 412.5L1579.7 410.0M1593.6 464.9L1641.0 452.5M1641.0 452.5L1617.0 475.6M1617.0 475.6L1593.6 464.9M1641.0 452.5L1573.1 437.2M1601.1 419.3L1641.0 452.5M1593.6 464.9L1573.1 437.2M1682.6 463.9L1641.0 452.5M1641.0 452.5L1676.1 445.2M1676.1 445.2L1682.6 463.9M1593.6 464.9L1564.0 450.0M1564.0 450.0L1573.1 437.2M1564.0 450.0L1523.1 443.0M1564.0 450.0L1514.2 479.4M1564.0 450.0L1565.2 477.8M1564.0 450.0L1587.3 470.9M1587.3 470.9L1565.2 477.8M1593.6 464.9L1587.3 470.9M1530.0 373.3L1556.7 375.4M1556.7 375.4L1517.9 388.9M1517.9 388.9L1530.0 373.3M1514.6 361.3L1530.0 373.3M1530.0 373.3L1505.2 367.1M1529.7 359.6L1530.0 373.3M1593.9 397.1L1568.5 388.3M1568.5 388.3L1577.0 387.2M1579.7 410.0L1568.5 388.3M1517.9 388.9L1568.5 388.3M1568.5 388.3L1525.9 426.4M1525.9 426.4L1517.9 388.9M1384.0 536.2L1411.1 512.5M1411.1 512.5L1400.9 546.1M1350.8 516.9L1387.1 501.0M1387.1 501.0L1363.7 524.4M1350.8 516.9L1348.9 487.3M1348.9 487.3L1387.1 501.0M1384.0 536.2L1389.5 514.0M1389.5 514.0L1411.1 512.5M1389.5 514.0L1399.6 505.2M1399.6 505.2L1411.1 512.5M1389.5 514.0L1363.7 524.4M1387.1 501.0L1389.5 514.0M1387.1 501.0L1399.6 505.2M1384.0 471.2L1360.7 476.3M1387.1 501.0L1360.7 476.3M1543.9 601.3L1520.6 575.8M1520.6 575.8L1555.7 590.3M1543.9 601.3L1508.5 609.1M1543.9 601.3L1517.3 614.2M1561.2 585.3L1520.6 575.8M1506.1 580.5L1491.4 599.1M1483.1 594.2L1506.1 580.5M1492.4 430.9L1507.1 430.9M1473.0 455.7L1492.4 430.9M1409.9 453.3L1404.6 438.7M1453.0 454.5L1460.4 471.6M1460.4 471.6L1418.8 475.9M1460.4 471.6L1413.7 491.6M1413.7 491.6L1418.8 475.9M1492.2 480.2L1460.4 471.6M1460.4 471.6L1473.0 455.7M1453.0 454.5L1473.0 455.7M1456.8 426.7L1415.1 430.3M1428.8 419.7L1456.8 426.7M1456.8 426.7L1453.0 454.5M1492.4 430.9L1456.8 426.7M1456.8 426.7L1468.8 419.5M1468.8 419.5L1492.4 430.9M1456.8 426.7L1473.0 455.7M1418.8 475.9L1417.1 477.6M1417.1 477.6L1384.0 471.2M1417.1 477.6L1413.7 491.6M1407.7 498.8L1399.6 505.2M1387.1 501.0L1407.7 498.8M1413.7 491.6L1407.7 498.8M1407.7 498.8L1411.1 512.5M1407.7 498.8L1417.9 507.9M1417.9 507.9L1411.1 512.5M1413.7 491.6L1417.9 507.9M1595.0 548.7L1610.1 544.3M1599.6 552.7L1595.0 548.7M1595.0 548.7L1592.5 542.0M1595.0 548.7L1579.8 563.2M1579.8 563.2L1590.9 559.7M1590.9 559.7L1595.0 548.7M1592.5 542.0L1607.9 502.8M1607.9 502.8L1623.8 533.7M1560.3 520.5L1607.9 502.8M1555.7 513.5L1607.9 502.8M1565.2 477.8L1607.9 502.8M1701.5 460.1L1696.4 477.7M1696.4 477.7L1682.6 463.9M1682.6 463.9L1701.5 460.1M1647.5 497.7L1607.9 502.8M1607.9 502.8L1617.0 475.6M1617.0 475.6L1647.5 497.7M1647.5 497.7L1631.4 506.6M1631.4 506.6L1607.9 502.8M1609.1 476.2L1593.6 464.9M1617.0 475.6L1609.1 476.2M1609.1 476.2L1587.3 470.9M1607.9 502.8L1609.1 476.2M1609.1 476.2L1565.2 477.8M1543.8 367.9L1530.0 373.3M1530.0 373.3L1516.3 383.8M1516.3 383.8L1505.2 367.1M1517.9 388.9L1516.3 383.8M1516.3 383.8L1487.1 378.6M1568.5 388.3L1562.6 378.8M1562.6 378.8L1517.9 388.9M1369.6 527.8L1389.5 514.0M1479.3 584.6L1506.1 580.5M1483.1 594.2L1479.3 584.6M1484.3 402.7L1492.4 430.9M1468.8 419.5L1484.3 402.7M1484.3 402.7L1507.1 430.9M1484.3 402.7L1517.9 388.9M1525.9 426.4L1484.3 402.7M1474.2 508.7L1479.1 507.9M1478.9 508.3L1474.2 508.7M1474.2 508.7L1493.6 496.5M1460.4 471.6L1457.0 503.9M1457.0 503.9L1413.7 491.6M1492.2 480.2L1457.0 503.9M1493.6 496.5L1457.0 503.9M1474.2 508.7L1457.0 503.9M1607.9 502.8L1633.6 526.3M1696.4 477.7L1667.3 480.3M1667.3 480.3L1682.6 463.9M1647.5 497.7L1667.3 480.3M1667.3 480.3L1673.4 498.3M1673.4 498.3L1647.5 497.7M1617.0 475.6L1667.3 480.3M1641.0 452.5L1667.3 480.3M1684.4 450.1L1682.6 463.9M1710.3 465.2L1696.4 477.7M1659.3 507.9L1647.5 497.7M1653.7 432.1L1641.0 452.5M1641.0 452.5L1637.2 422.5M1637.2 422.5L1601.1 419.3M1641.0 452.5L1662.5 437.3M1469.5 586.3L1479.3 584.6M1460.7 581.1L1479.3 584.6M1520.6 575.8L1467.3 539.6M1467.3 539.6L1533.0 526.8M1506.1 580.5L1467.3 539.6M1464.3 393.9L1484.3 402.7M1484.3 402.7L1455.3 400.2M1438.6 412.3L1458.3 418.6M1458.3 418.6L1428.8 419.7M1458.3 418.6L1456.8 426.7M1455.3 400.2L1458.3 418.6M1458.3 418.6L1484.3 402.7M1468.8 419.5L1458.3 418.6M1457.0 503.9L1438.0 509.0M1438.0 509.0L1413.7 491.6M1633.6 526.3L1636.1 511.7M1636.1 511.7L1650.3 514.2M1647.5 497.7L1636.1 511.7M1636.1 511.7L1631.4 506.6M1636.1 511.7L1607.9 502.8M1636.1 511.7L1659.3 507.9M1700.2 481.1L1696.4 477.7M1696.4 477.7L1709.6 475.3M1709.6 475.3L1710.3 465.2M1667.3 480.3L1682.1 492.6M1682.1 492.6L1696.4 477.7M1458.8 552.7L1479.3 584.6M1460.7 581.1L1458.8 552.7M1444.2 571.5L1458.8 552.7M1458.8 552.7L1506.1 580.5M1458.8 552.7L1467.3 539.6M1434.4 565.7L1458.8 552.7M1533.0 526.8L1468.2 528.9M1468.2 528.9L1478.9 508.3M1467.3 539.6L1468.2 528.9M1468.2 528.9L1474.2 508.7M1484.7 399.7L1464.3 393.9M1478.4 384.3L1484.7 399.7M1484.7 399.7L1484.3 402.7M1484.7 399.7L1517.9 388.9M1484.7 399.7L1516.3 383.8M1487.1 378.6L1484.7 399.7M1456.8 426.7L1460.7 420.9M1460.7 420.9L1468.8 419.5M1460.7 420.9L1458.3 418.6M1417.9 507.9L1429.4 509.8M1429.4 509.8L1411.1 512.5M1413.7 491.6L1429.4 509.8M1438.0 509.0L1429.4 509.8M1400.9 546.1L1429.4 509.8M1429.4 509.8L1409.8 551.4M1420.6 557.7L1451.7 546.1M1451.7 546.1L1434.4 565.7M1451.7 546.1L1458.8 552.7M1451.7 546.1L1467.3 539.6M1452.3 509.0L1438.0 509.0M1457.0 503.9L1452.3 509.0M1474.2 508.7L1452.3 509.0M1468.2 528.9L1452.3 509.0M1452.3 509.0L1450.7 540.9M1450.7 540.9L1438.0 509.0M1468.2 528.9L1450.7 540.9M1450.7 540.9L1429.4 509.8M1450.7 540.9L1409.8 551.4M1450.7 540.9L1420.6 557.7M1450.7 540.9L1451.7 546.1M1451.7 546.1L1464.3 538.5M1464.3 538.5L1467.3 539.6M1450.7 540.9L1464.3 538.5M1464.3 538.5L1468.2 528.9M1350.8 516.9L1336.1 499.5" stroke="#000" stroke-width="1" fill="none" shape-rendering="crispEdges"/></g><path d="M1335 499 Q1422 412 1528 350 L1725 463 Q1618 526 1530 613 Z" fill="none" stroke="#000" stroke-width="1.2"/></svg>
<svg class="s" style="left:0;top:0" width="2556" height="1020" viewBox="0 0 2556 1020"><defs><linearGradient id="gy" x1="0" x2="1"><stop offset="0" stop-color="#005a00"/><stop offset="0.5" stop-color="#1a9a1a"/><stop offset="1" stop-color="#004a00"/></linearGradient><linearGradient id="gx" x1="0" y1="0" x2="1" y2="1"><stop offset="0" stop-color="#ff3030"/><stop offset="0.6" stop-color="#c00000"/><stop offset="1" stop-color="#500000"/></linearGradient><linearGradient id="gz" x1="1" y1="0" x2="0" y2="1"><stop offset="0" stop-color="#2020ff"/><stop offset="0.6" stop-color="#0000c8"/><stop offset="1" stop-color="#000060"/></linearGradient><radialGradient id="sph" cx="0.4" cy="0.35" r="0.7"><stop offset="0" stop-color="#60ffff"/><stop offset="0.6" stop-color="#10c8c8"/><stop offset="1" stop-color="#088888"/></radialGradient></defs><path d="M2425 688 V625" stroke="#0a7a0a" stroke-width="6"/><path d="M2425 600 L2436 623 L2425 628 L2414 623 Z" fill="url(#gy)"/><path d="M2425 688 L2486 720" stroke="#b00000" stroke-width="6"/><path d="M2501 732 L2477 732 L2476 716 L2486 711 Z" fill="url(#gx)"/><path d="M2425 688 L2364 720" stroke="#0000e0" stroke-width="6"/><path d="M2349 732 L2373 732 L2374 716 L2364 711 Z" fill="url(#gz)"/><circle cx="2425" cy="688" r="10.5" fill="url(#sph)"/></svg>
<div class="t" style="left:2424px;top:578.69px;font-size:11px;color:#00a000;">Y</div>
<div class="t" style="left:2336px;top:730.69px;font-size:11px;color:#0000e0;">Z</div>
<div class="t" style="left:2512px;top:730.69px;font-size:11px;color:#e00000;">X</div>
<div class="r" style="left:1247px;top:759px;width:559px;height:13px;background:#fff;border:1px solid #000;box-sizing:border-box;"></div>
<div class="r" style="left:1247px;top:759px;width:140px;height:13px;background:#000;"></div>
<div class="r" style="left:1526px;top:759px;width:140px;height:13px;background:#000;"></div>
<div class="t" style="left:1247px;top:747.43px;font-size:11.3px;color:#000;transform:translateX(-50%);">0,000</div>
<div class="t" style="left:1526px;top:747.43px;font-size:11.3px;color:#000;transform:translateX(-50%);">0,500</div>
<div class="t" style="left:1793px;top:747.43px;font-size:11.3px;color:#000;">1,000 (m)</div>
<div class="t" style="left:1386px;top:780.43px;font-size:11.3px;color:#000;transform:translateX(-50%);">0,250</div>
<div class="t" style="left:1666px;top:780.43px;font-size:11.3px;color:#000;transform:translateX(-50%);">0,750</div>
<div class="r" style="left:497px;top:809px;width:2059px;height:211px;background:#eeeef2;"></div>
<div class="r" style="left:497px;top:813px;width:1227px;height:207px;background:#eeeef2;border-top:1px solid #c8cadc;border-left:1px solid #c8cadc;border-right:1px solid #c8cadc;box-sizing:border-box;"></div>
<div class="t" style="left:502px;top:818.43px;font-size:11.3px;color:#333;">Graph</div>
<svg class="s" style="left:538px;top:819px" width="1116" height="8"><rect width="1116" height="8" fill="url(#dotpat)"/></svg>
<svg class="s" style="left:1658px;top:820px;" width="9" height="5" viewBox="0 0 9 5"><path d="M0 0 H9 L4.5 5 Z" fill="#1e1e1e"/></svg>
<svg class="s" style="left:1674px;top:817px;" width="8" height="12" viewBox="0 0 8 12"><path d="M1.5 0.5 H6.5 M2.5 0.5 V6 M5.5 0.5 V6 M0.5 6.5 H7.5 M4 6.5 V12" fill="none" stroke="#1e1e1e" stroke-width="1.3"/></svg>
<svg class="s" style="left:1689px;top:817px;" width="11" height="11" viewBox="0 0 11 11"><rect x="0.75" y="0.75" width="9.5" height="9.5" fill="none" stroke="#1e1e1e" stroke-width="1.5"/><path d="M0.75 1.5 H10.25" stroke="#1e1e1e" stroke-width="2"/></svg>
<svg class="s" style="left:1706px;top:817px;" width="10" height="10" viewBox="0 0 10 10"><path d="M1 1 L9 9 M9 1 L1 9" stroke="#1e1e1e" stroke-width="1.5"/></svg>
<svg class="s" style="left:507px;top:838px" width="5" height="16"><rect width="5" height="16" fill="url(#dotpat)"/></svg>
<div class="t" style="left:523px;top:841.43px;font-size:11.3px;color:#1e1e1e;letter-spacing:0.5px;">Animation</div>
<svg class="s" style="left:588px;top:840px;" width="13" height="14" viewBox="0 0 13 14"><rect x="0" y="1" width="2.5" height="12" fill="#777"/><path d="M12 1 L4 7 L12 13 Z" fill="#bbb"/></svg>
<svg class="s" style="left:609px;top:840px;" width="12" height="14" viewBox="0 0 12 14"><path d="M1 1 L11 7 L1 13 Z" fill="#d4a017"/></svg>
<div class="r" style="left:627px;top:835px;width:23px;height:23px;background:#e4ecf8;border:1px solid #3399ff;box-sizing:border-box;"></div>
<div class="r" style="left:632px;top:840px;width:12px;height:12px;background:#d4a017;border:1px solid #555;box-sizing:border-box;"></div>
<svg class="s" style="left:654px;top:840px;" width="13" height="14" viewBox="0 0 13 14"><path d="M1 1 L9 7 L1 13 Z" fill="#bbb"/><rect x="10.5" y="1" width="2.5" height="12" fill="#777"/></svg>
<div class="r" style="left:673px;top:838px;width:1px;height:18px;background:#d2d2da;"></div>
<div class="r" style="left:677px;top:835px;width:22px;height:23px;background:#e4ecf8;border:1px solid #3399ff;box-sizing:border-box;"></div>
<svg class="s" style="left:681px;top:839px;" width="14" height="15" viewBox="0 0 14 15"><path d="M1 1 V12 H13 V1 M5 1 V12 M9 1 V12 M1 1 H13" fill="none" stroke="#2a9a2a" stroke-width="1.2"/><path d="M1 14 H13" stroke="#e22" stroke-width="1.5" stroke-dasharray="2 1"/></svg>
<svg class="s" style="left:703px;top:839px;" width="14" height="15" viewBox="0 0 14 15"><path d="M1 1 V12 H13 V1 M5 1 V12 M9 1 V12 M1 1 H13" fill="none" stroke="#2a60d0" stroke-width="1.2"/><path d="M1 14 H13" stroke="#e22" stroke-width="1.5" stroke-dasharray="2 1"/></svg>
<div class="r" style="left:723px;top:838px;width:1px;height:18px;background:#d2d2da;"></div>
<div class="r" style="left:727px;top:836px;width:100px;height:22px;background:#fff;border:1px solid #c8cadc;box-sizing:border-box;"></div>
<div class="t" style="left:731px;top:842.43px;font-size:11.3px;color:#1e1e1e;">20 Frames</div>
<svg class="s" style="left:817px;top:845px;" width="7" height="4" viewBox="0 0 7 4"><path d="M0 0 H7 L3.5 4 Z" fill="#555"/></svg>
<div class="r" style="left:827px;top:836px;width:100px;height:22px;background:#fff;border:1px solid #c8cadc;box-sizing:border-box;"></div>
<div class="t" style="left:831px;top:842.43px;font-size:11.3px;color:#1e1e1e;">2 Sec (Auto)</div>
<svg class="s" style="left:917px;top:845px;" width="7" height="4" viewBox="0 0 7 4"><path d="M0 0 H7 L3.5 4 Z" fill="#555"/></svg>
<div class="r" style="left:929px;top:838px;width:1px;height:18px;background:#d2d2da;"></div>
<svg class="s" style="left:936px;top:839px;" width="15" height="15" viewBox="0 0 15 15"><rect x="0.5" y="1.5" width="14" height="9" fill="#fff" stroke="#333"/><path d="M3 6 A3 3 0 0 1 10 5" fill="none" stroke="#e22" stroke-width="1.2"/><rect x="7" y="8" width="7" height="7" fill="#6aa8f0" stroke="#345" stroke-width="0.8"/></svg>
<div class="r" style="left:957px;top:838px;width:1px;height:18px;background:#d2d2da;"></div>
<svg class="s" style="left:964px;top:840px;" width="15" height="15" viewBox="0 0 15 15"><circle cx="6" cy="6" r="5" fill="none" stroke="#999" stroke-width="1.5"/><path d="M9.6 9.6 L13.5 13.5" stroke="#999" stroke-width="2"/></svg>
<svg class="s" style="left:986px;top:840px;" width="15" height="14" viewBox="0 0 15 14"><g stroke-width="2" stroke-dasharray="2 1"><path d="M2 0 V14" stroke="#e22"/><path d="M6 0 V14" stroke="#2a2"/><path d="M10 0 V14" stroke="#22e"/><path d="M14 0 V14" stroke="#e22"/></g></svg>
<svg class="s" style="left:1008px;top:840px;" width="16" height="14" viewBox="0 0 16 14"><path d="M1 9 L10 3 L14 6 L5 12 Z" fill="#bbb"/><path d="M3 12 L2 14" stroke="#aaa"/></svg>
<div class="r" style="left:1029px;top:838px;width:1px;height:18px;background:#d2d2da;"></div>
<svg class="s" style="left:1036px;top:840px;" width="15" height="13" viewBox="0 0 15 13"><rect x="0.5" y="0.5" width="14" height="12" fill="#e0e0e0" stroke="#999"/><path d="M1 4 H14 M1 8 H14" stroke="#777"/></svg>
<svg class="s" style="left:1058px;top:840px;" width="15" height="13" viewBox="0 0 15 13"><rect x="0.5" y="0.5" width="14" height="12" fill="#e0e0e0" stroke="#999"/><path d="M1 4 H14 M1 8 H14" stroke="#777"/></svg>
<div class="r" style="left:1079px;top:838px;width:1px;height:18px;background:#d2d2da;"></div>
<svg class="s" style="left:1086px;top:840px;" width="15" height="14" viewBox="0 0 15 14"><path d="M1 0 V14 M1 8 H4 M4 4 V12 M6 6 V10 M6 8 H14" stroke="#aaa" stroke-width="1"/></svg>
<div class="r" style="left:1106px;top:836px;width:58px;height:22px;background:#f0f0f0;border:1px solid #d0d2e0;box-sizing:border-box;"></div>
<div class="t" style="left:1109px;top:842.43px;font-size:11.3px;color:#a0a0a0;">3 Cycles</div>
<div class="t" style="left:1169px;top:841.43px;font-size:11.3px;color:#333;font-weight:bold;">SA</div>
<svg class="s" style="left:1188px;top:849px;" width="7" height="4" viewBox="0 0 7 4"><path d="M0 0 H7 L3.5 4 Z" fill="#1e1e1e"/></svg>
<div class="r" style="left:498px;top:860px;width:1225px;height:141px;background:#ffffff;"></div>
<div class="t" style="left:529px;top:890.00px;font-size:13px;color:#000;font-weight:bold;letter-spacing:0.3px;transform:translate(-50%,-50%) rotate(-90deg);transform-origin:center;">[Pa]</div>
<div class="t" style="left:594px;top:881.43px;font-size:11.3px;color:#000;transform:translateX(-100%);">3,3721e+8</div>
<div class="t" style="left:594px;top:916.43px;font-size:11.3px;color:#000;transform:translateX(-100%);">-1,4017e+8</div>
<svg class="s" style="left:0;top:0" width="2556" height="1020" viewBox="0 0 2556 1020"><path d="M605.4 883.8 H1700.0 M605.4 919.5 H1700.0 M598 884.3 H605 M598 919.0 H605" stroke="#b8b8b8" stroke-width="1"/><path d="M605.4 880 V926" stroke="#c8c8c8" stroke-width="1"/><path d="M605.4 919.0 V926" stroke="#999" stroke-width="1"/><path d="M742.2 919.0 V926" stroke="#999" stroke-width="1"/><path d="M879.0 919.0 V926" stroke="#999" stroke-width="1"/><path d="M1015.9 919.0 V926" stroke="#999" stroke-width="1"/><path d="M1152.7 919.0 V926" stroke="#999" stroke-width="1"/><path d="M1289.5 919.0 V926" stroke="#999" stroke-width="1"/><path d="M1426.3 919.0 V926" stroke="#999" stroke-width="1"/><path d="M1563.2 919.0 V926" stroke="#999" stroke-width="1"/><path d="M1700.0 919.0 V926" stroke="#999" stroke-width="1"/><polyline points="616.3,887.3 627.3,884.9 638.2,884.9 649.2,884.7 665.6,884.7 690.2,884.8 727.2,884.8 771.0,884.7 814.7,884.7 858.5,884.6 902.3,884.5 946.1,884.5 989.9,884.5 1033.7,884.5 1077.4,884.4 1121.2,884.4 1165.0,884.4 1208.8,884.4 1252.6,884.3 1296.4,884.3 1340.2,884.3 1383.9,884.3 1427.7,884.3 1471.5,884.3 1515.3,884.3 1559.1,884.3 1602.9,884.3 1646.6,884.3 1673.3,884.3 1700.0,884.3" fill="none" stroke="#008a00" stroke-width="1.2"/><rect x="614.8" y="885.8" width="3" height="3" fill="#008a00"/><rect x="625.8" y="883.4" width="3" height="3" fill="#008a00"/><rect x="636.7" y="883.4" width="3" height="3" fill="#008a00"/><rect x="647.7" y="883.2" width="3" height="3" fill="#008a00"/><rect x="664.1" y="883.2" width="3" height="3" fill="#008a00"/><rect x="688.7" y="883.3" width="3" height="3" fill="#008a00"/><rect x="725.7" y="883.3" width="3" height="3" fill="#008a00"/><rect x="769.5" y="883.2" width="3" height="3" fill="#008a00"/><rect x="813.2" y="883.2" width="3" height="3" fill="#008a00"/><rect x="857.0" y="883.1" width="3" height="3" fill="#008a00"/><rect x="900.8" y="883.0" width="3" height="3" fill="#008a00"/><rect x="944.6" y="883.0" width="3" height="3" fill="#008a00"/><rect x="988.4" y="883.0" width="3" height="3" fill="#008a00"/><rect x="1032.2" y="883.0" width="3" height="3" fill="#008a00"/><rect x="1075.9" y="882.9" width="3" height="3" fill="#008a00"/><rect x="1119.7" y="882.9" width="3" height="3" fill="#008a00"/><rect x="1163.5" y="882.9" width="3" height="3" fill="#008a00"/><rect x="1207.3" y="882.9" width="3" height="3" fill="#008a00"/><rect x="1251.1" y="882.8" width="3" height="3" fill="#008a00"/><rect x="1294.9" y="882.8" width="3" height="3" fill="#008a00"/><rect x="1338.7" y="882.8" width="3" height="3" fill="#008a00"/><rect x="1382.4" y="882.8" width="3" height="3" fill="#008a00"/><rect x="1426.2" y="882.8" width="3" height="3" fill="#008a00"/><rect x="1470.0" y="882.8" width="3" height="3" fill="#008a00"/><rect x="1513.8" y="882.8" width="3" height="3" fill="#008a00"/><rect x="1557.6" y="882.8" width="3" height="3" fill="#008a00"/><rect x="1601.4" y="882.8" width="3" height="3" fill="#008a00"/><rect x="1645.1" y="882.8" width="3" height="3" fill="#008a00"/><rect x="1671.8" y="882.8" width="3" height="3" fill="#008a00"/><rect x="1698.5" y="882.8" width="3" height="3" fill="#008a00"/><polyline points="616.3,907.8 627.3,907.8 638.2,907.8 649.2,907.8 665.6,907.8 690.2,907.8 727.2,907.8 771.0,907.8 814.7,907.8 858.5,907.8 902.3,907.8 946.1,907.8 989.9,907.8 1033.7,907.8 1077.4,907.8 1121.2,907.8 1165.0,907.8 1208.8,907.8 1252.6,907.8 1296.4,907.8 1340.2,907.8 1383.9,907.8 1427.7,907.8 1471.5,907.8 1515.3,907.8 1559.1,907.8 1602.9,907.8 1646.6,907.8 1673.3,907.8 1700.0,907.8" fill="none" stroke="#0000d8" stroke-width="1.2"/><rect x="614.8" y="906.3" width="3" height="3" fill="#0000d8"/><rect x="625.8" y="906.3" width="3" height="3" fill="#0000d8"/><rect x="636.7" y="906.3" width="3" height="3" fill="#0000d8"/><rect x="647.7" y="906.3" width="3" height="3" fill="#0000d8"/><rect x="664.1" y="906.3" width="3" height="3" fill="#0000d8"/><rect x="688.7" y="906.3" width="3" height="3" fill="#0000d8"/><rect x="725.7" y="906.3" width="3" height="3" fill="#0000d8"/><rect x="769.5" y="906.3" width="3" height="3" fill="#0000d8"/><rect x="813.2" y="906.3" width="3" height="3" fill="#0000d8"/><rect x="857.0" y="906.3" width="3" height="3" fill="#0000d8"/><rect x="900.8" y="906.3" width="3" height="3" fill="#0000d8"/><rect x="944.6" y="906.3" width="3" height="3" fill="#0000d8"/><rect x="988.4" y="906.3" width="3" height="3" fill="#0000d8"/><rect x="1032.2" y="906.3" width="3" height="3" fill="#0000d8"/><rect x="1075.9" y="906.3" width="3" height="3" fill="#0000d8"/><rect x="1119.7" y="906.3" width="3" height="3" fill="#0000d8"/><rect x="1163.5" y="906.3" width="3" height="3" fill="#0000d8"/><rect x="1207.3" y="906.3" width="3" height="3" fill="#0000d8"/><rect x="1251.1" y="906.3" width="3" height="3" fill="#0000d8"/><rect x="1294.9" y="906.3" width="3" height="3" fill="#0000d8"/><rect x="1338.7" y="906.3" width="3" height="3" fill="#0000d8"/><rect x="1382.4" y="906.3" width="3" height="3" fill="#0000d8"/><rect x="1426.2" y="906.3" width="3" height="3" fill="#0000d8"/><rect x="1470.0" y="906.3" width="3" height="3" fill="#0000d8"/><rect x="1513.8" y="906.3" width="3" height="3" fill="#0000d8"/><rect x="1557.6" y="906.3" width="3" height="3" fill="#0000d8"/><rect x="1601.4" y="906.3" width="3" height="3" fill="#0000d8"/><rect x="1645.1" y="906.3" width="3" height="3" fill="#0000d8"/><rect x="1671.8" y="906.3" width="3" height="3" fill="#0000d8"/><rect x="1698.5" y="906.3" width="3" height="3" fill="#0000d8"/><polyline points="616.3,915.4 627.3,916.9 638.2,917.0 649.2,917.1 665.6,917.3 690.2,917.5 727.2,917.9 771.0,918.1 814.7,918.3 858.5,918.5 902.3,918.7 946.1,918.7 989.9,918.8 1033.7,918.8 1077.4,918.8 1121.2,918.8 1165.0,918.9 1208.8,918.9 1252.6,918.9 1296.4,919.0 1340.2,919.0 1383.9,919.0 1427.7,919.0 1471.5,919.0 1515.3,919.0 1559.1,919.0 1602.9,919.0 1646.6,919.0 1673.3,919.0 1700.0,919.0" fill="none" stroke="#d00000" stroke-width="1.2"/><rect x="614.8" y="913.9" width="3" height="3" fill="#d00000"/><rect x="625.8" y="915.4" width="3" height="3" fill="#d00000"/><rect x="636.7" y="915.5" width="3" height="3" fill="#d00000"/><rect x="647.7" y="915.6" width="3" height="3" fill="#d00000"/><rect x="664.1" y="915.8" width="3" height="3" fill="#d00000"/><rect x="688.7" y="916.0" width="3" height="3" fill="#d00000"/><rect x="725.7" y="916.4" width="3" height="3" fill="#d00000"/><rect x="769.5" y="916.6" width="3" height="3" fill="#d00000"/><rect x="813.2" y="916.8" width="3" height="3" fill="#d00000"/><rect x="857.0" y="917.0" width="3" height="3" fill="#d00000"/><rect x="900.8" y="917.2" width="3" height="3" fill="#d00000"/><rect x="944.6" y="917.2" width="3" height="3" fill="#d00000"/><rect x="988.4" y="917.3" width="3" height="3" fill="#d00000"/><rect x="1032.2" y="917.3" width="3" height="3" fill="#d00000"/><rect x="1075.9" y="917.3" width="3" height="3" fill="#d00000"/><rect x="1119.7" y="917.3" width="3" height="3" fill="#d00000"/><rect x="1163.5" y="917.4" width="3" height="3" fill="#d00000"/><rect x="1207.3" y="917.4" width="3" height="3" fill="#d00000"/><rect x="1251.1" y="917.4" width="3" height="3" fill="#d00000"/><rect x="1294.9" y="917.5" width="3" height="3" fill="#d00000"/><rect x="1338.7" y="917.5" width="3" height="3" fill="#d00000"/><rect x="1382.4" y="917.5" width="3" height="3" fill="#d00000"/><rect x="1426.2" y="917.5" width="3" height="3" fill="#d00000"/><rect x="1470.0" y="917.5" width="3" height="3" fill="#d00000"/><rect x="1513.8" y="917.5" width="3" height="3" fill="#d00000"/><rect x="1557.6" y="917.5" width="3" height="3" fill="#d00000"/><rect x="1601.4" y="917.5" width="3" height="3" fill="#d00000"/><rect x="1645.1" y="917.5" width="3" height="3" fill="#d00000"/><rect x="1671.8" y="917.5" width="3" height="3" fill="#d00000"/><rect x="1698.5" y="917.5" width="3" height="3" fill="#d00000"/><path d="M1700 879 V919" stroke="#000" stroke-width="2.5"/></svg>
<div class="t" style="left:602.4px;top:932.43px;font-size:11.3px;color:#000;">0,</div>
<div class="t" style="left:739.2249999999999px;top:932.43px;font-size:11.3px;color:#000;">0,125</div>
<div class="t" style="left:876.05px;top:932.43px;font-size:11.3px;color:#000;">0,25</div>
<div class="t" style="left:1012.875px;top:932.43px;font-size:11.3px;color:#000;">0,375</div>
<div class="t" style="left:1149.6999999999998px;top:932.43px;font-size:11.3px;color:#000;">0,5</div>
<div class="t" style="left:1286.525px;top:932.43px;font-size:11.3px;color:#000;">0,625</div>
<div class="t" style="left:1423.35px;top:932.43px;font-size:11.3px;color:#000;">0,75</div>
<div class="t" style="left:1560.1749999999997px;top:932.43px;font-size:11.3px;color:#000;">0,875</div>
<div class="t" style="left:1691px;top:932.43px;font-size:11.3px;color:#000;">1,</div>
<div class="t" style="left:1696px;top:865.43px;font-size:11.3px;color:#000;font-weight:bold;transform:translateX(-50%);">1,</div>
<div class="t" style="left:1153px;top:955.43px;font-size:11.3px;color:#000;font-weight:bold;transform:translateX(-50%);">[s]</div>
<div class="r" style="left:605px;top:974px;width:1096px;height:15px;background:#f0f0f0;border:1px solid #a8a8a8;box-sizing:border-box;"></div>
<div class="t" style="left:1153px;top:977.43px;font-size:11.3px;color:#000;transform:translateX(-50%);">1</div>
<div class="r" style="left:498px;top:1001px;width:1225px;height:19px;background:#eeeef2;border-top:1px solid #c8cadc;box-sizing:border-box;"></div>
<div class="t" style="left:503px;top:1005.43px;font-size:11.3px;color:#333;">Messages</div>
<div class="r" style="left:560px;top:1001px;width:44px;height:19px;background:#f4f4f6;border:1px solid #c8cadc;border-top:none;box-sizing:border-box;"></div>
<div class="t" style="left:566px;top:1005.43px;font-size:11.3px;color:#2b6cc4;">Graph</div>
<div class="r" style="left:1728px;top:813px;width:828px;height:207px;background:#eeeef2;border-top:1px solid #c8cadc;border-left:1px solid #c8cadc;box-sizing:border-box;"></div>
<div class="t" style="left:1733px;top:818.43px;font-size:11.3px;color:#333;">Tabular Data</div>
<svg class="s" style="left:1806px;top:819px" width="680" height="8"><rect width="680" height="8" fill="url(#dotpat)"/></svg>
<svg class="s" style="left:2489px;top:820px;" width="9" height="5" viewBox="0 0 9 5"><path d="M0 0 H9 L4.5 5 Z" fill="#1e1e1e"/></svg>
<svg class="s" style="left:2505px;top:817px;" width="8" height="12" viewBox="0 0 8 12"><path d="M1.5 0.5 H6.5 M2.5 0.5 V6 M5.5 0.5 V6 M0.5 6.5 H7.5 M4 6.5 V12" fill="none" stroke="#1e1e1e" stroke-width="1.3"/></svg>
<svg class="s" style="left:2520px;top:817px;" width="11" height="11" viewBox="0 0 11 11"><rect x="0.75" y="0.75" width="9.5" height="9.5" fill="none" stroke="#1e1e1e" stroke-width="1.5"/><path d="M0.75 1.5 H10.25" stroke="#1e1e1e" stroke-width="2"/></svg>
<svg class="s" style="left:2537px;top:817px;" width="10" height="10" viewBox="0 0 10 10"><path d="M1 1 L9 9 M9 1 L1 9" stroke="#1e1e1e" stroke-width="1.5"/></svg>
<div class="r" style="left:1729px;top:833px;width:1811px;height:187px;background:#a0a0a0;"></div>
<div class="r" style="left:1729px;top:833px;width:352px;height:187px;background:#ffffff;"></div>
<div class="r" style="left:1729px;top:833px;width:352px;height:18px;background:#f0f0f0;"></div>
<div class="t" style="left:1752px;top:837.43px;font-size:11.3px;color:#000;">Time [s]</div>
<div class="r" style="left:1801px;top:836px;width:14px;height:14px;background:#fff;border:1px solid #888;box-sizing:border-box;"></div>
<svg class="s" style="left:1803px;top:838px;" width="10" height="10" viewBox="0 0 10 10"><path d="M1 5 L4 8 L9 1.5" fill="none" stroke="#000" stroke-width="1.6"/></svg>
<div class="t" style="left:1819px;top:837.43px;font-size:11.3px;color:#d00000;">Minimum [Pa]</div>
<div class="r" style="left:1898px;top:836px;width:14px;height:14px;background:#fff;border:1px solid #888;box-sizing:border-box;"></div>
<svg class="s" style="left:1900px;top:838px;" width="10" height="10" viewBox="0 0 10 10"><path d="M1 5 L4 8 L9 1.5" fill="none" stroke="#000" stroke-width="1.6"/></svg>
<div class="t" style="left:1916px;top:837.43px;font-size:11.3px;color:#00a000;">Maximum [Pa]</div>
<div class="r" style="left:1996px;top:836px;width:14px;height:14px;background:#fff;border:1px solid #888;box-sizing:border-box;"></div>
<svg class="s" style="left:1998px;top:838px;" width="10" height="10" viewBox="0 0 10 10"><path d="M1 5 L4 8 L9 1.5" fill="none" stroke="#000" stroke-width="1.6"/></svg>
<div class="t" style="left:2014px;top:837.43px;font-size:11.3px;color:#0000e0;">Average [Pa]</div>
<div class="r" style="left:1749px;top:851px;width:332px;height:14.5px;background:#e8e7e4;"></div>
<div class="r" style="left:1729px;top:851px;width:19px;height:14.5px;background:#f4f4f4;"></div>
<div class="t" style="left:1731px;top:853.68px;font-size:11.3px;color:#000;">1</div>
<div class="r" style="left:1749px;top:851px;width:46px;height:14.5px;overflow:hidden;"><div class="t" style="left:3px;top:2.68px;font-size:11.3px;color:#000;">1,e-002</div>
</div>
<div class="t" style="left:1799px;top:853.68px;font-size:11.3px;color:#000;">-9,0035e+007</div>
<div class="t" style="left:1896px;top:853.68px;font-size:11.3px;color:#000;">2,9635e+008</div>
<div class="t" style="left:1994px;top:853.68px;font-size:11.3px;color:#000;">1,3521e+007</div>
<div class="r" style="left:1749px;top:865.5px;width:332px;height:14.700000000000045px;background:#e8e7e4;"></div>
<div class="r" style="left:1729px;top:865.5px;width:19px;height:14.700000000000045px;background:#f4f4f4;"></div>
<div class="t" style="left:1731px;top:868.28px;font-size:11.3px;color:#000;">2</div>
<div class="r" style="left:1749px;top:865.5px;width:46px;height:14.700000000000045px;overflow:hidden;"><div class="t" style="left:3px;top:2.78px;font-size:11.3px;color:#000;">2,e-002</div>
</div>
<div class="t" style="left:1799px;top:868.28px;font-size:11.3px;color:#000;">-1,1127e+008</div>
<div class="t" style="left:1896px;top:868.28px;font-size:11.3px;color:#000;">3,2843e+008</div>
<div class="t" style="left:1994px;top:868.28px;font-size:11.3px;color:#000;">1,4728e+007</div>
<div class="r" style="left:1749px;top:880.2px;width:332px;height:15.0px;background:#e8e7e4;"></div>
<div class="r" style="left:1729px;top:880.2px;width:19px;height:15.0px;background:#f4f4f4;"></div>
<div class="t" style="left:1731px;top:883.13px;font-size:11.3px;color:#000;">3</div>
<div class="r" style="left:1749px;top:880.2px;width:46px;height:15.0px;overflow:hidden;"><div class="t" style="left:3px;top:2.93px;font-size:11.3px;color:#000;">3,e-002</div>
</div>
<div class="t" style="left:1799px;top:883.13px;font-size:11.3px;color:#000;">-1,128e+008</div>
<div class="t" style="left:1896px;top:883.13px;font-size:11.3px;color:#000;">3,2905e+008</div>
<div class="t" style="left:1994px;top:883.13px;font-size:11.3px;color:#000;">1,4755e+007</div>
<div class="r" style="left:1749px;top:895.2px;width:332px;height:15.199999999999932px;background:#e8e7e4;"></div>
<div class="r" style="left:1729px;top:895.2px;width:19px;height:15.199999999999932px;background:#f4f4f4;"></div>
<div class="t" style="left:1731px;top:898.23px;font-size:11.3px;color:#000;">4</div>
<div class="r" style="left:1749px;top:895.2px;width:46px;height:15.199999999999932px;overflow:hidden;"><div class="t" style="left:3px;top:3.03px;font-size:11.3px;color:#000;">4,e-002</div>
</div>
<div class="t" style="left:1799px;top:898.23px;font-size:11.3px;color:#000;">-1,1339e+008</div>
<div class="t" style="left:1896px;top:898.23px;font-size:11.3px;color:#000;">3,3217e+008</div>
<div class="t" style="left:1994px;top:898.23px;font-size:11.3px;color:#000;">1,4701e+007</div>
<div class="r" style="left:1749px;top:910.4px;width:332px;height:17.899999999999977px;background:#e8e7e4;"></div>
<div class="r" style="left:1729px;top:910.4px;width:19px;height:17.899999999999977px;background:#f4f4f4;"></div>
<div class="t" style="left:1731px;top:914.78px;font-size:11.3px;color:#000;">5</div>
<div class="r" style="left:1749px;top:910.4px;width:46px;height:17.899999999999977px;overflow:hidden;"><div class="t" style="left:3px;top:4.38px;font-size:11.3px;color:#000;">5,5e-002</div>
</div>
<div class="t" style="left:1799px;top:914.78px;font-size:11.3px;color:#000;">-1,1642e+008</div>
<div class="t" style="left:1896px;top:914.78px;font-size:11.3px;color:#000;">3,3179e+008</div>
<div class="t" style="left:1994px;top:914.78px;font-size:11.3px;color:#000;">1,475e+007</div>
<div class="r" style="left:1749px;top:928.3px;width:332px;height:17.90000000000009px;background:#e8e7e4;"></div>
<div class="r" style="left:1729px;top:928.3px;width:19px;height:17.90000000000009px;background:#f4f4f4;"></div>
<div class="t" style="left:1731px;top:932.68px;font-size:11.3px;color:#000;">6</div>
<div class="r" style="left:1749px;top:928.3px;width:46px;height:17.90000000000009px;overflow:hidden;"><div class="t" style="left:3px;top:4.38px;font-size:11.3px;color:#000;">7,75e-002</div>
</div>
<div class="t" style="left:1799px;top:932.68px;font-size:11.3px;color:#000;">-1,1993e+008</div>
<div class="t" style="left:1896px;top:932.68px;font-size:11.3px;color:#000;">3,308e+008</div>
<div class="t" style="left:1994px;top:932.68px;font-size:11.3px;color:#000;">1,476e+007</div>
<div class="r" style="left:1749px;top:946.2px;width:332px;height:17.899999999999977px;background:#e8e7e4;"></div>
<div class="r" style="left:1729px;top:946.2px;width:19px;height:17.899999999999977px;background:#f4f4f4;"></div>
<div class="t" style="left:1731px;top:950.58px;font-size:11.3px;color:#000;">7</div>
<div class="r" style="left:1749px;top:946.2px;width:46px;height:17.899999999999977px;overflow:hidden;"><div class="t" style="left:3px;top:4.38px;font-size:11.3px;color:#000;">0,11125</div>
</div>
<div class="t" style="left:1799px;top:950.58px;font-size:11.3px;color:#000;">-1,2467e+008</div>
<div class="t" style="left:1896px;top:950.58px;font-size:11.3px;color:#000;">3,3098e+008</div>
<div class="t" style="left:1994px;top:950.58px;font-size:11.3px;color:#000;">1,4742e+007</div>
<div class="r" style="left:1749px;top:964.1px;width:332px;height:17.899999999999977px;background:#e8e7e4;"></div>
<div class="r" style="left:1729px;top:964.1px;width:19px;height:17.899999999999977px;background:#f4f4f4;"></div>
<div class="t" style="left:1731px;top:968.48px;font-size:11.3px;color:#000;">8</div>
<div class="r" style="left:1749px;top:964.1px;width:46px;height:17.899999999999977px;overflow:hidden;"><div class="t" style="left:3px;top:4.38px;font-size:11.3px;color:#000;">0,15125</div>
</div>
<div class="t" style="left:1799px;top:968.48px;font-size:11.3px;color:#000;">-1,2837e+008</div>
<div class="t" style="left:1896px;top:968.48px;font-size:11.3px;color:#000;">3,316e+008</div>
<div class="t" style="left:1994px;top:968.48px;font-size:11.3px;color:#000;">1,4714e+007</div>
<div class="r" style="left:1749px;top:982px;width:332px;height:18px;background:#e8e7e4;"></div>
<div class="r" style="left:1729px;top:982px;width:19px;height:18px;background:#f4f4f4;"></div>
<div class="t" style="left:1731px;top:986.43px;font-size:11.3px;color:#000;">9</div>
<div class="r" style="left:1749px;top:982px;width:46px;height:18px;overflow:hidden;"><div class="t" style="left:3px;top:4.43px;font-size:11.3px;color:#000;">0,19125</div>
</div>
<div class="t" style="left:1799px;top:986.43px;font-size:11.3px;color:#000;">-1,31e+008</div>
<div class="t" style="left:1896px;top:986.43px;font-size:11.3px;color:#000;">3,3219e+008</div>
<div class="t" style="left:1994px;top:986.43px;font-size:11.3px;color:#000;">1,4691e+007</div>
<div class="r" style="left:1749px;top:1000px;width:332px;height:18.299999999999955px;background:#e8e7e4;"></div>
<div class="r" style="left:1729px;top:1000px;width:19px;height:18.299999999999955px;background:#f4f4f4;"></div>
<div class="t" style="left:1731px;top:1004.58px;font-size:11.3px;color:#000;">10</div>
<div class="r" style="left:1749px;top:1000px;width:46px;height:18.299999999999955px;overflow:hidden;"><div class="t" style="left:3px;top:4.58px;font-size:11.3px;color:#000;">0,23125</div>
</div>
<div class="t" style="left:1799px;top:1004.58px;font-size:11.3px;color:#000;">-1,3303e+008</div>
<div class="t" style="left:1896px;top:1004.58px;font-size:11.3px;color:#000;">3,3282e+008</div>
<div class="t" style="left:1994px;top:1004.58px;font-size:11.3px;color:#000;">1,4668e+007</div>
<div class="r" style="left:1729px;top:850px;width:352px;height:1px;background:#d4d4d4;"></div>
<div class="r" style="left:1729px;top:864.5px;width:352px;height:1px;background:#d4d4d4;"></div>
<div class="r" style="left:1729px;top:879.2px;width:352px;height:1px;background:#d4d4d4;"></div>
<div class="r" style="left:1729px;top:894.2px;width:352px;height:1px;background:#d4d4d4;"></div>
<div class="r" style="left:1729px;top:909.4px;width:352px;height:1px;background:#d4d4d4;"></div>
<div class="r" style="left:1729px;top:927.3px;width:352px;height:1px;background:#d4d4d4;"></div>
<div class="r" style="left:1729px;top:945.2px;width:352px;height:1px;background:#d4d4d4;"></div>
<div class="r" style="left:1729px;top:963.1px;width:352px;height:1px;background:#d4d4d4;"></div>
<div class="r" style="left:1729px;top:981px;width:352px;height:1px;background:#d4d4d4;"></div>
<div class="r" style="left:1729px;top:999px;width:352px;height:1px;background:#d4d4d4;"></div>
<div class="r" style="left:1729px;top:1017.3px;width:352px;height:1px;background:#d4d4d4;"></div>
<div class="r" style="left:1729px;top:850px;width:19px;height:1.5px;background:#6a6a6a;"></div>
<div class="r" style="left:1729px;top:864.5px;width:19px;height:1.5px;background:#6a6a6a;"></div>
<div class="r" style="left:1729px;top:879.2px;width:19px;height:1.5px;background:#6a6a6a;"></div>
<div class="r" style="left:1729px;top:894.2px;width:19px;height:1.5px;background:#6a6a6a;"></div>
<div class="r" style="left:1729px;top:909.4px;width:19px;height:1.5px;background:#6a6a6a;"></div>
<div class="r" style="left:1729px;top:927.3px;width:19px;height:1.5px;background:#6a6a6a;"></div>
<div class="r" style="left:1729px;top:945.2px;width:19px;height:1.5px;background:#6a6a6a;"></div>
<div class="r" style="left:1729px;top:963.1px;width:19px;height:1.5px;background:#6a6a6a;"></div>
<div class="r" style="left:1729px;top:981px;width:19px;height:1.5px;background:#6a6a6a;"></div>
<div class="r" style="left:1729px;top:999px;width:19px;height:1.5px;background:#6a6a6a;"></div>
<div class="r" style="left:1729px;top:1017.3px;width:19px;height:1.5px;background:#6a6a6a;"></div>
<div class="r" style="left:1748px;top:833px;width:1.5px;height:187px;background:#6a6a6a;"></div>
<div class="r" style="left:1796px;top:833px;width:1px;height:187px;background:#d4d4d4;"></div>
<div class="r" style="left:1893px;top:833px;width:1px;height:187px;background:#d4d4d4;"></div>
<div class="r" style="left:1991px;top:833px;width:1px;height:187px;background:#d4d4d4;"></div>
<div class="r" style="left:2081px;top:833px;width:1px;height:187px;background:#d4d4d4;"></div>
<div class="r" style="left:1749px;top:850px;width:332px;height:1px;background:#bdbdbd;"></div>
<div class="r" style="left:2540px;top:833px;width:16px;height:187px;background:#f0f0f0;"></div>
<div class="r" style="left:2541px;top:850px;width:15px;height:49px;background:#cdcdcd;"></div>
<svg class="s" style="left:2544px;top:838px;" width="9" height="6" viewBox="0 0 9 6"><path d="M0.8 5 L4.5 1.2 L8.2 5" fill="none" stroke="#555" stroke-width="1.4"/></svg>
<svg class="s" style="left:2544px;top:1009px;" width="9" height="6" viewBox="0 0 9 6"><path d="M0.8 1 L4.5 4.8 L8.2 1" fill="none" stroke="#555" stroke-width="1.4"/></svg>

</body></html>
